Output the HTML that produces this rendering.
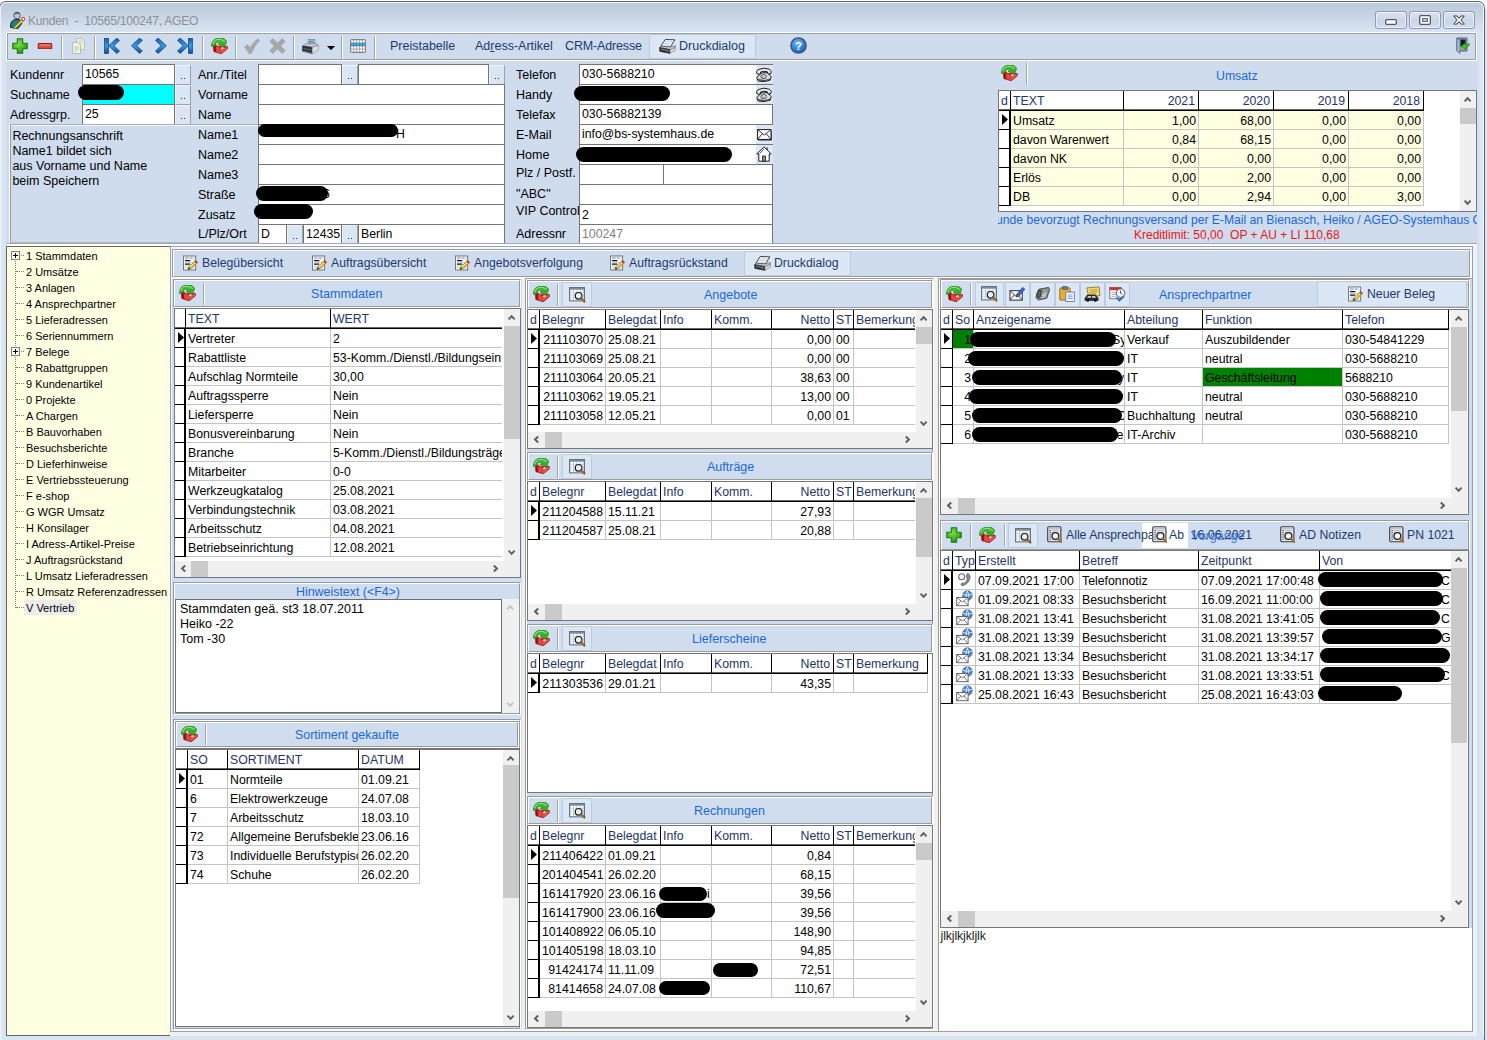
<!DOCTYPE html>
<html lang="de"><head><meta charset="utf-8"><title>Kunden - 10565/100247, AGEO</title>
<style>
html,body{margin:0;padding:0;background:#fff}
body{width:1487px;height:1040px;position:relative;overflow:hidden;font-family:"Liberation Sans",sans-serif;font-size:12.3px;color:#000}
div{position:absolute;box-sizing:content-box}
.t{white-space:nowrap}
.bl{color:#1c68da}
.gh{background:#fff;color:#24356a;white-space:nowrap;overflow:hidden}
.gc{white-space:nowrap;overflow:hidden}
.inp{background:#fff;border:1px solid #747474;box-sizing:border-box;white-space:nowrap;overflow:hidden;line-height:19px;padding-left:2px}
.dd{background:#dbe6f5;border:1px solid #eef3fa;border-right-color:#98a2b0;border-bottom-color:#98a2b0;box-sizing:border-box}.dd i{position:absolute;width:1px;height:1px;background:#1a2a55;top:12px}
.blob{background:#000;border-radius:9px}
.tree{font-size:11px;white-space:nowrap}
.hd{background:#d0ddef;box-sizing:border-box;border:1px solid #fff;border-right-color:#a0a8b4;border-bottom-color:#a0a8b4}
.sep{width:1px;background:#a0a6b0;border-right:1px solid #fff}
.btn{box-sizing:border-box;border:1px solid #bccbe0;background:#dbe7f5}
</style></head><body>
<div style="left:-1px;top:1px;width:1486px;height:1040px;box-sizing:border-box;border:1px solid #5b626c;border-bottom:none;border-radius:7px 7px 0 0;background:#cfdcee;overflow:hidden">
<div style="left:0;top:0;width:1484px;height:31px;background:linear-gradient(#bccadb 0,#c2cfdf 8px,#cfdbea 20px,#dae5f2 31px)"></div>
<div style="left:0;top:0;width:1484px;height:1040px;border-left:1px solid #eef3fa;border-top:1px solid #f4f8fc;border-right:1px solid #f4f8fc;border-radius:6px 6px 0 0;box-sizing:border-box"></div>
<div style="left:1px;top:31px;width:5px;height:1008px;background:linear-gradient(90deg,#dfe8f5,#d6e1f1)"></div>
<div style="left:1477px;top:31px;width:6px;height:1008px;background:linear-gradient(90deg,#d3dff0,#dfe8f5)"></div>
<div style="left:1px;top:1034px;width:1483px;height:6px;background:#d9e4f3"></div>
</div>
<div style="left:1485px;top:9px;width:2px;height:1031px;background:#dbe6f4"></div>
<div style="left:9px;top:11px"><svg width="16" height="18" viewBox="0 0 16 18" style="display:block"><circle cx="8" cy="4.5" r="3.3" fill="#c8c8c8" stroke="#444" stroke-width=".8"/><path d="M5 3.2 Q8 -.5 11 3" fill="#2a8a8a" stroke="#1a5a5a" stroke-width=".5"/><path d="M1.5 16.5 Q1 9.5 6 8.5 L10 8.5 Q13 9 12.5 13 L9 17.5Z" fill="#1f7f8a" stroke="#0a1a40" stroke-width=".9"/><path d="M4.5 16.8 L12.8 8.2 L14.6 10 L6.4 17.8Z" fill="#f0d818" stroke="#6a5a10" stroke-width=".7"/><circle cx="14.3" cy="8" r="1.6" fill="#fff" stroke="#d02020" stroke-width="1"/></svg></div>
<div class="t" style="left:28px;top:13.0px;height:16px;line-height:16px;color:#8d9096;font-size:12.2px;letter-spacing:-.3px;white-space:pre">Kunden  -  10565/100247, AGEO</div>
<div style="left:1375px;top:11px;width:32px;height:18px;box-sizing:border-box;border:1px solid #8c9ab4;border-radius:3px;background:linear-gradient(#d9e3f1,#c9d6e8 55%,#d3deee);box-shadow:inset 0 0 0 1px rgba(255,255,255,.55)"><svg width="12" height="6" style="position:absolute;left:9px;top:7px"><rect x=".7" y=".7" width="10.6" height="4.6" rx="1" fill="#fff" stroke="#4f5864" stroke-width="1.3"/></svg></div>
<div style="left:1409px;top:11px;width:32px;height:18px;box-sizing:border-box;border:1px solid #8c9ab4;border-radius:3px;background:linear-gradient(#d9e3f1,#c9d6e8 55%,#d3deee);box-shadow:inset 0 0 0 1px rgba(255,255,255,.55)"><svg width="12" height="10" style="position:absolute;left:9px;top:3px"><rect x=".7" y=".7" width="10.6" height="8.6" rx="1" fill="#fff" stroke="#4f5864" stroke-width="1.3"/><rect x="3.6" y="3.6" width="4.8" height="2.8" fill="#d0dbea" stroke="#4f5864" stroke-width="1"/></svg></div>
<div style="left:1443px;top:11px;width:32px;height:18px;box-sizing:border-box;border:1px solid #8c9ab4;border-radius:3px;background:linear-gradient(#d9e3f1,#c9d6e8 55%,#d3deee);box-shadow:inset 0 0 0 1px rgba(255,255,255,.55)"><svg width="12" height="10" style="position:absolute;left:9px;top:3px"><path d="M.8 1 L3.4 .8 L6 3.2 L8.6 .8 L11.2 1 L8 5 L11.2 9 L8.6 9.2 L6 6.8 L3.4 9.2 L.8 9 L4 5Z" fill="#fff" stroke="#4f5864" stroke-width="1.1" stroke-linejoin="round"/></svg></div>
<div style="left:6px;top:32px;width:1471px;height:29px;box-sizing:border-box;border:1px solid #fff"></div>
<div style="left:7px;top:33px;width:1469px;height:27px;box-sizing:border-box;border:1px solid #9aa0aa"></div>
<div style="left:12px;top:38px"><svg width="16" height="16" viewBox="0 0 16 16" style="display:block"><defs><radialGradient id="gp" cx=".4" cy=".35" r=".8"><stop offset="0" stop-color="#7be04a"/><stop offset=".6" stop-color="#3fae1c"/><stop offset="1" stop-color="#22800e"/></radialGradient></defs><path d="M5.3 .8 H10.7 V5.3 H15.2 V10.7 H10.7 V15.2 H5.3 V10.7 H.8 V5.3 H5.3Z" fill="url(#gp)" stroke="#1f7a0f" stroke-width="1.1" stroke-linejoin="round"/></svg></div>
<div style="left:37px;top:43px"><svg width="16" height="6.4" viewBox="0 0 16 7" style="display:block"><rect x=".6" y=".6" width="14.8" height="5.8" rx="1" fill="#e0483c" stroke="#8e2018" stroke-width="1.1"/><rect x="1.8" y="1.6" width="12.4" height="1.6" fill="#f08a80" opacity=".8"/></svg></div>
<div class="sep" style="left:61px;top:36px;height:23px"></div>
<div style="left:71px;top:38px"><svg width="15" height="16" viewBox="0 0 15 16" style="display:block"><path d="M5.5 .5 H11 L13.5 3 V11.5 H5.5Z" fill="#eef0e6" stroke="#b9bcb0" stroke-width=".9"/><path d="M1.5 4.5 H7 L9.5 7 V15.5 H1.5Z" fill="#f1f2ea" stroke="#b5b8ac" stroke-width=".9"/><path d="M3 9 H8 M3 11 H8 M3 13 H6" stroke="#b8d0b0" stroke-width="1"/><path d="M8 3 H11 M8 5 H12" stroke="#c0d6b8" stroke-width="1"/></svg></div>
<div class="sep" style="left:94px;top:36px;height:23px"></div>
<div style="left:104px;top:38px"><svg width="16" height="16" viewBox="0 0 16 16" style="display:block"><defs><linearGradient id="nf" x1="0" y1="0" x2="0" y2="1"><stop offset="0" stop-color="#1c58a8"/><stop offset=".5" stop-color="#3a9ade"/><stop offset="1" stop-color="#174a90"/></linearGradient></defs><rect x=".4" y=".2" width="4.2" height="15.3" fill="url(#nf)" stroke="#164684" stroke-width=".7"/><path transform="translate(4.6 0)" d="M8.2 0 L11 2.4 L5.4 7.75 L11 13.1 L8.2 15.5 L0 7.75Z" fill="url(#nf)" stroke="#164684" stroke-width=".7"/></svg></div>
<div style="left:131px;top:38px"><svg width="12" height="16" viewBox="0 0 12 16" style="display:block"><defs><linearGradient id="np" x1="0" y1="0" x2="0" y2="1"><stop offset="0" stop-color="#1c58a8"/><stop offset=".5" stop-color="#3a9ade"/><stop offset="1" stop-color="#174a90"/></linearGradient></defs><path transform="translate(.4 0)" d="M8.2 0 L11 2.4 L5.4 7.75 L11 13.1 L8.2 15.5 L0 7.75Z" fill="url(#np)" stroke="#164684" stroke-width=".7"/></svg></div>
<div style="left:155px;top:38px"><svg width="12" height="16" viewBox="0 0 12 16" style="display:block"><defs><linearGradient id="nn" x1="0" y1="0" x2="0" y2="1"><stop offset="0" stop-color="#1c58a8"/><stop offset=".5" stop-color="#3a9ade"/><stop offset="1" stop-color="#174a90"/></linearGradient></defs><path transform="translate(.4 0)" d="M2.8 0 L0 2.4 L5.6 7.75 L0 13.1 L2.8 15.5 L11 7.75Z" fill="url(#nn)" stroke="#164684" stroke-width=".7"/></svg></div>
<div style="left:177px;top:38px"><svg width="16" height="16" viewBox="0 0 16 16" style="display:block"><defs><linearGradient id="nl" x1="0" y1="0" x2="0" y2="1"><stop offset="0" stop-color="#1c58a8"/><stop offset=".5" stop-color="#3a9ade"/><stop offset="1" stop-color="#174a90"/></linearGradient></defs><rect x="11.4" y=".2" width="4.2" height="15.3" fill="url(#nl)" stroke="#164684" stroke-width=".7"/><path transform="translate(.4 0)" d="M2.8 0 L0 2.4 L5.6 7.75 L0 13.1 L2.8 15.5 L11 7.75Z" fill="url(#nl)" stroke="#164684" stroke-width=".7"/></svg></div>
<div class="sep" style="left:202px;top:36px;height:23px"></div>
<div style="left:211px;top:38px"><svg width="17" height="16" viewBox="0 0 17 16" style="display:block"><path d="M2.4 7.4 L4.4 6.8 L9.4 8.6 L16.4 8.6 L16.2 11 L10.2 15.8 L2.9 13.6Z" fill="#cc211c" stroke="#861010" stroke-width=".7" stroke-linejoin="round"/><path d="M2.5 7.6 L4.6 8 L5 14 L3 13.4Z" fill="#8e1410"/><path d="M5.2 8.4 L9.6 10 L9.8 15.2 L5.4 13.8Z" fill="#e04a42"/><path d="M10 10.4 L16 8.9 L16 10.8 L10.2 15.2Z" fill="#ee5248"/><path d="M10.4 9.4 L12.4 9.3 L12.4 10.8 L10.4 11.2Z" fill="#fff"/><path d="M5.6 7.4 L7.8 6.4 L7.6 8.2Z" fill="#fff" opacity=".95"/><path d="M.5 8.4 C.2 4.6 2 1.4 5.6 .5 C7.6 0 9.4 0 10.6 .4 L11.4 -.5 L15.6 3 L13.8 9 L7 6.4 L9.2 5.2 C7.4 3.8 4.8 4.2 4 6.2 L3.6 7.9Z" fill="#3fba2e" stroke="#227a18" stroke-width=".7" stroke-linejoin="round"/><path d="M1.7 6 C2.2 3.4 4 1.9 6.4 1.5 C8 1.2 9.6 1.4 10.8 1.8 L13.8 3.6" fill="none" stroke="#a4ec8c" stroke-width="1" opacity=".9"/><path d="M9 5.4 L13 7.6 L14.2 4" fill="#2a9a1e" opacity=".55"/></svg></div>
<div class="sep" style="left:235px;top:36px;height:23px"></div>
<div style="left:244px;top:38px"><svg width="16" height="16" viewBox="0 0 16 16" style="display:block"><path d="M.6 8.8 L3.4 6.6 L6 9.8 Q9.6 3.8 14 .8 L15.6 2.6 Q10.6 7.4 7.2 15.4 L5 15.4Z" fill="#a8a8a8" stroke="#9c9c9c" stroke-width=".6"/></svg></div>
<div style="left:269px;top:38px"><svg width="17" height="16" viewBox="0 0 17 16" style="display:block"><path d="M.8 3.4 L3.8 .6 L8.5 5 L13.2 .6 L16.2 3.4 L11.6 8 L16.2 12.6 L13.2 15.4 L8.5 11 L3.8 15.4 L.8 12.6 L5.4 8Z" fill="#a8a8a8" stroke="#9c9c9c" stroke-width=".6"/></svg></div>
<div class="sep" style="left:293px;top:36px;height:23px"></div>
<div style="left:302px;top:38.5px"><svg width="17" height="15" viewBox="0 0 17 15" style="display:block"><path d="M6 .5 H13 V5.4 H6Z" fill="#e4eef8" stroke="#7c8088" stroke-width=".8"/><path d="M7 1.4 H12 V4.6 H7Z" fill="#4a86d8"/><path d="M8.6 4.6 L10 2 L11.2 4.6Z" fill="#f4d020"/><path d="M.6 7 L4.6 4.6 H14.6 L16.4 6.4 L10.2 8.4Z" fill="#c4c8cc" stroke="#70747a" stroke-width=".6"/><path d="M.6 7 L10.2 8.4 L10.2 14.6 L.6 12.2Z" fill="#2c2e3c" stroke="#1c1c26" stroke-width=".6"/><path d="M10.2 8.4 L16.4 6.4 L16.4 11 L10.2 14.6Z" fill="#dcdee2" stroke="#8a8e94" stroke-width=".6"/><path d="M1.6 9.6 L9.2 10.8" stroke="#6a6e80" stroke-width="1"/><path d="M1.4 12 L9.6 14" stroke="#8c9c6c" stroke-width=".7"/></svg></div>
<svg width="8" height="4" style="position:absolute;left:326.5px;top:46px"><path d="M0 0 H8 L4 4.2Z" fill="#000"/></svg>
<div class="sep" style="left:341px;top:36px;height:23px"></div>
<div style="left:350px;top:39px"><svg width="16" height="14" viewBox="0 0 16 14" style="display:block"><rect x=".5" y=".5" width="15" height="13" rx="1" fill="#adadad" stroke="#848484" stroke-width="1"/><rect x=".8" y="3.7" width="14.4" height="3.3" fill="#2a86c8"/><rect x="1.3" y="1.5" width="1.9" height="1.9" fill="#fff"/><rect x="4.2" y="1.5" width="1.9" height="1.9" fill="#fff"/><rect x="7.1" y="1.5" width="1.9" height="1.9" fill="#fff"/><rect x="10.0" y="1.5" width="1.9" height="1.9" fill="#fff"/><rect x="12.9" y="1.5" width="1.9" height="1.9" fill="#fff"/><rect x="1.3" y="4.4" width="1.9" height="1.9" fill="#58b4cc"/><rect x="4.2" y="4.4" width="1.9" height="1.9" fill="#58b4cc"/><rect x="7.1" y="4.4" width="1.9" height="1.9" fill="#58b4cc"/><rect x="10.0" y="4.4" width="1.9" height="1.9" fill="#58b4cc"/><rect x="12.9" y="4.4" width="1.9" height="1.9" fill="#58b4cc"/><rect x="1.3" y="7.6" width="1.9" height="1.9" fill="#fff"/><rect x="4.2" y="7.6" width="1.9" height="1.9" fill="#fff"/><rect x="7.1" y="7.6" width="1.9" height="1.9" fill="#fff"/><rect x="10.0" y="7.6" width="1.9" height="1.9" fill="#fff"/><rect x="12.9" y="7.6" width="1.9" height="1.9" fill="#fff"/><rect x="1.3" y="10.6" width="1.9" height="1.9" fill="#fff"/><rect x="4.2" y="10.6" width="1.9" height="1.9" fill="#fff"/><rect x="7.1" y="10.6" width="1.9" height="1.9" fill="#fff"/><rect x="10.0" y="10.6" width="1.9" height="1.9" fill="#fff"/><rect x="12.9" y="10.6" width="1.9" height="1.9" fill="#fff"/></svg></div>
<div class="sep" style="left:374px;top:36px;height:23px"></div>
<div class="t" style="left:390px;top:38.0px;height:16px;line-height:16px;font-size:12.5px;color:#1e3a6e">Preistabelle</div>
<div class="t" style="left:475px;top:38.0px;height:16px;line-height:16px;font-size:12.5px;color:#1e3a6e">Ad<span style="text-decoration:underline">r</span>ess-Artikel</div>
<div class="t" style="left:565px;top:38.0px;height:16px;line-height:16px;font-size:12.5px;color:#1e3a6e;letter-spacing:-.15px">CRM-Adresse</div>
<div class="btn" style="left:649px;top:34px;width:107px;height:25px"></div>
<div style="left:658.5px;top:38.5px"><svg width="17" height="15" viewBox="0 0 17 15" style="display:block"><path d="M1.8 7.2 L6.2 .5 L15.8 .8 L11.4 8Z" fill="#f4f8fd" stroke="#2c2c30" stroke-width=".9" stroke-linejoin="round"/><path d="M5.6 2.6 L13 2.9 M4.6 4.4 L12 4.7 M3.8 6 L10.6 6.4" stroke="#b4c8e4" stroke-width=".8"/><path d="M.6 8.6 L2 7.2 L11.4 8 L16.4 6.6 L16.4 8.4 L11 10.6Z" fill="#c8cacc" stroke="#5a5c60" stroke-width=".6"/><path d="M.6 8.6 L11 10.6 L11 14.4 L.8 12.4Z" fill="#34363c" stroke="#1e1e22" stroke-width=".6"/><path d="M11 10.6 L16.4 8.4 L16.4 11.2 L11 14.4Z" fill="#d4d6da" stroke="#7a7c82" stroke-width=".6"/><path d="M2 10.2 L9.6 11.6" stroke="#8a8c92" stroke-width=".9"/><rect x="8" y="11.6" width="1.2" height="1" fill="#50d040"/></svg></div>
<div class="t" style="left:679px;top:38.0px;height:16px;line-height:16px;font-size:12.5px;color:#1e3a6e">Druckdialog</div>
<div style="left:790px;top:37px"><svg width="17" height="17" viewBox="0 0 17 17" style="display:block"><defs><radialGradient id="hg" cx=".4" cy=".3" r=".8"><stop offset="0" stop-color="#6db4f2"/><stop offset=".7" stop-color="#1f78d8"/><stop offset="1" stop-color="#1558a8"/></radialGradient></defs><circle cx="8.5" cy="8.5" r="7.6" fill="url(#hg)" stroke="#46566c" stroke-width="1.5"/><text x="8.5" y="12.6" font-family="Liberation Sans,sans-serif" font-weight="bold" font-size="11.5" fill="#fff" text-anchor="middle">?</text></svg></div>
<div style="left:1456px;top:37px"><svg width="14" height="17" viewBox="0 0 14 17" style="display:block"><path d="M1 1 H11 V14 H1Z" fill="#9aa2ad" stroke="#4c5560" stroke-width=".9"/><rect x="4.5" y="2.5" width="5" height="7" fill="#15182a"/><path d="M1 1 L4 3 V16.5 L1 14Z" fill="#a8c4e8" stroke="#4c5560" stroke-width=".7"/><path d="M13.8 6.5 Q13 10.5 9.5 10.5 L9.5 12.5 L5 9.2 L9.5 6 L9.5 8 Q12 8 13.8 6.5Z" fill="#3fc22a" stroke="#1d7a12" stroke-width=".6"/></svg></div>
<div class="t" style="left:10px;top:66.5px;height:16px;line-height:16px;font-size:12.5px">Kundennr</div>
<div class="inp" style="left:82px;top:64px;width:93px;height:21px;">10565</div>
<div class="dd" style="left:175px;top:65px;width:16px;height:20px"><i style="left:5px"></i><i style="left:8px"></i></div>
<div class="t" style="left:10px;top:86.5px;height:16px;line-height:16px;font-size:12.5px">Suchname</div>
<div class="inp" style="left:82px;top:84px;width:93px;height:21px;background:#00ffff;"></div>
<div class="dd" style="left:175px;top:85px;width:16px;height:20px"><i style="left:5px"></i><i style="left:8px"></i></div>
<div class="t" style="left:10px;top:106.5px;height:16px;line-height:16px;font-size:12.5px">Adressgrp.</div>
<div class="inp" style="left:82px;top:104px;width:93px;height:21px;">25</div>
<div class="dd" style="left:175px;top:105px;width:16px;height:20px"><i style="left:5px"></i><i style="left:8px"></i></div>
<div class="blob" style="left:78px;top:85px;width:46px;height:15px"></div>
<div style="left:9px;top:124px;width:249px;height:120px;box-sizing:border-box;border-left:1px solid #fff;border-bottom:1px solid #fff"></div><div style="left:10px;top:124px;width:248px;height:119px;box-sizing:border-box;border-left:1px solid #9a9a9a;border-top:1px solid #aab0ba;border-bottom:1px solid #b4b8c0"></div><div style="left:11px;top:125px;width:247px;height:1px;background:#f4f7fb"></div>
<div class="t" style="left:12.4px;top:128.0px;height:16px;line-height:16px;font-size:12.5px">Rechnungsanschrift</div>
<div class="t" style="left:12.4px;top:143.0px;height:16px;line-height:16px;font-size:12.5px">Name1 bildet sich</div>
<div class="t" style="left:12.4px;top:158.0px;height:16px;line-height:16px;font-size:12.5px">aus Vorname und Name</div>
<div class="t" style="left:12.4px;top:173.0px;height:16px;line-height:16px;font-size:12.5px">beim Speichern</div>
<div class="t" style="left:198px;top:66.5px;height:16px;line-height:16px;font-size:12.5px">Anr./Titel</div>
<div class="t" style="left:198px;top:86.5px;height:16px;line-height:16px;font-size:12.5px">Vorname</div>
<div class="t" style="left:198px;top:106.5px;height:16px;line-height:16px;font-size:12.5px">Name</div>
<div class="t" style="left:198px;top:126.5px;height:16px;line-height:16px;font-size:12.5px">Name1</div>
<div class="t" style="left:198px;top:146.5px;height:16px;line-height:16px;font-size:12.5px">Name2</div>
<div class="t" style="left:198px;top:166.5px;height:16px;line-height:16px;font-size:12.5px">Name3</div>
<div class="t" style="left:198px;top:186.5px;height:16px;line-height:16px;font-size:12.5px">Straße</div>
<div class="t" style="left:198px;top:206.5px;height:16px;line-height:16px;font-size:12.5px">Zusatz</div>
<div class="t" style="left:198px;top:225.5px;height:16px;line-height:16px;font-size:12.5px">L/Plz/Ort</div>
<div class="inp" style="left:258px;top:64px;width:84px;height:21px;"></div>
<div class="dd" style="left:342px;top:65px;width:16px;height:20px"><i style="left:5px"></i><i style="left:8px"></i></div>
<div class="inp" style="left:358px;top:64px;width:131px;height:21px;"></div>
<div class="dd" style="left:489px;top:65px;width:16px;height:20px"><i style="left:5px"></i><i style="left:8px"></i></div>
<div class="inp" style="left:258px;top:84px;width:247px;height:21px;"></div>
<div class="inp" style="left:258px;top:104px;width:247px;height:21px;"></div>
<div class="inp" style="left:258px;top:124px;width:247px;height:21px;"></div>
<div class="inp" style="left:258px;top:144px;width:247px;height:21px;"></div>
<div class="inp" style="left:258px;top:164px;width:247px;height:21px;"></div>
<div class="inp" style="left:258px;top:184px;width:247px;height:21px;"></div>
<div class="inp" style="left:258px;top:204px;width:247px;height:21px;"></div>
<div class="inp" style="left:258px;top:224px;width:29px;height:21px;">D</div>
<div class="dd" style="left:287px;top:225px;width:16px;height:20px"><i style="left:5px"></i><i style="left:8px"></i></div>
<div class="inp" style="left:303px;top:224px;width:39px;height:21px;">12435</div>
<div class="dd" style="left:342px;top:225px;width:16px;height:20px"><i style="left:5px"></i><i style="left:8px"></i></div>
<div class="inp" style="left:358px;top:224px;width:147px;height:21px;">Berlin</div>
<div class="t" style="left:396px;top:125.5px;height:16px;line-height:16px;">H</div>
<div class="t" style="left:323px;top:185.5px;height:16px;line-height:16px;">6</div>
<div class="blob" style="left:258px;top:123.5px;width:140px;height:13px"></div>
<div class="blob" style="left:256px;top:186px;width:72px;height:15px"></div>
<div class="blob" style="left:254px;top:204px;width:59px;height:15px"></div>
<div class="t" style="left:516px;top:66.5px;height:16px;line-height:16px;font-size:12.5px">Telefon</div>
<div class="t" style="left:516px;top:86.5px;height:16px;line-height:16px;font-size:12.5px">Handy</div>
<div class="t" style="left:516px;top:106.5px;height:16px;line-height:16px;font-size:12.5px">Telefax</div>
<div class="t" style="left:516px;top:126.5px;height:16px;line-height:16px;font-size:12.5px">E-Mail</div>
<div class="t" style="left:516px;top:146.5px;height:16px;line-height:16px;font-size:12.5px">Home</div>
<div class="t" style="left:516px;top:164.5px;height:16px;line-height:16px;font-size:12.5px">Plz / Postf.</div>
<div class="t" style="left:516px;top:185.5px;height:16px;line-height:16px;font-size:12.5px">"ABC"</div>
<div class="t" style="left:516px;top:203.0px;height:16px;line-height:16px;font-size:12.5px">VIP Control</div>
<div class="t" style="left:516px;top:225.5px;height:16px;line-height:16px;font-size:12.5px">Adressnr</div>
<div class="inp" style="left:579px;top:64px;width:194px;height:21px;">030-5688210</div>
<div class="inp" style="left:579px;top:84px;width:194px;height:21px;"></div>
<div class="inp" style="left:579px;top:104px;width:194px;height:21px;">030-56882139</div>
<div class="inp" style="left:579px;top:124px;width:194px;height:21px;">info@bs-systemhaus.de</div>
<div class="inp" style="left:579px;top:144px;width:194px;height:21px;"></div>
<div class="inp" style="left:579px;top:164px;width:85px;height:21px;"></div>
<div class="inp" style="left:663px;top:164px;width:110px;height:21px;"></div>
<div class="inp" style="left:579px;top:184px;width:194px;height:21px;"></div>
<div class="inp" style="left:579px;top:204px;width:194px;height:21px;line-height:21px">2</div>
<div class="inp" style="left:579px;top:224px;width:194px;height:21px;color:#808080">100247</div>
<div style="left:756px;top:65px;width:17px;height:19px;background:#dbe7f5"></div>
<div style="left:756px;top:67px"><svg width="16" height="15" viewBox="0 0 16 15" style="display:block"><path d="M2.2 14 L.8 10.8 L4.8 6 L11.6 5.6 L15.2 9.6 L14.2 13.2 L8 14.6Z" fill="#dcdcdc" stroke="#1c1c1c" stroke-width="1"/><path d="M2.4 13.6 L8 14.4 L14 13 L14.4 11.6 L8.2 13 L1.6 11.8Z" fill="#555"/><ellipse cx="7.6" cy="9.6" rx="2.7" ry="2" fill="#f6f6f6" stroke="#333" stroke-width=".9"/><path d="M6.4 9 L8.8 10.2 M6 10 L8.4 11" stroke="#777" stroke-width=".6"/><path d="M.9 6.6 Q-.2 3.4 3 2.4 Q7.6 .2 12.6 2 Q16 3 15 6.4 L12.2 7.2 L11.4 4.8 Q7.8 3.6 4.6 5 L4.2 7.4Z" fill="#ececec" stroke="#1c1c1c" stroke-width="1" stroke-linejoin="round"/></svg></div>
<div style="left:756px;top:85px;width:17px;height:19px;background:#dbe7f5"></div>
<div style="left:756px;top:87px"><svg width="16" height="15" viewBox="0 0 16 15" style="display:block"><path d="M2.2 14 L.8 10.8 L4.8 6 L11.6 5.6 L15.2 9.6 L14.2 13.2 L8 14.6Z" fill="#dcdcdc" stroke="#1c1c1c" stroke-width="1"/><path d="M2.4 13.6 L8 14.4 L14 13 L14.4 11.6 L8.2 13 L1.6 11.8Z" fill="#555"/><ellipse cx="7.6" cy="9.6" rx="2.7" ry="2" fill="#f6f6f6" stroke="#333" stroke-width=".9"/><path d="M6.4 9 L8.8 10.2 M6 10 L8.4 11" stroke="#777" stroke-width=".6"/><path d="M.9 6.6 Q-.2 3.4 3 2.4 Q7.6 .2 12.6 2 Q16 3 15 6.4 L12.2 7.2 L11.4 4.8 Q7.8 3.6 4.6 5 L4.2 7.4Z" fill="#ececec" stroke="#1c1c1c" stroke-width="1" stroke-linejoin="round"/></svg></div>
<div style="left:756px;top:125px;width:17px;height:19px;background:#dbe7f5"></div>
<div style="left:757px;top:129px"><svg width="15" height="12" viewBox="0 0 15 12" style="display:block"><rect x="1.4" y="1.6" width="13.4" height="10" fill="#444"/><rect x=".6" y=".6" width="13.4" height="9.8" fill="#fff" stroke="#1c1c1c" stroke-width="1"/><path d="M.8 .8 L7.3 6 L13.8 .8 M.8 10.2 L5.4 4.6 M13.8 10.2 L9.2 4.6" fill="none" stroke="#1c1c1c" stroke-width=".9"/></svg></div>
<div style="left:756px;top:145px;width:17px;height:19px;background:#dbe7f5"></div>
<div style="left:756px;top:146px"><svg width="16" height="16" viewBox="0 0 16 16" style="display:block"><path d="M8 .8 L.8 8 L2.8 8 L2.8 15.2 L13.2 15.2 L13.2 8 L15.2 8Z" fill="#fff" stroke="#222" stroke-width="1"/><path d="M8 3 L3.6 7.4" stroke="#222" stroke-width=".8"/><rect x="6.5" y="10" width="3" height="5" fill="#888" stroke="#222" stroke-width=".8"/><path d="M11 1.5 V4" stroke="#222" stroke-width="1.2"/></svg></div>
<div class="blob" style="left:574px;top:86px;width:96px;height:15px"></div>
<div class="blob" style="left:576px;top:147px;width:156px;height:15px"></div>
<div style="left:1001px;top:65px"><svg width="17" height="16" viewBox="0 0 17 16" style="display:block"><path d="M2.4 7.4 L4.4 6.8 L9.4 8.6 L16.4 8.6 L16.2 11 L10.2 15.8 L2.9 13.6Z" fill="#cc211c" stroke="#861010" stroke-width=".7" stroke-linejoin="round"/><path d="M2.5 7.6 L4.6 8 L5 14 L3 13.4Z" fill="#8e1410"/><path d="M5.2 8.4 L9.6 10 L9.8 15.2 L5.4 13.8Z" fill="#e04a42"/><path d="M10 10.4 L16 8.9 L16 10.8 L10.2 15.2Z" fill="#ee5248"/><path d="M10.4 9.4 L12.4 9.3 L12.4 10.8 L10.4 11.2Z" fill="#fff"/><path d="M5.6 7.4 L7.8 6.4 L7.6 8.2Z" fill="#fff" opacity=".95"/><path d="M.5 8.4 C.2 4.6 2 1.4 5.6 .5 C7.6 0 9.4 0 10.6 .4 L11.4 -.5 L15.6 3 L13.8 9 L7 6.4 L9.2 5.2 C7.4 3.8 4.8 4.2 4 6.2 L3.6 7.9Z" fill="#3fba2e" stroke="#227a18" stroke-width=".7" stroke-linejoin="round"/><path d="M1.7 6 C2.2 3.4 4 1.9 6.4 1.5 C8 1.2 9.6 1.4 10.8 1.8 L13.8 3.6" fill="none" stroke="#a4ec8c" stroke-width="1" opacity=".9"/><path d="M9 5.4 L13 7.6 L14.2 4" fill="#2a9a1e" opacity=".55"/></svg></div>
<div class="sep" style="left:1026px;top:63px;height:22px"></div>
<div class="t bl" style="left:1216px;top:67.5px;height:16px;line-height:16px;">Umsatz</div>
<div style="left:998px;top:90px;width:479px;height:122px;background:#fff;box-sizing:border-box;border:1px solid #767676;overflow:hidden">
<div style="left:0;top:0;width:462px;height:120px;overflow:hidden">
<div class="gh" style="left:0px;top:0px;width:11px;height:19px;line-height:18px;border-right:1px solid #000;border-bottom:1px solid #000;box-shadow:inset 0 -1px 0 #666;"><span style="padding:0 0 0 2px;display:block;overflow:hidden;white-space:nowrap;position:relative;top:1px">d</span></div>
<div class="gh" style="left:12px;top:0px;width:112px;height:19px;line-height:18px;border-right:1px solid #000;border-bottom:1px solid #000;box-shadow:inset 0 -1px 0 #666;"><span style="padding:0 3px 0 2px;display:block;overflow:hidden;white-space:nowrap;position:relative;top:1px">TEXT</span></div>
<div class="gh" style="left:125px;top:0px;width:74px;height:19px;line-height:18px;border-right:1px solid #000;border-bottom:1px solid #000;box-shadow:inset 0 -1px 0 #666;text-align:right;"><span style="padding:0 3px 0 2px;display:block;overflow:hidden;white-space:nowrap;position:relative;top:1px">2021</span></div>
<div class="gh" style="left:200px;top:0px;width:74px;height:19px;line-height:18px;border-right:1px solid #000;border-bottom:1px solid #000;box-shadow:inset 0 -1px 0 #666;text-align:right;"><span style="padding:0 3px 0 2px;display:block;overflow:hidden;white-space:nowrap;position:relative;top:1px">2020</span></div>
<div class="gh" style="left:275px;top:0px;width:74px;height:19px;line-height:18px;border-right:1px solid #000;border-bottom:1px solid #000;box-shadow:inset 0 -1px 0 #666;text-align:right;"><span style="padding:0 3px 0 2px;display:block;overflow:hidden;white-space:nowrap;position:relative;top:1px">2019</span></div>
<div class="gh" style="left:350px;top:0px;width:74px;height:19px;line-height:18px;border-right:1px solid #000;border-bottom:1px solid #000;box-shadow:inset 0 -1px 0 #666;text-align:right;"><span style="padding:0 3px 0 2px;display:block;overflow:hidden;white-space:nowrap;position:relative;top:1px">2018</span></div>
<div style="left:0px;top:20px;width:10px;height:18px;background:#fff;border-right:2px solid #000;border-bottom:1px solid #000;"><svg width="8" height="12" style="position:absolute;left:3px;top:3px"><path d="M0 0 L6 5.5 L0 11Z" fill="#000"/></svg></div>
<div class="gc" style="left:12px;top:20px;width:112px;height:18px;line-height:18px;background:#ffffe1;border-right:1px solid #c4c4c4;border-bottom:1px solid #c4c4c4;"><span style="padding:0 2px 0 2px;display:block;overflow:hidden;white-space:nowrap;position:relative;top:1px">Umsatz</span></div>
<div class="gc" style="left:125px;top:20px;width:74px;height:18px;line-height:18px;background:#ffffe1;border-right:1px solid #c4c4c4;border-bottom:1px solid #c4c4c4;text-align:right;"><span style="padding:0 2px 0 2px;display:block;overflow:hidden;white-space:nowrap;position:relative;top:1px">1,00</span></div>
<div class="gc" style="left:200px;top:20px;width:74px;height:18px;line-height:18px;background:#ffffe1;border-right:1px solid #c4c4c4;border-bottom:1px solid #c4c4c4;text-align:right;"><span style="padding:0 2px 0 2px;display:block;overflow:hidden;white-space:nowrap;position:relative;top:1px">68,00</span></div>
<div class="gc" style="left:275px;top:20px;width:74px;height:18px;line-height:18px;background:#ffffe1;border-right:1px solid #c4c4c4;border-bottom:1px solid #c4c4c4;text-align:right;"><span style="padding:0 2px 0 2px;display:block;overflow:hidden;white-space:nowrap;position:relative;top:1px">0,00</span></div>
<div class="gc" style="left:350px;top:20px;width:74px;height:18px;line-height:18px;background:#ffffe1;border-right:1px solid #c4c4c4;border-bottom:1px solid #c4c4c4;text-align:right;"><span style="padding:0 2px 0 2px;display:block;overflow:hidden;white-space:nowrap;position:relative;top:1px">0,00</span></div>
<div style="left:0px;top:39px;width:10px;height:18px;background:#fff;border-right:2px solid #000;border-bottom:1px solid #000;"></div>
<div class="gc" style="left:12px;top:39px;width:112px;height:18px;line-height:18px;background:#ffffe1;border-right:1px solid #c4c4c4;border-bottom:1px solid #c4c4c4;"><span style="padding:0 2px 0 2px;display:block;overflow:hidden;white-space:nowrap;position:relative;top:1px">davon Warenwert</span></div>
<div class="gc" style="left:125px;top:39px;width:74px;height:18px;line-height:18px;background:#ffffe1;border-right:1px solid #c4c4c4;border-bottom:1px solid #c4c4c4;text-align:right;"><span style="padding:0 2px 0 2px;display:block;overflow:hidden;white-space:nowrap;position:relative;top:1px">0,84</span></div>
<div class="gc" style="left:200px;top:39px;width:74px;height:18px;line-height:18px;background:#ffffe1;border-right:1px solid #c4c4c4;border-bottom:1px solid #c4c4c4;text-align:right;"><span style="padding:0 2px 0 2px;display:block;overflow:hidden;white-space:nowrap;position:relative;top:1px">68,15</span></div>
<div class="gc" style="left:275px;top:39px;width:74px;height:18px;line-height:18px;background:#ffffe1;border-right:1px solid #c4c4c4;border-bottom:1px solid #c4c4c4;text-align:right;"><span style="padding:0 2px 0 2px;display:block;overflow:hidden;white-space:nowrap;position:relative;top:1px">0,00</span></div>
<div class="gc" style="left:350px;top:39px;width:74px;height:18px;line-height:18px;background:#ffffe1;border-right:1px solid #c4c4c4;border-bottom:1px solid #c4c4c4;text-align:right;"><span style="padding:0 2px 0 2px;display:block;overflow:hidden;white-space:nowrap;position:relative;top:1px">0,00</span></div>
<div style="left:0px;top:58px;width:10px;height:18px;background:#fff;border-right:2px solid #000;border-bottom:1px solid #000;"></div>
<div class="gc" style="left:12px;top:58px;width:112px;height:18px;line-height:18px;background:#ffffe1;border-right:1px solid #c4c4c4;border-bottom:1px solid #c4c4c4;"><span style="padding:0 2px 0 2px;display:block;overflow:hidden;white-space:nowrap;position:relative;top:1px">davon NK</span></div>
<div class="gc" style="left:125px;top:58px;width:74px;height:18px;line-height:18px;background:#ffffe1;border-right:1px solid #c4c4c4;border-bottom:1px solid #c4c4c4;text-align:right;"><span style="padding:0 2px 0 2px;display:block;overflow:hidden;white-space:nowrap;position:relative;top:1px">0,00</span></div>
<div class="gc" style="left:200px;top:58px;width:74px;height:18px;line-height:18px;background:#ffffe1;border-right:1px solid #c4c4c4;border-bottom:1px solid #c4c4c4;text-align:right;"><span style="padding:0 2px 0 2px;display:block;overflow:hidden;white-space:nowrap;position:relative;top:1px">0,00</span></div>
<div class="gc" style="left:275px;top:58px;width:74px;height:18px;line-height:18px;background:#ffffe1;border-right:1px solid #c4c4c4;border-bottom:1px solid #c4c4c4;text-align:right;"><span style="padding:0 2px 0 2px;display:block;overflow:hidden;white-space:nowrap;position:relative;top:1px">0,00</span></div>
<div class="gc" style="left:350px;top:58px;width:74px;height:18px;line-height:18px;background:#ffffe1;border-right:1px solid #c4c4c4;border-bottom:1px solid #c4c4c4;text-align:right;"><span style="padding:0 2px 0 2px;display:block;overflow:hidden;white-space:nowrap;position:relative;top:1px">0,00</span></div>
<div style="left:0px;top:77px;width:10px;height:18px;background:#fff;border-right:2px solid #000;border-bottom:1px solid #000;"></div>
<div class="gc" style="left:12px;top:77px;width:112px;height:18px;line-height:18px;background:#ffffe1;border-right:1px solid #c4c4c4;border-bottom:1px solid #c4c4c4;"><span style="padding:0 2px 0 2px;display:block;overflow:hidden;white-space:nowrap;position:relative;top:1px">Erlös</span></div>
<div class="gc" style="left:125px;top:77px;width:74px;height:18px;line-height:18px;background:#ffffe1;border-right:1px solid #c4c4c4;border-bottom:1px solid #c4c4c4;text-align:right;"><span style="padding:0 2px 0 2px;display:block;overflow:hidden;white-space:nowrap;position:relative;top:1px">0,00</span></div>
<div class="gc" style="left:200px;top:77px;width:74px;height:18px;line-height:18px;background:#ffffe1;border-right:1px solid #c4c4c4;border-bottom:1px solid #c4c4c4;text-align:right;"><span style="padding:0 2px 0 2px;display:block;overflow:hidden;white-space:nowrap;position:relative;top:1px">2,00</span></div>
<div class="gc" style="left:275px;top:77px;width:74px;height:18px;line-height:18px;background:#ffffe1;border-right:1px solid #c4c4c4;border-bottom:1px solid #c4c4c4;text-align:right;"><span style="padding:0 2px 0 2px;display:block;overflow:hidden;white-space:nowrap;position:relative;top:1px">0,00</span></div>
<div class="gc" style="left:350px;top:77px;width:74px;height:18px;line-height:18px;background:#ffffe1;border-right:1px solid #c4c4c4;border-bottom:1px solid #c4c4c4;text-align:right;"><span style="padding:0 2px 0 2px;display:block;overflow:hidden;white-space:nowrap;position:relative;top:1px">0,00</span></div>
<div style="left:0px;top:96px;width:10px;height:18px;background:#fff;border-right:2px solid #000;border-bottom:1px solid #000;"></div>
<div class="gc" style="left:12px;top:96px;width:112px;height:18px;line-height:18px;background:#ffffe1;border-right:1px solid #c4c4c4;border-bottom:1px solid #c4c4c4;"><span style="padding:0 2px 0 2px;display:block;overflow:hidden;white-space:nowrap;position:relative;top:1px">DB</span></div>
<div class="gc" style="left:125px;top:96px;width:74px;height:18px;line-height:18px;background:#ffffe1;border-right:1px solid #c4c4c4;border-bottom:1px solid #c4c4c4;text-align:right;"><span style="padding:0 2px 0 2px;display:block;overflow:hidden;white-space:nowrap;position:relative;top:1px">0,00</span></div>
<div class="gc" style="left:200px;top:96px;width:74px;height:18px;line-height:18px;background:#ffffe1;border-right:1px solid #c4c4c4;border-bottom:1px solid #c4c4c4;text-align:right;"><span style="padding:0 2px 0 2px;display:block;overflow:hidden;white-space:nowrap;position:relative;top:1px">2,94</span></div>
<div class="gc" style="left:275px;top:96px;width:74px;height:18px;line-height:18px;background:#ffffe1;border-right:1px solid #c4c4c4;border-bottom:1px solid #c4c4c4;text-align:right;"><span style="padding:0 2px 0 2px;display:block;overflow:hidden;white-space:nowrap;position:relative;top:1px">0,00</span></div>
<div class="gc" style="left:350px;top:96px;width:74px;height:18px;line-height:18px;background:#ffffe1;border-right:1px solid #c4c4c4;border-bottom:1px solid #c4c4c4;text-align:right;"><span style="padding:0 2px 0 2px;display:block;overflow:hidden;white-space:nowrap;position:relative;top:1px">3,00</span></div>
</div>
</div>
<div style="left:1460px;top:91px;width:16px;height:120px;background:#f0f0f0"><svg width="16" height="120" style="display:block"><path d="M4.6 10.4 L7.6 7.2 L10.6 10.4" fill="none" stroke="#5c5c5c" stroke-width="1.9"/><path d="M4.6 109.6 L7.6 112.8 L10.6 109.6" fill="none" stroke="#5c5c5c" stroke-width="1.9"/><rect x="0" y="17" width="16" height="16" fill="#cacaca"/></svg></div>
<div style="left:998px;top:212px;width:479px;height:16px;overflow:hidden"><div class="t bl" style="left:-10px;top:0;line-height:16px;font-size:12.13px">Kunde bevorzugt Rechnungsversand per E-Mail an Bienasch, Heiko / AGEO-Systemhaus GmbH</div></div>
<div class="t" style="left:1134px;top:226.5px;height:16px;line-height:16px;color:#f01414;white-space:pre;font-size:12px">Kreditlimit: 50,00  OP + AU + LI 110,68</div>
<div style="left:7px;top:243px;width:1470px;height:1px;background:#a4a8ae"></div>
<div style="left:7px;top:244px;width:1470px;height:2px;background:#fff"></div>
<div style="left:6px;top:246px;width:164px;height:790px;background:#ffffe1;box-sizing:border-box;border:1px solid #646464;border-right:none"></div>
<div style="left:15px;top:256px;width:0;height:352px;border-left:1px dotted #808080"></div>
<div style="left:16px;top:255px;width:8px;height:0;border-top:1px dotted #808080"></div>
<div style="left:11px;top:251px;width:9px;height:9px;box-sizing:border-box;border:1px solid #808080;background:#fff"></div>
<div style="left:13px;top:255px;width:5px;height:1px;background:#000"></div><div style="left:15px;top:253px;width:1px;height:5px;background:#000"></div>
<div class="t tree" style="left:26px;top:248.5px;height:14px;line-height:14px;">1 Stammdaten</div>
<div style="left:16px;top:271px;width:8px;height:0;border-top:1px dotted #808080"></div>
<div class="t tree" style="left:26px;top:264.5px;height:14px;line-height:14px;">2 Umsätze</div>
<div style="left:16px;top:287px;width:8px;height:0;border-top:1px dotted #808080"></div>
<div class="t tree" style="left:26px;top:280.5px;height:14px;line-height:14px;">3 Anlagen</div>
<div style="left:16px;top:303px;width:8px;height:0;border-top:1px dotted #808080"></div>
<div class="t tree" style="left:26px;top:296.5px;height:14px;line-height:14px;">4 Ansprechpartner</div>
<div style="left:16px;top:319px;width:8px;height:0;border-top:1px dotted #808080"></div>
<div class="t tree" style="left:26px;top:312.5px;height:14px;line-height:14px;">5 Lieferadressen</div>
<div style="left:16px;top:335px;width:8px;height:0;border-top:1px dotted #808080"></div>
<div class="t tree" style="left:26px;top:328.5px;height:14px;line-height:14px;">6 Seriennummern</div>
<div style="left:16px;top:351px;width:8px;height:0;border-top:1px dotted #808080"></div>
<div style="left:11px;top:347px;width:9px;height:9px;box-sizing:border-box;border:1px solid #808080;background:#fff"></div>
<div style="left:13px;top:351px;width:5px;height:1px;background:#000"></div><div style="left:15px;top:349px;width:1px;height:5px;background:#000"></div>
<div class="t tree" style="left:26px;top:344.5px;height:14px;line-height:14px;">7 Belege</div>
<div style="left:16px;top:367px;width:8px;height:0;border-top:1px dotted #808080"></div>
<div class="t tree" style="left:26px;top:360.5px;height:14px;line-height:14px;">8 Rabattgruppen</div>
<div style="left:16px;top:383px;width:8px;height:0;border-top:1px dotted #808080"></div>
<div class="t tree" style="left:26px;top:376.5px;height:14px;line-height:14px;">9 Kundenartikel</div>
<div style="left:16px;top:399px;width:8px;height:0;border-top:1px dotted #808080"></div>
<div class="t tree" style="left:26px;top:392.5px;height:14px;line-height:14px;">0 Projekte</div>
<div style="left:16px;top:415px;width:8px;height:0;border-top:1px dotted #808080"></div>
<div class="t tree" style="left:26px;top:408.5px;height:14px;line-height:14px;">A Chargen</div>
<div style="left:16px;top:431px;width:8px;height:0;border-top:1px dotted #808080"></div>
<div class="t tree" style="left:26px;top:424.5px;height:14px;line-height:14px;">B Bauvorhaben</div>
<div style="left:16px;top:447px;width:8px;height:0;border-top:1px dotted #808080"></div>
<div class="t tree" style="left:26px;top:440.5px;height:14px;line-height:14px;">Besuchsberichte</div>
<div style="left:16px;top:463px;width:8px;height:0;border-top:1px dotted #808080"></div>
<div class="t tree" style="left:26px;top:456.5px;height:14px;line-height:14px;">D Lieferhinweise</div>
<div style="left:16px;top:479px;width:8px;height:0;border-top:1px dotted #808080"></div>
<div class="t tree" style="left:26px;top:472.5px;height:14px;line-height:14px;">E Vertriebssteuerung</div>
<div style="left:16px;top:495px;width:8px;height:0;border-top:1px dotted #808080"></div>
<div class="t tree" style="left:26px;top:488.5px;height:14px;line-height:14px;">F e-shop</div>
<div style="left:16px;top:511px;width:8px;height:0;border-top:1px dotted #808080"></div>
<div class="t tree" style="left:26px;top:504.5px;height:14px;line-height:14px;">G WGR Umsatz</div>
<div style="left:16px;top:527px;width:8px;height:0;border-top:1px dotted #808080"></div>
<div class="t tree" style="left:26px;top:520.5px;height:14px;line-height:14px;">H Konsilager</div>
<div style="left:16px;top:543px;width:8px;height:0;border-top:1px dotted #808080"></div>
<div class="t tree" style="left:26px;top:536.5px;height:14px;line-height:14px;">I Adress-Artikel-Preise</div>
<div style="left:16px;top:559px;width:8px;height:0;border-top:1px dotted #808080"></div>
<div class="t tree" style="left:26px;top:552.5px;height:14px;line-height:14px;">J Auftragsrückstand</div>
<div style="left:16px;top:575px;width:8px;height:0;border-top:1px dotted #808080"></div>
<div class="t tree" style="left:26px;top:568.5px;height:14px;line-height:14px;">L Umsatz Lieferadressen</div>
<div style="left:16px;top:591px;width:8px;height:0;border-top:1px dotted #808080"></div>
<div class="t tree" style="left:26px;top:584.5px;height:14px;line-height:14px;">R Umsatz Referenzadressen</div>
<div style="left:16px;top:607px;width:8px;height:0;border-top:1px dotted #808080"></div>
<div style="left:24px;top:600.0px;width:53px;height:15px;background:#ececec"></div>
<div class="t tree" style="left:26px;top:600.5px;height:14px;line-height:14px;">V Vertrieb</div>
<div style="left:170px;top:246px;width:1307px;height:790px;background:#f0f0f0"></div>
<div style="left:170px;top:246px;width:1303px;height:786px;box-sizing:border-box;border:1px solid #8ca2c6;background:#f7f9fc"></div>
<div style="left:522px;top:279px;width:3px;height:751px;background:#f0f0f0"></div>
<div style="left:934px;top:279px;width:4px;height:751px;background:#f0f0f0"></div>
<div style="left:172px;top:249px;width:1299px;height:29px;box-sizing:border-box;border:1px solid #9a9a9a;border-right-color:#fff;border-bottom-color:#fff;background:#cfdcee;"><div style="left:0;top:0;right:0;bottom:0;box-sizing:border-box;border:1px solid #fff;border-right-color:#9a9a9a;border-bottom-color:#9a9a9a"></div></div>
<div style="left:183px;top:255px"><svg width="15" height="16" viewBox="0 0 16 16" style="display:block"><rect x=".5" y=".5" width="13" height="15" fill="#eef5fc" stroke="#6e7278" stroke-width="1"/><path d="M2.4 2.6 H6 M7.4 2.6 H10" stroke="#7e8894" stroke-width="1.1"/><path d="M10.8 3.4 H12" stroke="#8fb0d8" stroke-width=".8"/><path d="M2.2 5.5 H7.8 M2.2 9.2 H7.6" stroke="#111" stroke-width="1.3"/><path d="M2.4 7.4 H11 M2.4 11.4 H6.4 M2.4 13.2 H5.4 M10 11.5 H12 M9 13.4 H12" stroke="#a8c8ea" stroke-width=".9"/><path d="M5.2 15.2 L6.2 12.2 L12.6 6.2 L14.6 8.2 L8.2 14.2Z" fill="#f3c62c" stroke="#8a6410" stroke-width=".7" stroke-linejoin="round"/><path d="M7 12.6 L12.9 7" stroke="#fbe890" stroke-width=".9"/><path d="M5.2 15.2 L6.2 12.2 L8.2 14.2Z" fill="#4a3a20"/><path d="M12.6 6.2 L13.6 5.3 L15.6 7.3 L14.6 8.2Z" fill="#d83030" stroke="#7a1a1a" stroke-width=".5"/></svg></div>
<div class="t" style="left:202px;top:255.0px;height:16px;line-height:16px;font-size:12.25px;color:#1e3a6e">Belegübersicht</div>
<div style="left:312px;top:255px"><svg width="15" height="16" viewBox="0 0 16 16" style="display:block"><rect x=".5" y=".5" width="13" height="15" fill="#eef5fc" stroke="#6e7278" stroke-width="1"/><path d="M2.4 2.6 H6 M7.4 2.6 H10" stroke="#7e8894" stroke-width="1.1"/><path d="M10.8 3.4 H12" stroke="#8fb0d8" stroke-width=".8"/><path d="M2.2 5.5 H7.8 M2.2 9.2 H7.6" stroke="#111" stroke-width="1.3"/><path d="M2.4 7.4 H11 M2.4 11.4 H6.4 M2.4 13.2 H5.4 M10 11.5 H12 M9 13.4 H12" stroke="#a8c8ea" stroke-width=".9"/><path d="M5.2 15.2 L6.2 12.2 L12.6 6.2 L14.6 8.2 L8.2 14.2Z" fill="#f3c62c" stroke="#8a6410" stroke-width=".7" stroke-linejoin="round"/><path d="M7 12.6 L12.9 7" stroke="#fbe890" stroke-width=".9"/><path d="M5.2 15.2 L6.2 12.2 L8.2 14.2Z" fill="#4a3a20"/><path d="M12.6 6.2 L13.6 5.3 L15.6 7.3 L14.6 8.2Z" fill="#d83030" stroke="#7a1a1a" stroke-width=".5"/></svg></div>
<div class="t" style="left:331px;top:255.0px;height:16px;line-height:16px;font-size:12.25px;color:#1e3a6e">Auftragsübersicht</div>
<div style="left:455px;top:255px"><svg width="15" height="16" viewBox="0 0 16 16" style="display:block"><rect x=".5" y=".5" width="13" height="15" fill="#eef5fc" stroke="#6e7278" stroke-width="1"/><path d="M2.4 2.6 H6 M7.4 2.6 H10" stroke="#7e8894" stroke-width="1.1"/><path d="M10.8 3.4 H12" stroke="#8fb0d8" stroke-width=".8"/><path d="M2.2 5.5 H7.8 M2.2 9.2 H7.6" stroke="#111" stroke-width="1.3"/><path d="M2.4 7.4 H11 M2.4 11.4 H6.4 M2.4 13.2 H5.4 M10 11.5 H12 M9 13.4 H12" stroke="#a8c8ea" stroke-width=".9"/><path d="M5.2 15.2 L6.2 12.2 L12.6 6.2 L14.6 8.2 L8.2 14.2Z" fill="#f3c62c" stroke="#8a6410" stroke-width=".7" stroke-linejoin="round"/><path d="M7 12.6 L12.9 7" stroke="#fbe890" stroke-width=".9"/><path d="M5.2 15.2 L6.2 12.2 L8.2 14.2Z" fill="#4a3a20"/><path d="M12.6 6.2 L13.6 5.3 L15.6 7.3 L14.6 8.2Z" fill="#d83030" stroke="#7a1a1a" stroke-width=".5"/></svg></div>
<div class="t" style="left:474px;top:255.0px;height:16px;line-height:16px;font-size:12.25px;color:#1e3a6e">Angebotsverfolgung</div>
<div style="left:610px;top:255px"><svg width="15" height="16" viewBox="0 0 16 16" style="display:block"><rect x=".5" y=".5" width="13" height="15" fill="#eef5fc" stroke="#6e7278" stroke-width="1"/><path d="M2.4 2.6 H6 M7.4 2.6 H10" stroke="#7e8894" stroke-width="1.1"/><path d="M10.8 3.4 H12" stroke="#8fb0d8" stroke-width=".8"/><path d="M2.2 5.5 H7.8 M2.2 9.2 H7.6" stroke="#111" stroke-width="1.3"/><path d="M2.4 7.4 H11 M2.4 11.4 H6.4 M2.4 13.2 H5.4 M10 11.5 H12 M9 13.4 H12" stroke="#a8c8ea" stroke-width=".9"/><path d="M5.2 15.2 L6.2 12.2 L12.6 6.2 L14.6 8.2 L8.2 14.2Z" fill="#f3c62c" stroke="#8a6410" stroke-width=".7" stroke-linejoin="round"/><path d="M7 12.6 L12.9 7" stroke="#fbe890" stroke-width=".9"/><path d="M5.2 15.2 L6.2 12.2 L8.2 14.2Z" fill="#4a3a20"/><path d="M12.6 6.2 L13.6 5.3 L15.6 7.3 L14.6 8.2Z" fill="#d83030" stroke="#7a1a1a" stroke-width=".5"/></svg></div>
<div class="t" style="left:629px;top:255.0px;height:16px;line-height:16px;font-size:12.25px;color:#1e3a6e">Auftragsrückstand</div>
<div class="btn" style="left:744px;top:251px;width:107px;height:25px"></div>
<div style="left:754px;top:255.5px"><svg width="17" height="15" viewBox="0 0 17 15" style="display:block"><path d="M1.8 7.2 L6.2 .5 L15.8 .8 L11.4 8Z" fill="#f4f8fd" stroke="#2c2c30" stroke-width=".9" stroke-linejoin="round"/><path d="M5.6 2.6 L13 2.9 M4.6 4.4 L12 4.7 M3.8 6 L10.6 6.4" stroke="#b4c8e4" stroke-width=".8"/><path d="M.6 8.6 L2 7.2 L11.4 8 L16.4 6.6 L16.4 8.4 L11 10.6Z" fill="#c8cacc" stroke="#5a5c60" stroke-width=".6"/><path d="M.6 8.6 L11 10.6 L11 14.4 L.8 12.4Z" fill="#34363c" stroke="#1e1e22" stroke-width=".6"/><path d="M11 10.6 L16.4 8.4 L16.4 11.2 L11 14.4Z" fill="#d4d6da" stroke="#7a7c82" stroke-width=".6"/><path d="M2 10.2 L9.6 11.6" stroke="#8a8c92" stroke-width=".9"/><rect x="8" y="11.6" width="1.2" height="1" fill="#50d040"/></svg></div>
<div class="t" style="left:774px;top:255.0px;height:16px;line-height:16px;font-size:12.25px;color:#1e3a6e">Druckdialog</div>
<div style="left:172px;top:279px;width:350px;height:751px;background:#cfdcee"></div>
<div style="left:173px;top:578px;width:348px;height:4px;background:#cfe0f4"></div>
<div style="left:173px;top:714px;width:348px;height:6px;background:#cfe0f4"></div>
<div style="left:173px;top:279px;width:348px;height:29px;box-sizing:border-box;border:1px solid #9a9a9a;border-right-color:#fff;border-bottom-color:#fff;background:#d0ddef;"><div style="left:0;top:0;right:0;bottom:0;box-sizing:border-box;border:1px solid #fff;border-right-color:#9a9a9a;border-bottom-color:#9a9a9a"></div></div>
<div style="left:179px;top:285px"><svg width="17" height="16" viewBox="0 0 17 16" style="display:block"><path d="M2.4 7.4 L4.4 6.8 L9.4 8.6 L16.4 8.6 L16.2 11 L10.2 15.8 L2.9 13.6Z" fill="#cc211c" stroke="#861010" stroke-width=".7" stroke-linejoin="round"/><path d="M2.5 7.6 L4.6 8 L5 14 L3 13.4Z" fill="#8e1410"/><path d="M5.2 8.4 L9.6 10 L9.8 15.2 L5.4 13.8Z" fill="#e04a42"/><path d="M10 10.4 L16 8.9 L16 10.8 L10.2 15.2Z" fill="#ee5248"/><path d="M10.4 9.4 L12.4 9.3 L12.4 10.8 L10.4 11.2Z" fill="#fff"/><path d="M5.6 7.4 L7.8 6.4 L7.6 8.2Z" fill="#fff" opacity=".95"/><path d="M.5 8.4 C.2 4.6 2 1.4 5.6 .5 C7.6 0 9.4 0 10.6 .4 L11.4 -.5 L15.6 3 L13.8 9 L7 6.4 L9.2 5.2 C7.4 3.8 4.8 4.2 4 6.2 L3.6 7.9Z" fill="#3fba2e" stroke="#227a18" stroke-width=".7" stroke-linejoin="round"/><path d="M1.7 6 C2.2 3.4 4 1.9 6.4 1.5 C8 1.2 9.6 1.4 10.8 1.8 L13.8 3.6" fill="none" stroke="#a4ec8c" stroke-width="1" opacity=".9"/><path d="M9 5.4 L13 7.6 L14.2 4" fill="#2a9a1e" opacity=".55"/></svg></div>
<div class="sep" style="left:203px;top:283px;height:22px"></div>
<div class="t bl" style="left:311px;top:285.5px;height:16px;line-height:16px;font-size:12.6px">Stammdaten</div>
<div style="left:174px;top:308px;width:347px;height:270px;background:#fff;box-sizing:border-box;border:1px solid #767676;overflow:hidden">
<div style="left:0;top:0;width:327px;height:268px;overflow:hidden">
<div class="gh" style="left:0px;top:0px;width:10px;height:19px;line-height:18px;border-right:1px solid #000;border-bottom:1px solid #000;box-shadow:inset 0 -1px 0 #666;"><span style="padding:0 0 0 2px;display:block;overflow:hidden;white-space:nowrap;position:relative;top:1px"></span></div>
<div class="gh" style="left:11px;top:0px;width:144px;height:19px;line-height:18px;border-right:1px solid #000;border-bottom:1px solid #000;box-shadow:inset 0 -1px 0 #666;"><span style="padding:0 3px 0 2px;display:block;overflow:hidden;white-space:nowrap;position:relative;top:1px">TEXT</span></div>
<div class="gh" style="left:156px;top:0px;width:189px;height:19px;line-height:18px;border-right:1px solid #000;border-bottom:1px solid #000;box-shadow:inset 0 -1px 0 #666;"><span style="padding:0 3px 0 2px;display:block;overflow:hidden;white-space:nowrap;position:relative;top:1px">WERT</span></div>
<div style="left:0px;top:20px;width:9px;height:18px;background:#fff;border-right:2px solid #000;border-bottom:1px solid #000;"><svg width="8" height="12" style="position:absolute;left:3px;top:3px"><path d="M0 0 L6 5.5 L0 11Z" fill="#000"/></svg></div>
<div class="gc" style="left:11px;top:20px;width:144px;height:18px;line-height:18px;background:#fff;border-right:1px solid #c4c4c4;border-bottom:1px solid #c4c4c4;"><span style="padding:0 2px 0 2px;display:block;overflow:hidden;white-space:nowrap;position:relative;top:1px">Vertreter</span></div>
<div class="gc" style="left:156px;top:20px;width:189px;height:18px;line-height:18px;background:#fff;border-right:1px solid #c4c4c4;border-bottom:1px solid #c4c4c4;"><span style="padding:0 2px 0 2px;display:block;overflow:hidden;white-space:nowrap;position:relative;top:1px">2</span></div>
<div style="left:0px;top:39px;width:9px;height:18px;background:#fff;border-right:2px solid #000;border-bottom:1px solid #000;"></div>
<div class="gc" style="left:11px;top:39px;width:144px;height:18px;line-height:18px;background:#fff;border-right:1px solid #c4c4c4;border-bottom:1px solid #c4c4c4;"><span style="padding:0 2px 0 2px;display:block;overflow:hidden;white-space:nowrap;position:relative;top:1px">Rabattliste</span></div>
<div class="gc" style="left:156px;top:39px;width:189px;height:18px;line-height:18px;background:#fff;border-right:1px solid #c4c4c4;border-bottom:1px solid #c4c4c4;"><span style="padding:0 2px 0 2px;display:block;overflow:hidden;white-space:nowrap;position:relative;top:1px">53-Komm./Dienstl./Bildungseinr.</span></div>
<div style="left:0px;top:58px;width:9px;height:18px;background:#fff;border-right:2px solid #000;border-bottom:1px solid #000;"></div>
<div class="gc" style="left:11px;top:58px;width:144px;height:18px;line-height:18px;background:#fff;border-right:1px solid #c4c4c4;border-bottom:1px solid #c4c4c4;"><span style="padding:0 2px 0 2px;display:block;overflow:hidden;white-space:nowrap;position:relative;top:1px">Aufschlag Normteile</span></div>
<div class="gc" style="left:156px;top:58px;width:189px;height:18px;line-height:18px;background:#fff;border-right:1px solid #c4c4c4;border-bottom:1px solid #c4c4c4;"><span style="padding:0 2px 0 2px;display:block;overflow:hidden;white-space:nowrap;position:relative;top:1px">30,00</span></div>
<div style="left:0px;top:77px;width:9px;height:18px;background:#fff;border-right:2px solid #000;border-bottom:1px solid #000;"></div>
<div class="gc" style="left:11px;top:77px;width:144px;height:18px;line-height:18px;background:#fff;border-right:1px solid #c4c4c4;border-bottom:1px solid #c4c4c4;"><span style="padding:0 2px 0 2px;display:block;overflow:hidden;white-space:nowrap;position:relative;top:1px">Auftragssperre</span></div>
<div class="gc" style="left:156px;top:77px;width:189px;height:18px;line-height:18px;background:#fff;border-right:1px solid #c4c4c4;border-bottom:1px solid #c4c4c4;"><span style="padding:0 2px 0 2px;display:block;overflow:hidden;white-space:nowrap;position:relative;top:1px">Nein</span></div>
<div style="left:0px;top:96px;width:9px;height:18px;background:#fff;border-right:2px solid #000;border-bottom:1px solid #000;"></div>
<div class="gc" style="left:11px;top:96px;width:144px;height:18px;line-height:18px;background:#fff;border-right:1px solid #c4c4c4;border-bottom:1px solid #c4c4c4;"><span style="padding:0 2px 0 2px;display:block;overflow:hidden;white-space:nowrap;position:relative;top:1px">Liefersperre</span></div>
<div class="gc" style="left:156px;top:96px;width:189px;height:18px;line-height:18px;background:#fff;border-right:1px solid #c4c4c4;border-bottom:1px solid #c4c4c4;"><span style="padding:0 2px 0 2px;display:block;overflow:hidden;white-space:nowrap;position:relative;top:1px">Nein</span></div>
<div style="left:0px;top:115px;width:9px;height:18px;background:#fff;border-right:2px solid #000;border-bottom:1px solid #000;"></div>
<div class="gc" style="left:11px;top:115px;width:144px;height:18px;line-height:18px;background:#fff;border-right:1px solid #c4c4c4;border-bottom:1px solid #c4c4c4;"><span style="padding:0 2px 0 2px;display:block;overflow:hidden;white-space:nowrap;position:relative;top:1px">Bonusvereinbarung</span></div>
<div class="gc" style="left:156px;top:115px;width:189px;height:18px;line-height:18px;background:#fff;border-right:1px solid #c4c4c4;border-bottom:1px solid #c4c4c4;"><span style="padding:0 2px 0 2px;display:block;overflow:hidden;white-space:nowrap;position:relative;top:1px">Nein</span></div>
<div style="left:0px;top:134px;width:9px;height:18px;background:#fff;border-right:2px solid #000;border-bottom:1px solid #000;"></div>
<div class="gc" style="left:11px;top:134px;width:144px;height:18px;line-height:18px;background:#fff;border-right:1px solid #c4c4c4;border-bottom:1px solid #c4c4c4;"><span style="padding:0 2px 0 2px;display:block;overflow:hidden;white-space:nowrap;position:relative;top:1px">Branche</span></div>
<div class="gc" style="left:156px;top:134px;width:189px;height:18px;line-height:18px;background:#fff;border-right:1px solid #c4c4c4;border-bottom:1px solid #c4c4c4;"><span style="padding:0 2px 0 2px;display:block;overflow:hidden;white-space:nowrap;position:relative;top:1px">5-Komm./Dienstl./Bildungsträger</span></div>
<div style="left:0px;top:153px;width:9px;height:18px;background:#fff;border-right:2px solid #000;border-bottom:1px solid #000;"></div>
<div class="gc" style="left:11px;top:153px;width:144px;height:18px;line-height:18px;background:#fff;border-right:1px solid #c4c4c4;border-bottom:1px solid #c4c4c4;"><span style="padding:0 2px 0 2px;display:block;overflow:hidden;white-space:nowrap;position:relative;top:1px">Mitarbeiter</span></div>
<div class="gc" style="left:156px;top:153px;width:189px;height:18px;line-height:18px;background:#fff;border-right:1px solid #c4c4c4;border-bottom:1px solid #c4c4c4;"><span style="padding:0 2px 0 2px;display:block;overflow:hidden;white-space:nowrap;position:relative;top:1px">0-0</span></div>
<div style="left:0px;top:172px;width:9px;height:18px;background:#fff;border-right:2px solid #000;border-bottom:1px solid #000;"></div>
<div class="gc" style="left:11px;top:172px;width:144px;height:18px;line-height:18px;background:#fff;border-right:1px solid #c4c4c4;border-bottom:1px solid #c4c4c4;"><span style="padding:0 2px 0 2px;display:block;overflow:hidden;white-space:nowrap;position:relative;top:1px">Werkzeugkatalog</span></div>
<div class="gc" style="left:156px;top:172px;width:189px;height:18px;line-height:18px;background:#fff;border-right:1px solid #c4c4c4;border-bottom:1px solid #c4c4c4;"><span style="padding:0 2px 0 2px;display:block;overflow:hidden;white-space:nowrap;position:relative;top:1px">25.08.2021</span></div>
<div style="left:0px;top:191px;width:9px;height:18px;background:#fff;border-right:2px solid #000;border-bottom:1px solid #000;"></div>
<div class="gc" style="left:11px;top:191px;width:144px;height:18px;line-height:18px;background:#fff;border-right:1px solid #c4c4c4;border-bottom:1px solid #c4c4c4;"><span style="padding:0 2px 0 2px;display:block;overflow:hidden;white-space:nowrap;position:relative;top:1px">Verbindungstechnik</span></div>
<div class="gc" style="left:156px;top:191px;width:189px;height:18px;line-height:18px;background:#fff;border-right:1px solid #c4c4c4;border-bottom:1px solid #c4c4c4;"><span style="padding:0 2px 0 2px;display:block;overflow:hidden;white-space:nowrap;position:relative;top:1px">03.08.2021</span></div>
<div style="left:0px;top:210px;width:9px;height:18px;background:#fff;border-right:2px solid #000;border-bottom:1px solid #000;"></div>
<div class="gc" style="left:11px;top:210px;width:144px;height:18px;line-height:18px;background:#fff;border-right:1px solid #c4c4c4;border-bottom:1px solid #c4c4c4;"><span style="padding:0 2px 0 2px;display:block;overflow:hidden;white-space:nowrap;position:relative;top:1px">Arbeitsschutz</span></div>
<div class="gc" style="left:156px;top:210px;width:189px;height:18px;line-height:18px;background:#fff;border-right:1px solid #c4c4c4;border-bottom:1px solid #c4c4c4;"><span style="padding:0 2px 0 2px;display:block;overflow:hidden;white-space:nowrap;position:relative;top:1px">04.08.2021</span></div>
<div style="left:0px;top:229px;width:9px;height:18px;background:#fff;border-right:2px solid #000;border-bottom:1px solid #000;"></div>
<div class="gc" style="left:11px;top:229px;width:144px;height:18px;line-height:18px;background:#fff;border-right:1px solid #c4c4c4;border-bottom:1px solid #c4c4c4;"><span style="padding:0 2px 0 2px;display:block;overflow:hidden;white-space:nowrap;position:relative;top:1px">Betriebseinrichtung</span></div>
<div class="gc" style="left:156px;top:229px;width:189px;height:18px;line-height:18px;background:#fff;border-right:1px solid #c4c4c4;border-bottom:1px solid #c4c4c4;"><span style="padding:0 2px 0 2px;display:block;overflow:hidden;white-space:nowrap;position:relative;top:1px">12.08.2021</span></div>
</div>
</div>
<div style="left:504px;top:309px;width:16px;height:252px;background:#f0f0f0"><svg width="16" height="252" style="display:block"><path d="M4.6 10.4 L7.6 7.2 L10.6 10.4" fill="none" stroke="#5c5c5c" stroke-width="1.9"/><path d="M4.6 241.6 L7.6 244.8 L10.6 241.6" fill="none" stroke="#5c5c5c" stroke-width="1.9"/><rect x="0" y="17" width="16" height="113" fill="#cacaca"/></svg></div>
<div style="left:175px;top:561px;width:329px;height:16px;background:#f0f0f0"><svg width="329" height="16" style="display:block"><path d="M10.2 4.5 L7 7.5 L10.2 10.5" fill="none" stroke="#5c5c5c" stroke-width="1.9"/><path d="M318.8 4.5 L322 7.5 L318.8 10.5" fill="none" stroke="#5c5c5c" stroke-width="1.9"/><rect x="16" y="0" width="17" height="16" fill="#cacaca"/></svg></div>
<div style="left:504px;top:561px;width:16px;height:16px;background:#f0f0f0"></div>
<div style="left:173px;top:582px;width:348px;height:133px;box-sizing:border-box;border:1px solid #9a9a9a;border-right-color:#fff;border-bottom-color:#fff;background:#cfdcee;"><div style="left:0;top:0;right:0;bottom:0;box-sizing:border-box;border:1px solid #fff;border-right-color:#9a9a9a;border-bottom-color:#9a9a9a"></div></div>
<div style="left:175px;top:584px;width:344px;height:15px;background:#d0ddef"></div>
<div class="t bl" style="left:296px;top:584.0px;height:16px;line-height:16px;font-size:12.4px">Hinweistext (&lt;F4&gt;)</div>
<div style="left:175px;top:599px;width:327px;height:114px;box-sizing:border-box;border:1px solid #6e6e6e;background:#fff"></div>
<div style="left:502px;top:599px;width:17px;height:114px;background:#f0f0f0"><svg width="17" height="114" style="display:block"><path d="M5.1 10.4 L8.1 7.2 L11.1 10.4" fill="none" stroke="#c4c4c4" stroke-width="1.9"/><path d="M5.1 103.6 L8.1 106.8 L11.1 103.6" fill="none" stroke="#c4c4c4" stroke-width="1.9"/></svg></div>
<div class="t" style="left:180px;top:600.5px;height:16px;line-height:16px;font-size:12.5px">Stammdaten geä. st3 18.07.2011</div>
<div class="t" style="left:180px;top:615.5px;height:16px;line-height:16px;font-size:12.5px">Heiko -22</div>
<div class="t" style="left:180px;top:630.5px;height:16px;line-height:16px;font-size:12.5px">Tom -30</div>
<div style="left:173px;top:719px;width:348px;height:311px;box-sizing:border-box;border:1px solid #9a9a9a;border-right-color:#fff;border-bottom-color:#fff;background:#cfdcee;"><div style="left:0;top:0;right:0;bottom:0;box-sizing:border-box;border:1px solid #fff;border-right-color:#9a9a9a;border-bottom-color:#9a9a9a"></div></div>
<div style="left:175px;top:721px;width:344px;height:27px;box-sizing:border-box;border:1px solid #9a9a9a;border-right-color:#fff;border-bottom-color:#fff;background:#d0ddef;"><div style="left:0;top:0;right:0;bottom:0;box-sizing:border-box;border:1px solid #fff;border-right-color:#9a9a9a;border-bottom-color:#9a9a9a"></div></div>
<div style="left:181px;top:726px"><svg width="17" height="16" viewBox="0 0 17 16" style="display:block"><path d="M2.4 7.4 L4.4 6.8 L9.4 8.6 L16.4 8.6 L16.2 11 L10.2 15.8 L2.9 13.6Z" fill="#cc211c" stroke="#861010" stroke-width=".7" stroke-linejoin="round"/><path d="M2.5 7.6 L4.6 8 L5 14 L3 13.4Z" fill="#8e1410"/><path d="M5.2 8.4 L9.6 10 L9.8 15.2 L5.4 13.8Z" fill="#e04a42"/><path d="M10 10.4 L16 8.9 L16 10.8 L10.2 15.2Z" fill="#ee5248"/><path d="M10.4 9.4 L12.4 9.3 L12.4 10.8 L10.4 11.2Z" fill="#fff"/><path d="M5.6 7.4 L7.8 6.4 L7.6 8.2Z" fill="#fff" opacity=".95"/><path d="M.5 8.4 C.2 4.6 2 1.4 5.6 .5 C7.6 0 9.4 0 10.6 .4 L11.4 -.5 L15.6 3 L13.8 9 L7 6.4 L9.2 5.2 C7.4 3.8 4.8 4.2 4 6.2 L3.6 7.9Z" fill="#3fba2e" stroke="#227a18" stroke-width=".7" stroke-linejoin="round"/><path d="M1.7 6 C2.2 3.4 4 1.9 6.4 1.5 C8 1.2 9.6 1.4 10.8 1.8 L13.8 3.6" fill="none" stroke="#a4ec8c" stroke-width="1" opacity=".9"/><path d="M9 5.4 L13 7.6 L14.2 4" fill="#2a9a1e" opacity=".55"/></svg></div>
<div class="sep" style="left:205px;top:724px;height:21px"></div>
<div class="t bl" style="left:295px;top:727.0px;height:16px;line-height:16px;font-size:12.4px">Sortiment gekaufte</div>
<div style="left:175px;top:748px;width:345px;height:1px;background:#767676"></div>
<div style="left:175px;top:749px;width:345px;height:278px;background:#fff;box-sizing:border-box;border:1px solid #767676;overflow:hidden">
<div style="left:0;top:0;width:327px;height:276px;overflow:hidden">
<div class="gh" style="left:0px;top:0px;width:11px;height:19px;line-height:18px;border-right:1px solid #000;border-bottom:1px solid #000;box-shadow:inset 0 -1px 0 #666;"><span style="padding:0 0 0 2px;display:block;overflow:hidden;white-space:nowrap;position:relative;top:1px"></span></div>
<div class="gh" style="left:12px;top:0px;width:39px;height:19px;line-height:18px;border-right:1px solid #000;border-bottom:1px solid #000;box-shadow:inset 0 -1px 0 #666;"><span style="padding:0 3px 0 2px;display:block;overflow:hidden;white-space:nowrap;position:relative;top:1px">SO</span></div>
<div class="gh" style="left:52px;top:0px;width:130px;height:19px;line-height:18px;border-right:1px solid #000;border-bottom:1px solid #000;box-shadow:inset 0 -1px 0 #666;"><span style="padding:0 3px 0 2px;display:block;overflow:hidden;white-space:nowrap;position:relative;top:1px">SORTIMENT</span></div>
<div class="gh" style="left:183px;top:0px;width:60px;height:19px;line-height:18px;border-right:1px solid #000;border-bottom:1px solid #000;box-shadow:inset 0 -1px 0 #666;"><span style="padding:0 3px 0 2px;display:block;overflow:hidden;white-space:nowrap;position:relative;top:1px">DATUM</span></div>
<div style="left:0px;top:20px;width:10px;height:18px;background:#fff;border-right:2px solid #000;border-bottom:1px solid #000;"><svg width="8" height="12" style="position:absolute;left:3px;top:3px"><path d="M0 0 L6 5.5 L0 11Z" fill="#000"/></svg></div>
<div class="gc" style="left:12px;top:20px;width:39px;height:18px;line-height:18px;background:#fff;border-right:1px solid #c4c4c4;border-bottom:1px solid #c4c4c4;"><span style="padding:0 2px 0 2px;display:block;overflow:hidden;white-space:nowrap;position:relative;top:1px">01</span></div>
<div class="gc" style="left:52px;top:20px;width:130px;height:18px;line-height:18px;background:#fff;border-right:1px solid #c4c4c4;border-bottom:1px solid #c4c4c4;"><span style="padding:0 2px 0 2px;display:block;overflow:hidden;white-space:nowrap;position:relative;top:1px">Normteile</span></div>
<div class="gc" style="left:183px;top:20px;width:60px;height:18px;line-height:18px;background:#fff;border-right:1px solid #c4c4c4;border-bottom:1px solid #c4c4c4;"><span style="padding:0 2px 0 2px;display:block;overflow:hidden;white-space:nowrap;position:relative;top:1px">01.09.21</span></div>
<div style="left:0px;top:39px;width:10px;height:18px;background:#fff;border-right:2px solid #000;border-bottom:1px solid #000;"></div>
<div class="gc" style="left:12px;top:39px;width:39px;height:18px;line-height:18px;background:#fff;border-right:1px solid #c4c4c4;border-bottom:1px solid #c4c4c4;"><span style="padding:0 2px 0 2px;display:block;overflow:hidden;white-space:nowrap;position:relative;top:1px">6</span></div>
<div class="gc" style="left:52px;top:39px;width:130px;height:18px;line-height:18px;background:#fff;border-right:1px solid #c4c4c4;border-bottom:1px solid #c4c4c4;"><span style="padding:0 2px 0 2px;display:block;overflow:hidden;white-space:nowrap;position:relative;top:1px">Elektrowerkzeuge</span></div>
<div class="gc" style="left:183px;top:39px;width:60px;height:18px;line-height:18px;background:#fff;border-right:1px solid #c4c4c4;border-bottom:1px solid #c4c4c4;"><span style="padding:0 2px 0 2px;display:block;overflow:hidden;white-space:nowrap;position:relative;top:1px">24.07.08</span></div>
<div style="left:0px;top:58px;width:10px;height:18px;background:#fff;border-right:2px solid #000;border-bottom:1px solid #000;"></div>
<div class="gc" style="left:12px;top:58px;width:39px;height:18px;line-height:18px;background:#fff;border-right:1px solid #c4c4c4;border-bottom:1px solid #c4c4c4;"><span style="padding:0 2px 0 2px;display:block;overflow:hidden;white-space:nowrap;position:relative;top:1px">7</span></div>
<div class="gc" style="left:52px;top:58px;width:130px;height:18px;line-height:18px;background:#fff;border-right:1px solid #c4c4c4;border-bottom:1px solid #c4c4c4;"><span style="padding:0 2px 0 2px;display:block;overflow:hidden;white-space:nowrap;position:relative;top:1px">Arbeitsschutz</span></div>
<div class="gc" style="left:183px;top:58px;width:60px;height:18px;line-height:18px;background:#fff;border-right:1px solid #c4c4c4;border-bottom:1px solid #c4c4c4;"><span style="padding:0 2px 0 2px;display:block;overflow:hidden;white-space:nowrap;position:relative;top:1px">18.03.10</span></div>
<div style="left:0px;top:77px;width:10px;height:18px;background:#fff;border-right:2px solid #000;border-bottom:1px solid #000;"></div>
<div class="gc" style="left:12px;top:77px;width:39px;height:18px;line-height:18px;background:#fff;border-right:1px solid #c4c4c4;border-bottom:1px solid #c4c4c4;"><span style="padding:0 2px 0 2px;display:block;overflow:hidden;white-space:nowrap;position:relative;top:1px">72</span></div>
<div class="gc" style="left:52px;top:77px;width:130px;height:18px;line-height:18px;background:#fff;border-right:1px solid #c4c4c4;border-bottom:1px solid #c4c4c4;"><span style="padding:0 2px 0 2px;display:block;overflow:hidden;white-space:nowrap;position:relative;top:1px">Allgemeine Berufsbekleidung</span></div>
<div class="gc" style="left:183px;top:77px;width:60px;height:18px;line-height:18px;background:#fff;border-right:1px solid #c4c4c4;border-bottom:1px solid #c4c4c4;"><span style="padding:0 2px 0 2px;display:block;overflow:hidden;white-space:nowrap;position:relative;top:1px">23.06.16</span></div>
<div style="left:0px;top:96px;width:10px;height:18px;background:#fff;border-right:2px solid #000;border-bottom:1px solid #000;"></div>
<div class="gc" style="left:12px;top:96px;width:39px;height:18px;line-height:18px;background:#fff;border-right:1px solid #c4c4c4;border-bottom:1px solid #c4c4c4;"><span style="padding:0 2px 0 2px;display:block;overflow:hidden;white-space:nowrap;position:relative;top:1px">73</span></div>
<div class="gc" style="left:52px;top:96px;width:130px;height:18px;line-height:18px;background:#fff;border-right:1px solid #c4c4c4;border-bottom:1px solid #c4c4c4;"><span style="padding:0 2px 0 2px;display:block;overflow:hidden;white-space:nowrap;position:relative;top:1px">Individuelle Berufstypische</span></div>
<div class="gc" style="left:183px;top:96px;width:60px;height:18px;line-height:18px;background:#fff;border-right:1px solid #c4c4c4;border-bottom:1px solid #c4c4c4;"><span style="padding:0 2px 0 2px;display:block;overflow:hidden;white-space:nowrap;position:relative;top:1px">26.02.20</span></div>
<div style="left:0px;top:115px;width:10px;height:18px;background:#fff;border-right:2px solid #000;border-bottom:1px solid #000;"></div>
<div class="gc" style="left:12px;top:115px;width:39px;height:18px;line-height:18px;background:#fff;border-right:1px solid #c4c4c4;border-bottom:1px solid #c4c4c4;"><span style="padding:0 2px 0 2px;display:block;overflow:hidden;white-space:nowrap;position:relative;top:1px">74</span></div>
<div class="gc" style="left:52px;top:115px;width:130px;height:18px;line-height:18px;background:#fff;border-right:1px solid #c4c4c4;border-bottom:1px solid #c4c4c4;"><span style="padding:0 2px 0 2px;display:block;overflow:hidden;white-space:nowrap;position:relative;top:1px">Schuhe</span></div>
<div class="gc" style="left:183px;top:115px;width:60px;height:18px;line-height:18px;background:#fff;border-right:1px solid #c4c4c4;border-bottom:1px solid #c4c4c4;"><span style="padding:0 2px 0 2px;display:block;overflow:hidden;white-space:nowrap;position:relative;top:1px">26.02.20</span></div>
</div>
</div>
<div style="left:503px;top:750px;width:16px;height:276px;background:#f0f0f0"><svg width="16" height="276" style="display:block"><path d="M4.6 10.4 L7.6 7.2 L10.6 10.4" fill="none" stroke="#5c5c5c" stroke-width="1.9"/><path d="M4.6 265.6 L7.6 268.8 L10.6 265.6" fill="none" stroke="#5c5c5c" stroke-width="1.9"/><rect x="0" y="15" width="16" height="133" fill="#cacaca"/></svg></div>
<div style="left:525px;top:278px;width:409px;height:752px;box-sizing:border-box;border:1px solid #9a9a9a;border-right-color:#fff;border-bottom-color:#fff;background:#cfdcee;"><div style="left:0;top:0;right:0;bottom:0;box-sizing:border-box;border:1px solid #fff;border-right-color:#9a9a9a;border-bottom-color:#9a9a9a"></div></div>
<div style="left:527px;top:280px;width:406px;height:29px;box-sizing:border-box;border:1px solid #9a9a9a;border-right-color:#fff;border-bottom-color:#fff;background:#d0ddef;"><div style="left:0;top:0;right:0;bottom:0;box-sizing:border-box;border:1px solid #fff;border-right-color:#9a9a9a;border-bottom-color:#9a9a9a"></div></div>
<div style="left:533px;top:286px"><svg width="17" height="16" viewBox="0 0 17 16" style="display:block"><path d="M2.4 7.4 L4.4 6.8 L9.4 8.6 L16.4 8.6 L16.2 11 L10.2 15.8 L2.9 13.6Z" fill="#cc211c" stroke="#861010" stroke-width=".7" stroke-linejoin="round"/><path d="M2.5 7.6 L4.6 8 L5 14 L3 13.4Z" fill="#8e1410"/><path d="M5.2 8.4 L9.6 10 L9.8 15.2 L5.4 13.8Z" fill="#e04a42"/><path d="M10 10.4 L16 8.9 L16 10.8 L10.2 15.2Z" fill="#ee5248"/><path d="M10.4 9.4 L12.4 9.3 L12.4 10.8 L10.4 11.2Z" fill="#fff"/><path d="M5.6 7.4 L7.8 6.4 L7.6 8.2Z" fill="#fff" opacity=".95"/><path d="M.5 8.4 C.2 4.6 2 1.4 5.6 .5 C7.6 0 9.4 0 10.6 .4 L11.4 -.5 L15.6 3 L13.8 9 L7 6.4 L9.2 5.2 C7.4 3.8 4.8 4.2 4 6.2 L3.6 7.9Z" fill="#3fba2e" stroke="#227a18" stroke-width=".7" stroke-linejoin="round"/><path d="M1.7 6 C2.2 3.4 4 1.9 6.4 1.5 C8 1.2 9.6 1.4 10.8 1.8 L13.8 3.6" fill="none" stroke="#a4ec8c" stroke-width="1" opacity=".9"/><path d="M9 5.4 L13 7.6 L14.2 4" fill="#2a9a1e" opacity=".55"/></svg></div>
<div class="sep" style="left:557px;top:284px;height:22px"></div>
<div class="btn" style="left:562px;top:282px;width:30px;height:25px"></div>
<div style="left:569px;top:287px"><svg width="17" height="16" viewBox="0 0 17 16" style="display:block"><rect x=".5" y=".5" width="15" height="13.4" fill="#c2ceda" stroke="#68747f" stroke-width="1"/><rect x="1" y="1" width="14" height="1.5" fill="#7e8a96"/><rect x="1.7" y="3.1" width="2.3" height="1.8" fill="#fff"/><rect x="5.05" y="3.1" width="2.3" height="1.8" fill="#fff"/><rect x="8.4" y="3.1" width="2.3" height="1.8" fill="#fff"/><rect x="11.75" y="3.1" width="2.3" height="1.8" fill="#fff"/><rect x="1.7" y="5.800000000000001" width="2.3" height="1.8" fill="#fff"/><rect x="5.05" y="5.800000000000001" width="2.3" height="1.8" fill="#fff"/><rect x="8.4" y="5.800000000000001" width="2.3" height="1.8" fill="#fff"/><rect x="11.75" y="5.800000000000001" width="2.3" height="1.8" fill="#fff"/><rect x="1.7" y="8.5" width="2.3" height="1.8" fill="#fff"/><rect x="5.05" y="8.5" width="2.3" height="1.8" fill="#fff"/><rect x="8.4" y="8.5" width="2.3" height="1.8" fill="#fff"/><rect x="11.75" y="8.5" width="2.3" height="1.8" fill="#fff"/><rect x="1.7" y="11.200000000000001" width="2.3" height="1.8" fill="#fff"/><rect x="5.05" y="11.200000000000001" width="2.3" height="1.8" fill="#fff"/><rect x="8.4" y="11.200000000000001" width="2.3" height="1.8" fill="#fff"/><rect x="11.75" y="11.200000000000001" width="2.3" height="1.8" fill="#fff"/><circle cx="9.6" cy="8.8" r="3.3" fill="#e8f0fa" stroke="#1a1a1a" stroke-width="1.2"/><path d="M12 11.2 L15.4 14.6" stroke="#7a4c12" stroke-width="2.1" stroke-linecap="round"/><path d="M12.3 11.5 L15.1 14.3" stroke="#dc9c3c" stroke-width=".8" stroke-linecap="round"/></svg></div>
<div class="t bl" style="left:704px;top:286.5px;height:16px;line-height:16px;font-size:12.5px">Angebote</div>
<div style="left:527px;top:309px;width:406px;height:140px;background:#fff;box-sizing:border-box;border:1px solid #767676;overflow:hidden">
<div style="left:0;top:0;width:387px;height:138px;overflow:hidden">
<div class="gh" style="left:0px;top:0px;width:11px;height:19px;line-height:18px;border-right:1px solid #000;border-bottom:1px solid #000;box-shadow:inset 0 -1px 0 #666;"><span style="padding:0 0 0 2px;display:block;overflow:hidden;white-space:nowrap;position:relative;top:1px">d</span></div>
<div class="gh" style="left:12px;top:0px;width:65px;height:19px;line-height:18px;border-right:1px solid #000;border-bottom:1px solid #000;box-shadow:inset 0 -1px 0 #666;"><span style="padding:0 3px 0 2px;display:block;overflow:hidden;white-space:nowrap;position:relative;top:1px">Belegnr</span></div>
<div class="gh" style="left:78px;top:0px;width:54px;height:19px;line-height:18px;border-right:1px solid #000;border-bottom:1px solid #000;box-shadow:inset 0 -1px 0 #666;"><span style="padding:0 3px 0 2px;display:block;overflow:hidden;white-space:nowrap;position:relative;top:1px">Belegdat</span></div>
<div class="gh" style="left:133px;top:0px;width:50px;height:19px;line-height:18px;border-right:1px solid #000;border-bottom:1px solid #000;box-shadow:inset 0 -1px 0 #666;"><span style="padding:0 3px 0 2px;display:block;overflow:hidden;white-space:nowrap;position:relative;top:1px">Info</span></div>
<div class="gh" style="left:184px;top:0px;width:59px;height:19px;line-height:18px;border-right:1px solid #000;border-bottom:1px solid #000;box-shadow:inset 0 -1px 0 #666;"><span style="padding:0 3px 0 2px;display:block;overflow:hidden;white-space:nowrap;position:relative;top:1px">Komm.</span></div>
<div class="gh" style="left:244px;top:0px;width:61px;height:19px;line-height:18px;border-right:1px solid #000;border-bottom:1px solid #000;box-shadow:inset 0 -1px 0 #666;text-align:right;"><span style="padding:0 3px 0 2px;display:block;overflow:hidden;white-space:nowrap;position:relative;top:1px">Netto</span></div>
<div class="gh" style="left:306px;top:0px;width:19px;height:19px;line-height:18px;border-right:1px solid #000;border-bottom:1px solid #000;box-shadow:inset 0 -1px 0 #666;"><span style="padding:0 3px 0 2px;display:block;overflow:hidden;white-space:nowrap;position:relative;top:1px">ST</span></div>
<div class="gh" style="left:326px;top:0px;width:71px;height:19px;line-height:18px;border-right:1px solid #000;border-bottom:1px solid #000;box-shadow:inset 0 -1px 0 #666;"><span style="padding:0 3px 0 2px;display:block;overflow:hidden;white-space:nowrap;position:relative;top:1px">Bemerkung</span></div>
<div style="left:0px;top:20px;width:10px;height:18px;background:#fff;border-right:2px solid #000;border-bottom:1px solid #000;"><svg width="8" height="12" style="position:absolute;left:3px;top:3px"><path d="M0 0 L6 5.5 L0 11Z" fill="#000"/></svg></div>
<div class="gc" style="left:12px;top:20px;width:65px;height:18px;line-height:18px;background:#fff;border-right:1px solid #c4c4c4;border-bottom:1px solid #c4c4c4;text-align:right;"><span style="padding:0 2px 0 2px;display:block;overflow:hidden;white-space:nowrap;position:relative;top:1px">211103070</span></div>
<div class="gc" style="left:78px;top:20px;width:54px;height:18px;line-height:18px;background:#fff;border-right:1px solid #c4c4c4;border-bottom:1px solid #c4c4c4;"><span style="padding:0 2px 0 2px;display:block;overflow:hidden;white-space:nowrap;position:relative;top:1px">25.08.21</span></div>
<div class="gc" style="left:133px;top:20px;width:50px;height:18px;line-height:18px;background:#fff;border-right:1px solid #c4c4c4;border-bottom:1px solid #c4c4c4;"><span style="padding:0 2px 0 2px;display:block;overflow:hidden;white-space:nowrap;position:relative;top:1px"></span></div>
<div class="gc" style="left:184px;top:20px;width:59px;height:18px;line-height:18px;background:#fff;border-right:1px solid #c4c4c4;border-bottom:1px solid #c4c4c4;"><span style="padding:0 2px 0 2px;display:block;overflow:hidden;white-space:nowrap;position:relative;top:1px"></span></div>
<div class="gc" style="left:244px;top:20px;width:61px;height:18px;line-height:18px;background:#fff;border-right:1px solid #c4c4c4;border-bottom:1px solid #c4c4c4;text-align:right;"><span style="padding:0 2px 0 2px;display:block;overflow:hidden;white-space:nowrap;position:relative;top:1px">0,00</span></div>
<div class="gc" style="left:306px;top:20px;width:19px;height:18px;line-height:18px;background:#fff;border-right:1px solid #c4c4c4;border-bottom:1px solid #c4c4c4;"><span style="padding:0 2px 0 2px;display:block;overflow:hidden;white-space:nowrap;position:relative;top:1px">00</span></div>
<div class="gc" style="left:326px;top:20px;width:71px;height:18px;line-height:18px;background:#fff;border-right:1px solid #c4c4c4;border-bottom:1px solid #c4c4c4;"><span style="padding:0 2px 0 2px;display:block;overflow:hidden;white-space:nowrap;position:relative;top:1px"></span></div>
<div style="left:0px;top:39px;width:10px;height:18px;background:#fff;border-right:2px solid #000;border-bottom:1px solid #000;"></div>
<div class="gc" style="left:12px;top:39px;width:65px;height:18px;line-height:18px;background:#fff;border-right:1px solid #c4c4c4;border-bottom:1px solid #c4c4c4;text-align:right;"><span style="padding:0 2px 0 2px;display:block;overflow:hidden;white-space:nowrap;position:relative;top:1px">211103069</span></div>
<div class="gc" style="left:78px;top:39px;width:54px;height:18px;line-height:18px;background:#fff;border-right:1px solid #c4c4c4;border-bottom:1px solid #c4c4c4;"><span style="padding:0 2px 0 2px;display:block;overflow:hidden;white-space:nowrap;position:relative;top:1px">25.08.21</span></div>
<div class="gc" style="left:133px;top:39px;width:50px;height:18px;line-height:18px;background:#fff;border-right:1px solid #c4c4c4;border-bottom:1px solid #c4c4c4;"><span style="padding:0 2px 0 2px;display:block;overflow:hidden;white-space:nowrap;position:relative;top:1px"></span></div>
<div class="gc" style="left:184px;top:39px;width:59px;height:18px;line-height:18px;background:#fff;border-right:1px solid #c4c4c4;border-bottom:1px solid #c4c4c4;"><span style="padding:0 2px 0 2px;display:block;overflow:hidden;white-space:nowrap;position:relative;top:1px"></span></div>
<div class="gc" style="left:244px;top:39px;width:61px;height:18px;line-height:18px;background:#fff;border-right:1px solid #c4c4c4;border-bottom:1px solid #c4c4c4;text-align:right;"><span style="padding:0 2px 0 2px;display:block;overflow:hidden;white-space:nowrap;position:relative;top:1px">0,00</span></div>
<div class="gc" style="left:306px;top:39px;width:19px;height:18px;line-height:18px;background:#fff;border-right:1px solid #c4c4c4;border-bottom:1px solid #c4c4c4;"><span style="padding:0 2px 0 2px;display:block;overflow:hidden;white-space:nowrap;position:relative;top:1px">00</span></div>
<div class="gc" style="left:326px;top:39px;width:71px;height:18px;line-height:18px;background:#fff;border-right:1px solid #c4c4c4;border-bottom:1px solid #c4c4c4;"><span style="padding:0 2px 0 2px;display:block;overflow:hidden;white-space:nowrap;position:relative;top:1px"></span></div>
<div style="left:0px;top:58px;width:10px;height:18px;background:#fff;border-right:2px solid #000;border-bottom:1px solid #000;"></div>
<div class="gc" style="left:12px;top:58px;width:65px;height:18px;line-height:18px;background:#fff;border-right:1px solid #c4c4c4;border-bottom:1px solid #c4c4c4;text-align:right;"><span style="padding:0 2px 0 2px;display:block;overflow:hidden;white-space:nowrap;position:relative;top:1px">211103064</span></div>
<div class="gc" style="left:78px;top:58px;width:54px;height:18px;line-height:18px;background:#fff;border-right:1px solid #c4c4c4;border-bottom:1px solid #c4c4c4;"><span style="padding:0 2px 0 2px;display:block;overflow:hidden;white-space:nowrap;position:relative;top:1px">20.05.21</span></div>
<div class="gc" style="left:133px;top:58px;width:50px;height:18px;line-height:18px;background:#fff;border-right:1px solid #c4c4c4;border-bottom:1px solid #c4c4c4;"><span style="padding:0 2px 0 2px;display:block;overflow:hidden;white-space:nowrap;position:relative;top:1px"></span></div>
<div class="gc" style="left:184px;top:58px;width:59px;height:18px;line-height:18px;background:#fff;border-right:1px solid #c4c4c4;border-bottom:1px solid #c4c4c4;"><span style="padding:0 2px 0 2px;display:block;overflow:hidden;white-space:nowrap;position:relative;top:1px"></span></div>
<div class="gc" style="left:244px;top:58px;width:61px;height:18px;line-height:18px;background:#fff;border-right:1px solid #c4c4c4;border-bottom:1px solid #c4c4c4;text-align:right;"><span style="padding:0 2px 0 2px;display:block;overflow:hidden;white-space:nowrap;position:relative;top:1px">38,63</span></div>
<div class="gc" style="left:306px;top:58px;width:19px;height:18px;line-height:18px;background:#fff;border-right:1px solid #c4c4c4;border-bottom:1px solid #c4c4c4;"><span style="padding:0 2px 0 2px;display:block;overflow:hidden;white-space:nowrap;position:relative;top:1px">00</span></div>
<div class="gc" style="left:326px;top:58px;width:71px;height:18px;line-height:18px;background:#fff;border-right:1px solid #c4c4c4;border-bottom:1px solid #c4c4c4;"><span style="padding:0 2px 0 2px;display:block;overflow:hidden;white-space:nowrap;position:relative;top:1px"></span></div>
<div style="left:0px;top:77px;width:10px;height:18px;background:#fff;border-right:2px solid #000;border-bottom:1px solid #000;"></div>
<div class="gc" style="left:12px;top:77px;width:65px;height:18px;line-height:18px;background:#fff;border-right:1px solid #c4c4c4;border-bottom:1px solid #c4c4c4;text-align:right;"><span style="padding:0 2px 0 2px;display:block;overflow:hidden;white-space:nowrap;position:relative;top:1px">211103062</span></div>
<div class="gc" style="left:78px;top:77px;width:54px;height:18px;line-height:18px;background:#fff;border-right:1px solid #c4c4c4;border-bottom:1px solid #c4c4c4;"><span style="padding:0 2px 0 2px;display:block;overflow:hidden;white-space:nowrap;position:relative;top:1px">19.05.21</span></div>
<div class="gc" style="left:133px;top:77px;width:50px;height:18px;line-height:18px;background:#fff;border-right:1px solid #c4c4c4;border-bottom:1px solid #c4c4c4;"><span style="padding:0 2px 0 2px;display:block;overflow:hidden;white-space:nowrap;position:relative;top:1px"></span></div>
<div class="gc" style="left:184px;top:77px;width:59px;height:18px;line-height:18px;background:#fff;border-right:1px solid #c4c4c4;border-bottom:1px solid #c4c4c4;"><span style="padding:0 2px 0 2px;display:block;overflow:hidden;white-space:nowrap;position:relative;top:1px"></span></div>
<div class="gc" style="left:244px;top:77px;width:61px;height:18px;line-height:18px;background:#fff;border-right:1px solid #c4c4c4;border-bottom:1px solid #c4c4c4;text-align:right;"><span style="padding:0 2px 0 2px;display:block;overflow:hidden;white-space:nowrap;position:relative;top:1px">13,00</span></div>
<div class="gc" style="left:306px;top:77px;width:19px;height:18px;line-height:18px;background:#fff;border-right:1px solid #c4c4c4;border-bottom:1px solid #c4c4c4;"><span style="padding:0 2px 0 2px;display:block;overflow:hidden;white-space:nowrap;position:relative;top:1px">00</span></div>
<div class="gc" style="left:326px;top:77px;width:71px;height:18px;line-height:18px;background:#fff;border-right:1px solid #c4c4c4;border-bottom:1px solid #c4c4c4;"><span style="padding:0 2px 0 2px;display:block;overflow:hidden;white-space:nowrap;position:relative;top:1px"></span></div>
<div style="left:0px;top:96px;width:10px;height:18px;background:#fff;border-right:2px solid #000;border-bottom:1px solid #000;"></div>
<div class="gc" style="left:12px;top:96px;width:65px;height:18px;line-height:18px;background:#fff;border-right:1px solid #c4c4c4;border-bottom:1px solid #c4c4c4;text-align:right;"><span style="padding:0 2px 0 2px;display:block;overflow:hidden;white-space:nowrap;position:relative;top:1px">211103058</span></div>
<div class="gc" style="left:78px;top:96px;width:54px;height:18px;line-height:18px;background:#fff;border-right:1px solid #c4c4c4;border-bottom:1px solid #c4c4c4;"><span style="padding:0 2px 0 2px;display:block;overflow:hidden;white-space:nowrap;position:relative;top:1px">12.05.21</span></div>
<div class="gc" style="left:133px;top:96px;width:50px;height:18px;line-height:18px;background:#fff;border-right:1px solid #c4c4c4;border-bottom:1px solid #c4c4c4;"><span style="padding:0 2px 0 2px;display:block;overflow:hidden;white-space:nowrap;position:relative;top:1px"></span></div>
<div class="gc" style="left:184px;top:96px;width:59px;height:18px;line-height:18px;background:#fff;border-right:1px solid #c4c4c4;border-bottom:1px solid #c4c4c4;"><span style="padding:0 2px 0 2px;display:block;overflow:hidden;white-space:nowrap;position:relative;top:1px"></span></div>
<div class="gc" style="left:244px;top:96px;width:61px;height:18px;line-height:18px;background:#fff;border-right:1px solid #c4c4c4;border-bottom:1px solid #c4c4c4;text-align:right;"><span style="padding:0 2px 0 2px;display:block;overflow:hidden;white-space:nowrap;position:relative;top:1px">0,00</span></div>
<div class="gc" style="left:306px;top:96px;width:19px;height:18px;line-height:18px;background:#fff;border-right:1px solid #c4c4c4;border-bottom:1px solid #c4c4c4;"><span style="padding:0 2px 0 2px;display:block;overflow:hidden;white-space:nowrap;position:relative;top:1px">01</span></div>
<div class="gc" style="left:326px;top:96px;width:71px;height:18px;line-height:18px;background:#fff;border-right:1px solid #c4c4c4;border-bottom:1px solid #c4c4c4;"><span style="padding:0 2px 0 2px;display:block;overflow:hidden;white-space:nowrap;position:relative;top:1px"></span></div>
</div>
</div>
<div style="left:916px;top:310px;width:16px;height:122px;background:#f0f0f0"><svg width="16" height="122" style="display:block"><path d="M4.6 10.4 L7.6 7.2 L10.6 10.4" fill="none" stroke="#5c5c5c" stroke-width="1.9"/><path d="M4.6 111.6 L7.6 114.8 L10.6 111.6" fill="none" stroke="#5c5c5c" stroke-width="1.9"/><rect x="0" y="17" width="16" height="17" fill="#cacaca"/></svg></div>
<div style="left:528px;top:432px;width:388px;height:16px;background:#f0f0f0"><svg width="388" height="16" style="display:block"><path d="M10.2 4.5 L7 7.5 L10.2 10.5" fill="none" stroke="#5c5c5c" stroke-width="1.9"/><path d="M377.8 4.5 L381 7.5 L377.8 10.5" fill="none" stroke="#5c5c5c" stroke-width="1.9"/><rect x="17" y="0" width="17" height="16" fill="#cacaca"/></svg></div>
<div style="left:916px;top:432px;width:16px;height:16px;background:#f0f0f0"></div>
<div style="left:527px;top:452px;width:406px;height:29px;box-sizing:border-box;border:1px solid #9a9a9a;border-right-color:#fff;border-bottom-color:#fff;background:#d0ddef;"><div style="left:0;top:0;right:0;bottom:0;box-sizing:border-box;border:1px solid #fff;border-right-color:#9a9a9a;border-bottom-color:#9a9a9a"></div></div>
<div style="left:533px;top:458px"><svg width="17" height="16" viewBox="0 0 17 16" style="display:block"><path d="M2.4 7.4 L4.4 6.8 L9.4 8.6 L16.4 8.6 L16.2 11 L10.2 15.8 L2.9 13.6Z" fill="#cc211c" stroke="#861010" stroke-width=".7" stroke-linejoin="round"/><path d="M2.5 7.6 L4.6 8 L5 14 L3 13.4Z" fill="#8e1410"/><path d="M5.2 8.4 L9.6 10 L9.8 15.2 L5.4 13.8Z" fill="#e04a42"/><path d="M10 10.4 L16 8.9 L16 10.8 L10.2 15.2Z" fill="#ee5248"/><path d="M10.4 9.4 L12.4 9.3 L12.4 10.8 L10.4 11.2Z" fill="#fff"/><path d="M5.6 7.4 L7.8 6.4 L7.6 8.2Z" fill="#fff" opacity=".95"/><path d="M.5 8.4 C.2 4.6 2 1.4 5.6 .5 C7.6 0 9.4 0 10.6 .4 L11.4 -.5 L15.6 3 L13.8 9 L7 6.4 L9.2 5.2 C7.4 3.8 4.8 4.2 4 6.2 L3.6 7.9Z" fill="#3fba2e" stroke="#227a18" stroke-width=".7" stroke-linejoin="round"/><path d="M1.7 6 C2.2 3.4 4 1.9 6.4 1.5 C8 1.2 9.6 1.4 10.8 1.8 L13.8 3.6" fill="none" stroke="#a4ec8c" stroke-width="1" opacity=".9"/><path d="M9 5.4 L13 7.6 L14.2 4" fill="#2a9a1e" opacity=".55"/></svg></div>
<div class="sep" style="left:557px;top:456px;height:22px"></div>
<div class="btn" style="left:562px;top:454px;width:30px;height:25px"></div>
<div style="left:569px;top:459px"><svg width="17" height="16" viewBox="0 0 17 16" style="display:block"><rect x=".5" y=".5" width="15" height="13.4" fill="#c2ceda" stroke="#68747f" stroke-width="1"/><rect x="1" y="1" width="14" height="1.5" fill="#7e8a96"/><rect x="1.7" y="3.1" width="2.3" height="1.8" fill="#fff"/><rect x="5.05" y="3.1" width="2.3" height="1.8" fill="#fff"/><rect x="8.4" y="3.1" width="2.3" height="1.8" fill="#fff"/><rect x="11.75" y="3.1" width="2.3" height="1.8" fill="#fff"/><rect x="1.7" y="5.800000000000001" width="2.3" height="1.8" fill="#fff"/><rect x="5.05" y="5.800000000000001" width="2.3" height="1.8" fill="#fff"/><rect x="8.4" y="5.800000000000001" width="2.3" height="1.8" fill="#fff"/><rect x="11.75" y="5.800000000000001" width="2.3" height="1.8" fill="#fff"/><rect x="1.7" y="8.5" width="2.3" height="1.8" fill="#fff"/><rect x="5.05" y="8.5" width="2.3" height="1.8" fill="#fff"/><rect x="8.4" y="8.5" width="2.3" height="1.8" fill="#fff"/><rect x="11.75" y="8.5" width="2.3" height="1.8" fill="#fff"/><rect x="1.7" y="11.200000000000001" width="2.3" height="1.8" fill="#fff"/><rect x="5.05" y="11.200000000000001" width="2.3" height="1.8" fill="#fff"/><rect x="8.4" y="11.200000000000001" width="2.3" height="1.8" fill="#fff"/><rect x="11.75" y="11.200000000000001" width="2.3" height="1.8" fill="#fff"/><circle cx="9.6" cy="8.8" r="3.3" fill="#e8f0fa" stroke="#1a1a1a" stroke-width="1.2"/><path d="M12 11.2 L15.4 14.6" stroke="#7a4c12" stroke-width="2.1" stroke-linecap="round"/><path d="M12.3 11.5 L15.1 14.3" stroke="#dc9c3c" stroke-width=".8" stroke-linecap="round"/></svg></div>
<div class="t bl" style="left:707px;top:458.5px;height:16px;line-height:16px;font-size:12.5px">Aufträge</div>
<div style="left:527px;top:481px;width:406px;height:140px;background:#fff;box-sizing:border-box;border:1px solid #767676;overflow:hidden">
<div style="left:0;top:0;width:387px;height:138px;overflow:hidden">
<div class="gh" style="left:0px;top:0px;width:11px;height:19px;line-height:18px;border-right:1px solid #000;border-bottom:1px solid #000;box-shadow:inset 0 -1px 0 #666;"><span style="padding:0 0 0 2px;display:block;overflow:hidden;white-space:nowrap;position:relative;top:1px">d</span></div>
<div class="gh" style="left:12px;top:0px;width:65px;height:19px;line-height:18px;border-right:1px solid #000;border-bottom:1px solid #000;box-shadow:inset 0 -1px 0 #666;"><span style="padding:0 3px 0 2px;display:block;overflow:hidden;white-space:nowrap;position:relative;top:1px">Belegnr</span></div>
<div class="gh" style="left:78px;top:0px;width:54px;height:19px;line-height:18px;border-right:1px solid #000;border-bottom:1px solid #000;box-shadow:inset 0 -1px 0 #666;"><span style="padding:0 3px 0 2px;display:block;overflow:hidden;white-space:nowrap;position:relative;top:1px">Belegdat</span></div>
<div class="gh" style="left:133px;top:0px;width:50px;height:19px;line-height:18px;border-right:1px solid #000;border-bottom:1px solid #000;box-shadow:inset 0 -1px 0 #666;"><span style="padding:0 3px 0 2px;display:block;overflow:hidden;white-space:nowrap;position:relative;top:1px">Info</span></div>
<div class="gh" style="left:184px;top:0px;width:59px;height:19px;line-height:18px;border-right:1px solid #000;border-bottom:1px solid #000;box-shadow:inset 0 -1px 0 #666;"><span style="padding:0 3px 0 2px;display:block;overflow:hidden;white-space:nowrap;position:relative;top:1px">Komm.</span></div>
<div class="gh" style="left:244px;top:0px;width:61px;height:19px;line-height:18px;border-right:1px solid #000;border-bottom:1px solid #000;box-shadow:inset 0 -1px 0 #666;text-align:right;"><span style="padding:0 3px 0 2px;display:block;overflow:hidden;white-space:nowrap;position:relative;top:1px">Netto</span></div>
<div class="gh" style="left:306px;top:0px;width:19px;height:19px;line-height:18px;border-right:1px solid #000;border-bottom:1px solid #000;box-shadow:inset 0 -1px 0 #666;"><span style="padding:0 3px 0 2px;display:block;overflow:hidden;white-space:nowrap;position:relative;top:1px">ST</span></div>
<div class="gh" style="left:326px;top:0px;width:71px;height:19px;line-height:18px;border-right:1px solid #000;border-bottom:1px solid #000;box-shadow:inset 0 -1px 0 #666;"><span style="padding:0 3px 0 2px;display:block;overflow:hidden;white-space:nowrap;position:relative;top:1px">Bemerkung</span></div>
<div style="left:0px;top:20px;width:10px;height:18px;background:#fff;border-right:2px solid #000;border-bottom:1px solid #000;"><svg width="8" height="12" style="position:absolute;left:3px;top:3px"><path d="M0 0 L6 5.5 L0 11Z" fill="#000"/></svg></div>
<div class="gc" style="left:12px;top:20px;width:65px;height:18px;line-height:18px;background:#fff;border-right:1px solid #c4c4c4;border-bottom:1px solid #c4c4c4;text-align:right;"><span style="padding:0 2px 0 2px;display:block;overflow:hidden;white-space:nowrap;position:relative;top:1px">211204588</span></div>
<div class="gc" style="left:78px;top:20px;width:54px;height:18px;line-height:18px;background:#fff;border-right:1px solid #c4c4c4;border-bottom:1px solid #c4c4c4;"><span style="padding:0 2px 0 2px;display:block;overflow:hidden;white-space:nowrap;position:relative;top:1px">15.11.21</span></div>
<div class="gc" style="left:133px;top:20px;width:50px;height:18px;line-height:18px;background:#fff;border-right:1px solid #c4c4c4;border-bottom:1px solid #c4c4c4;"><span style="padding:0 2px 0 2px;display:block;overflow:hidden;white-space:nowrap;position:relative;top:1px"></span></div>
<div class="gc" style="left:184px;top:20px;width:59px;height:18px;line-height:18px;background:#fff;border-right:1px solid #c4c4c4;border-bottom:1px solid #c4c4c4;"><span style="padding:0 2px 0 2px;display:block;overflow:hidden;white-space:nowrap;position:relative;top:1px"></span></div>
<div class="gc" style="left:244px;top:20px;width:61px;height:18px;line-height:18px;background:#fff;border-right:1px solid #c4c4c4;border-bottom:1px solid #c4c4c4;text-align:right;"><span style="padding:0 2px 0 2px;display:block;overflow:hidden;white-space:nowrap;position:relative;top:1px">27,93</span></div>
<div class="gc" style="left:306px;top:20px;width:19px;height:18px;line-height:18px;background:#fff;border-right:1px solid #c4c4c4;border-bottom:1px solid #c4c4c4;"><span style="padding:0 2px 0 2px;display:block;overflow:hidden;white-space:nowrap;position:relative;top:1px"></span></div>
<div class="gc" style="left:326px;top:20px;width:71px;height:18px;line-height:18px;background:#fff;border-right:1px solid #c4c4c4;border-bottom:1px solid #c4c4c4;"><span style="padding:0 2px 0 2px;display:block;overflow:hidden;white-space:nowrap;position:relative;top:1px"></span></div>
<div style="left:0px;top:39px;width:10px;height:18px;background:#fff;border-right:2px solid #000;border-bottom:1px solid #000;"></div>
<div class="gc" style="left:12px;top:39px;width:65px;height:18px;line-height:18px;background:#fff;border-right:1px solid #c4c4c4;border-bottom:1px solid #c4c4c4;text-align:right;"><span style="padding:0 2px 0 2px;display:block;overflow:hidden;white-space:nowrap;position:relative;top:1px">211204587</span></div>
<div class="gc" style="left:78px;top:39px;width:54px;height:18px;line-height:18px;background:#fff;border-right:1px solid #c4c4c4;border-bottom:1px solid #c4c4c4;"><span style="padding:0 2px 0 2px;display:block;overflow:hidden;white-space:nowrap;position:relative;top:1px">25.08.21</span></div>
<div class="gc" style="left:133px;top:39px;width:50px;height:18px;line-height:18px;background:#fff;border-right:1px solid #c4c4c4;border-bottom:1px solid #c4c4c4;"><span style="padding:0 2px 0 2px;display:block;overflow:hidden;white-space:nowrap;position:relative;top:1px"></span></div>
<div class="gc" style="left:184px;top:39px;width:59px;height:18px;line-height:18px;background:#fff;border-right:1px solid #c4c4c4;border-bottom:1px solid #c4c4c4;"><span style="padding:0 2px 0 2px;display:block;overflow:hidden;white-space:nowrap;position:relative;top:1px"></span></div>
<div class="gc" style="left:244px;top:39px;width:61px;height:18px;line-height:18px;background:#fff;border-right:1px solid #c4c4c4;border-bottom:1px solid #c4c4c4;text-align:right;"><span style="padding:0 2px 0 2px;display:block;overflow:hidden;white-space:nowrap;position:relative;top:1px">20,88</span></div>
<div class="gc" style="left:306px;top:39px;width:19px;height:18px;line-height:18px;background:#fff;border-right:1px solid #c4c4c4;border-bottom:1px solid #c4c4c4;"><span style="padding:0 2px 0 2px;display:block;overflow:hidden;white-space:nowrap;position:relative;top:1px"></span></div>
<div class="gc" style="left:326px;top:39px;width:71px;height:18px;line-height:18px;background:#fff;border-right:1px solid #c4c4c4;border-bottom:1px solid #c4c4c4;"><span style="padding:0 2px 0 2px;display:block;overflow:hidden;white-space:nowrap;position:relative;top:1px"></span></div>
</div>
</div>
<div style="left:916px;top:482px;width:16px;height:122px;background:#f0f0f0"><svg width="16" height="122" style="display:block"><path d="M4.6 10.4 L7.6 7.2 L10.6 10.4" fill="none" stroke="#5c5c5c" stroke-width="1.9"/><path d="M4.6 111.6 L7.6 114.8 L10.6 111.6" fill="none" stroke="#5c5c5c" stroke-width="1.9"/><rect x="0" y="16" width="16" height="59" fill="#cacaca"/></svg></div>
<div style="left:528px;top:604px;width:388px;height:16px;background:#f0f0f0"><svg width="388" height="16" style="display:block"><path d="M10.2 4.5 L7 7.5 L10.2 10.5" fill="none" stroke="#5c5c5c" stroke-width="1.9"/><path d="M377.8 4.5 L381 7.5 L377.8 10.5" fill="none" stroke="#5c5c5c" stroke-width="1.9"/><rect x="17" y="0" width="17" height="16" fill="#cacaca"/></svg></div>
<div style="left:916px;top:604px;width:16px;height:16px;background:#f0f0f0"></div>
<div style="left:527px;top:624px;width:406px;height:29px;box-sizing:border-box;border:1px solid #9a9a9a;border-right-color:#fff;border-bottom-color:#fff;background:#d0ddef;"><div style="left:0;top:0;right:0;bottom:0;box-sizing:border-box;border:1px solid #fff;border-right-color:#9a9a9a;border-bottom-color:#9a9a9a"></div></div>
<div style="left:533px;top:630px"><svg width="17" height="16" viewBox="0 0 17 16" style="display:block"><path d="M2.4 7.4 L4.4 6.8 L9.4 8.6 L16.4 8.6 L16.2 11 L10.2 15.8 L2.9 13.6Z" fill="#cc211c" stroke="#861010" stroke-width=".7" stroke-linejoin="round"/><path d="M2.5 7.6 L4.6 8 L5 14 L3 13.4Z" fill="#8e1410"/><path d="M5.2 8.4 L9.6 10 L9.8 15.2 L5.4 13.8Z" fill="#e04a42"/><path d="M10 10.4 L16 8.9 L16 10.8 L10.2 15.2Z" fill="#ee5248"/><path d="M10.4 9.4 L12.4 9.3 L12.4 10.8 L10.4 11.2Z" fill="#fff"/><path d="M5.6 7.4 L7.8 6.4 L7.6 8.2Z" fill="#fff" opacity=".95"/><path d="M.5 8.4 C.2 4.6 2 1.4 5.6 .5 C7.6 0 9.4 0 10.6 .4 L11.4 -.5 L15.6 3 L13.8 9 L7 6.4 L9.2 5.2 C7.4 3.8 4.8 4.2 4 6.2 L3.6 7.9Z" fill="#3fba2e" stroke="#227a18" stroke-width=".7" stroke-linejoin="round"/><path d="M1.7 6 C2.2 3.4 4 1.9 6.4 1.5 C8 1.2 9.6 1.4 10.8 1.8 L13.8 3.6" fill="none" stroke="#a4ec8c" stroke-width="1" opacity=".9"/><path d="M9 5.4 L13 7.6 L14.2 4" fill="#2a9a1e" opacity=".55"/></svg></div>
<div class="sep" style="left:557px;top:628px;height:22px"></div>
<div class="btn" style="left:562px;top:626px;width:30px;height:25px"></div>
<div style="left:569px;top:631px"><svg width="17" height="16" viewBox="0 0 17 16" style="display:block"><rect x=".5" y=".5" width="15" height="13.4" fill="#c2ceda" stroke="#68747f" stroke-width="1"/><rect x="1" y="1" width="14" height="1.5" fill="#7e8a96"/><rect x="1.7" y="3.1" width="2.3" height="1.8" fill="#fff"/><rect x="5.05" y="3.1" width="2.3" height="1.8" fill="#fff"/><rect x="8.4" y="3.1" width="2.3" height="1.8" fill="#fff"/><rect x="11.75" y="3.1" width="2.3" height="1.8" fill="#fff"/><rect x="1.7" y="5.800000000000001" width="2.3" height="1.8" fill="#fff"/><rect x="5.05" y="5.800000000000001" width="2.3" height="1.8" fill="#fff"/><rect x="8.4" y="5.800000000000001" width="2.3" height="1.8" fill="#fff"/><rect x="11.75" y="5.800000000000001" width="2.3" height="1.8" fill="#fff"/><rect x="1.7" y="8.5" width="2.3" height="1.8" fill="#fff"/><rect x="5.05" y="8.5" width="2.3" height="1.8" fill="#fff"/><rect x="8.4" y="8.5" width="2.3" height="1.8" fill="#fff"/><rect x="11.75" y="8.5" width="2.3" height="1.8" fill="#fff"/><rect x="1.7" y="11.200000000000001" width="2.3" height="1.8" fill="#fff"/><rect x="5.05" y="11.200000000000001" width="2.3" height="1.8" fill="#fff"/><rect x="8.4" y="11.200000000000001" width="2.3" height="1.8" fill="#fff"/><rect x="11.75" y="11.200000000000001" width="2.3" height="1.8" fill="#fff"/><circle cx="9.6" cy="8.8" r="3.3" fill="#e8f0fa" stroke="#1a1a1a" stroke-width="1.2"/><path d="M12 11.2 L15.4 14.6" stroke="#7a4c12" stroke-width="2.1" stroke-linecap="round"/><path d="M12.3 11.5 L15.1 14.3" stroke="#dc9c3c" stroke-width=".8" stroke-linecap="round"/></svg></div>
<div class="t bl" style="left:692px;top:630.5px;height:16px;line-height:16px;font-size:12.5px">Lieferscheine</div>
<div style="left:527px;top:653px;width:406px;height:140px;background:#fff;box-sizing:border-box;border:1px solid #767676;overflow:hidden">
<div style="left:0;top:0;width:404px;height:138px;overflow:hidden">
<div class="gh" style="left:0px;top:0px;width:11px;height:19px;line-height:18px;border-right:1px solid #000;border-bottom:1px solid #000;box-shadow:inset 0 -1px 0 #666;"><span style="padding:0 0 0 2px;display:block;overflow:hidden;white-space:nowrap;position:relative;top:1px">d</span></div>
<div class="gh" style="left:12px;top:0px;width:65px;height:19px;line-height:18px;border-right:1px solid #000;border-bottom:1px solid #000;box-shadow:inset 0 -1px 0 #666;"><span style="padding:0 3px 0 2px;display:block;overflow:hidden;white-space:nowrap;position:relative;top:1px">Belegnr</span></div>
<div class="gh" style="left:78px;top:0px;width:54px;height:19px;line-height:18px;border-right:1px solid #000;border-bottom:1px solid #000;box-shadow:inset 0 -1px 0 #666;"><span style="padding:0 3px 0 2px;display:block;overflow:hidden;white-space:nowrap;position:relative;top:1px">Belegdat</span></div>
<div class="gh" style="left:133px;top:0px;width:50px;height:19px;line-height:18px;border-right:1px solid #000;border-bottom:1px solid #000;box-shadow:inset 0 -1px 0 #666;"><span style="padding:0 3px 0 2px;display:block;overflow:hidden;white-space:nowrap;position:relative;top:1px">Info</span></div>
<div class="gh" style="left:184px;top:0px;width:59px;height:19px;line-height:18px;border-right:1px solid #000;border-bottom:1px solid #000;box-shadow:inset 0 -1px 0 #666;"><span style="padding:0 3px 0 2px;display:block;overflow:hidden;white-space:nowrap;position:relative;top:1px">Komm.</span></div>
<div class="gh" style="left:244px;top:0px;width:61px;height:19px;line-height:18px;border-right:1px solid #000;border-bottom:1px solid #000;box-shadow:inset 0 -1px 0 #666;text-align:right;"><span style="padding:0 3px 0 2px;display:block;overflow:hidden;white-space:nowrap;position:relative;top:1px">Netto</span></div>
<div class="gh" style="left:306px;top:0px;width:19px;height:19px;line-height:18px;border-right:1px solid #000;border-bottom:1px solid #000;box-shadow:inset 0 -1px 0 #666;"><span style="padding:0 3px 0 2px;display:block;overflow:hidden;white-space:nowrap;position:relative;top:1px">ST</span></div>
<div class="gh" style="left:326px;top:0px;width:73px;height:19px;line-height:18px;border-right:1px solid #000;border-bottom:1px solid #000;box-shadow:inset 0 -1px 0 #666;"><span style="padding:0 3px 0 2px;display:block;overflow:hidden;white-space:nowrap;position:relative;top:1px">Bemerkung</span></div>
<div style="left:0px;top:20px;width:10px;height:18px;background:#fff;border-right:2px solid #000;border-bottom:1px solid #000;"><svg width="8" height="12" style="position:absolute;left:3px;top:3px"><path d="M0 0 L6 5.5 L0 11Z" fill="#000"/></svg></div>
<div class="gc" style="left:12px;top:20px;width:65px;height:18px;line-height:18px;background:#fff;border-right:1px solid #c4c4c4;border-bottom:1px solid #c4c4c4;text-align:right;"><span style="padding:0 2px 0 2px;display:block;overflow:hidden;white-space:nowrap;position:relative;top:1px">211303536</span></div>
<div class="gc" style="left:78px;top:20px;width:54px;height:18px;line-height:18px;background:#fff;border-right:1px solid #c4c4c4;border-bottom:1px solid #c4c4c4;"><span style="padding:0 2px 0 2px;display:block;overflow:hidden;white-space:nowrap;position:relative;top:1px">29.01.21</span></div>
<div class="gc" style="left:133px;top:20px;width:50px;height:18px;line-height:18px;background:#fff;border-right:1px solid #c4c4c4;border-bottom:1px solid #c4c4c4;"><span style="padding:0 2px 0 2px;display:block;overflow:hidden;white-space:nowrap;position:relative;top:1px"></span></div>
<div class="gc" style="left:184px;top:20px;width:59px;height:18px;line-height:18px;background:#fff;border-right:1px solid #c4c4c4;border-bottom:1px solid #c4c4c4;"><span style="padding:0 2px 0 2px;display:block;overflow:hidden;white-space:nowrap;position:relative;top:1px"></span></div>
<div class="gc" style="left:244px;top:20px;width:61px;height:18px;line-height:18px;background:#fff;border-right:1px solid #c4c4c4;border-bottom:1px solid #c4c4c4;text-align:right;"><span style="padding:0 2px 0 2px;display:block;overflow:hidden;white-space:nowrap;position:relative;top:1px">43,35</span></div>
<div class="gc" style="left:306px;top:20px;width:19px;height:18px;line-height:18px;background:#fff;border-right:1px solid #c4c4c4;border-bottom:1px solid #c4c4c4;"><span style="padding:0 2px 0 2px;display:block;overflow:hidden;white-space:nowrap;position:relative;top:1px"></span></div>
<div class="gc" style="left:326px;top:20px;width:73px;height:18px;line-height:18px;background:#fff;border-right:1px solid #c4c4c4;border-bottom:1px solid #c4c4c4;"><span style="padding:0 2px 0 2px;display:block;overflow:hidden;white-space:nowrap;position:relative;top:1px"></span></div>
</div>
</div>
<div style="left:527px;top:796px;width:406px;height:29px;box-sizing:border-box;border:1px solid #9a9a9a;border-right-color:#fff;border-bottom-color:#fff;background:#d0ddef;"><div style="left:0;top:0;right:0;bottom:0;box-sizing:border-box;border:1px solid #fff;border-right-color:#9a9a9a;border-bottom-color:#9a9a9a"></div></div>
<div style="left:533px;top:802px"><svg width="17" height="16" viewBox="0 0 17 16" style="display:block"><path d="M2.4 7.4 L4.4 6.8 L9.4 8.6 L16.4 8.6 L16.2 11 L10.2 15.8 L2.9 13.6Z" fill="#cc211c" stroke="#861010" stroke-width=".7" stroke-linejoin="round"/><path d="M2.5 7.6 L4.6 8 L5 14 L3 13.4Z" fill="#8e1410"/><path d="M5.2 8.4 L9.6 10 L9.8 15.2 L5.4 13.8Z" fill="#e04a42"/><path d="M10 10.4 L16 8.9 L16 10.8 L10.2 15.2Z" fill="#ee5248"/><path d="M10.4 9.4 L12.4 9.3 L12.4 10.8 L10.4 11.2Z" fill="#fff"/><path d="M5.6 7.4 L7.8 6.4 L7.6 8.2Z" fill="#fff" opacity=".95"/><path d="M.5 8.4 C.2 4.6 2 1.4 5.6 .5 C7.6 0 9.4 0 10.6 .4 L11.4 -.5 L15.6 3 L13.8 9 L7 6.4 L9.2 5.2 C7.4 3.8 4.8 4.2 4 6.2 L3.6 7.9Z" fill="#3fba2e" stroke="#227a18" stroke-width=".7" stroke-linejoin="round"/><path d="M1.7 6 C2.2 3.4 4 1.9 6.4 1.5 C8 1.2 9.6 1.4 10.8 1.8 L13.8 3.6" fill="none" stroke="#a4ec8c" stroke-width="1" opacity=".9"/><path d="M9 5.4 L13 7.6 L14.2 4" fill="#2a9a1e" opacity=".55"/></svg></div>
<div class="sep" style="left:557px;top:800px;height:22px"></div>
<div class="btn" style="left:562px;top:798px;width:30px;height:25px"></div>
<div style="left:569px;top:803px"><svg width="17" height="16" viewBox="0 0 17 16" style="display:block"><rect x=".5" y=".5" width="15" height="13.4" fill="#c2ceda" stroke="#68747f" stroke-width="1"/><rect x="1" y="1" width="14" height="1.5" fill="#7e8a96"/><rect x="1.7" y="3.1" width="2.3" height="1.8" fill="#fff"/><rect x="5.05" y="3.1" width="2.3" height="1.8" fill="#fff"/><rect x="8.4" y="3.1" width="2.3" height="1.8" fill="#fff"/><rect x="11.75" y="3.1" width="2.3" height="1.8" fill="#fff"/><rect x="1.7" y="5.800000000000001" width="2.3" height="1.8" fill="#fff"/><rect x="5.05" y="5.800000000000001" width="2.3" height="1.8" fill="#fff"/><rect x="8.4" y="5.800000000000001" width="2.3" height="1.8" fill="#fff"/><rect x="11.75" y="5.800000000000001" width="2.3" height="1.8" fill="#fff"/><rect x="1.7" y="8.5" width="2.3" height="1.8" fill="#fff"/><rect x="5.05" y="8.5" width="2.3" height="1.8" fill="#fff"/><rect x="8.4" y="8.5" width="2.3" height="1.8" fill="#fff"/><rect x="11.75" y="8.5" width="2.3" height="1.8" fill="#fff"/><rect x="1.7" y="11.200000000000001" width="2.3" height="1.8" fill="#fff"/><rect x="5.05" y="11.200000000000001" width="2.3" height="1.8" fill="#fff"/><rect x="8.4" y="11.200000000000001" width="2.3" height="1.8" fill="#fff"/><rect x="11.75" y="11.200000000000001" width="2.3" height="1.8" fill="#fff"/><circle cx="9.6" cy="8.8" r="3.3" fill="#e8f0fa" stroke="#1a1a1a" stroke-width="1.2"/><path d="M12 11.2 L15.4 14.6" stroke="#7a4c12" stroke-width="2.1" stroke-linecap="round"/><path d="M12.3 11.5 L15.1 14.3" stroke="#dc9c3c" stroke-width=".8" stroke-linecap="round"/></svg></div>
<div class="t bl" style="left:694px;top:802.5px;height:16px;line-height:16px;font-size:12.5px">Rechnungen</div>
<div style="left:527px;top:825px;width:406px;height:203px;background:#fff;box-sizing:border-box;border:1px solid #767676;overflow:hidden">
<div style="left:0;top:0;width:387px;height:201px;overflow:hidden">
<div class="gh" style="left:0px;top:0px;width:11px;height:19px;line-height:18px;border-right:1px solid #000;border-bottom:1px solid #000;box-shadow:inset 0 -1px 0 #666;"><span style="padding:0 0 0 2px;display:block;overflow:hidden;white-space:nowrap;position:relative;top:1px">d</span></div>
<div class="gh" style="left:12px;top:0px;width:65px;height:19px;line-height:18px;border-right:1px solid #000;border-bottom:1px solid #000;box-shadow:inset 0 -1px 0 #666;"><span style="padding:0 3px 0 2px;display:block;overflow:hidden;white-space:nowrap;position:relative;top:1px">Belegnr</span></div>
<div class="gh" style="left:78px;top:0px;width:54px;height:19px;line-height:18px;border-right:1px solid #000;border-bottom:1px solid #000;box-shadow:inset 0 -1px 0 #666;"><span style="padding:0 3px 0 2px;display:block;overflow:hidden;white-space:nowrap;position:relative;top:1px">Belegdat</span></div>
<div class="gh" style="left:133px;top:0px;width:50px;height:19px;line-height:18px;border-right:1px solid #000;border-bottom:1px solid #000;box-shadow:inset 0 -1px 0 #666;"><span style="padding:0 3px 0 2px;display:block;overflow:hidden;white-space:nowrap;position:relative;top:1px">Info</span></div>
<div class="gh" style="left:184px;top:0px;width:59px;height:19px;line-height:18px;border-right:1px solid #000;border-bottom:1px solid #000;box-shadow:inset 0 -1px 0 #666;"><span style="padding:0 3px 0 2px;display:block;overflow:hidden;white-space:nowrap;position:relative;top:1px">Komm.</span></div>
<div class="gh" style="left:244px;top:0px;width:61px;height:19px;line-height:18px;border-right:1px solid #000;border-bottom:1px solid #000;box-shadow:inset 0 -1px 0 #666;text-align:right;"><span style="padding:0 3px 0 2px;display:block;overflow:hidden;white-space:nowrap;position:relative;top:1px">Netto</span></div>
<div class="gh" style="left:306px;top:0px;width:19px;height:19px;line-height:18px;border-right:1px solid #000;border-bottom:1px solid #000;box-shadow:inset 0 -1px 0 #666;"><span style="padding:0 3px 0 2px;display:block;overflow:hidden;white-space:nowrap;position:relative;top:1px">ST</span></div>
<div class="gh" style="left:326px;top:0px;width:71px;height:19px;line-height:18px;border-right:1px solid #000;border-bottom:1px solid #000;box-shadow:inset 0 -1px 0 #666;"><span style="padding:0 3px 0 2px;display:block;overflow:hidden;white-space:nowrap;position:relative;top:1px">Bemerkung</span></div>
<div style="left:0px;top:20px;width:10px;height:18px;background:#fff;border-right:2px solid #000;border-bottom:1px solid #000;"><svg width="8" height="12" style="position:absolute;left:3px;top:3px"><path d="M0 0 L6 5.5 L0 11Z" fill="#000"/></svg></div>
<div class="gc" style="left:12px;top:20px;width:65px;height:18px;line-height:18px;background:#fff;border-right:1px solid #c4c4c4;border-bottom:1px solid #c4c4c4;text-align:right;"><span style="padding:0 2px 0 2px;display:block;overflow:hidden;white-space:nowrap;position:relative;top:1px">211406422</span></div>
<div class="gc" style="left:78px;top:20px;width:54px;height:18px;line-height:18px;background:#fff;border-right:1px solid #c4c4c4;border-bottom:1px solid #c4c4c4;"><span style="padding:0 2px 0 2px;display:block;overflow:hidden;white-space:nowrap;position:relative;top:1px">01.09.21</span></div>
<div class="gc" style="left:133px;top:20px;width:50px;height:18px;line-height:18px;background:#fff;border-right:1px solid #c4c4c4;border-bottom:1px solid #c4c4c4;"><span style="padding:0 2px 0 2px;display:block;overflow:hidden;white-space:nowrap;position:relative;top:1px"></span></div>
<div class="gc" style="left:184px;top:20px;width:59px;height:18px;line-height:18px;background:#fff;border-right:1px solid #c4c4c4;border-bottom:1px solid #c4c4c4;"><span style="padding:0 2px 0 2px;display:block;overflow:hidden;white-space:nowrap;position:relative;top:1px"></span></div>
<div class="gc" style="left:244px;top:20px;width:61px;height:18px;line-height:18px;background:#fff;border-right:1px solid #c4c4c4;border-bottom:1px solid #c4c4c4;text-align:right;"><span style="padding:0 2px 0 2px;display:block;overflow:hidden;white-space:nowrap;position:relative;top:1px">0,84</span></div>
<div class="gc" style="left:306px;top:20px;width:19px;height:18px;line-height:18px;background:#fff;border-right:1px solid #c4c4c4;border-bottom:1px solid #c4c4c4;"><span style="padding:0 2px 0 2px;display:block;overflow:hidden;white-space:nowrap;position:relative;top:1px"></span></div>
<div class="gc" style="left:326px;top:20px;width:71px;height:18px;line-height:18px;background:#fff;border-right:1px solid #c4c4c4;border-bottom:1px solid #c4c4c4;"><span style="padding:0 2px 0 2px;display:block;overflow:hidden;white-space:nowrap;position:relative;top:1px"></span></div>
<div style="left:0px;top:39px;width:10px;height:18px;background:#fff;border-right:2px solid #000;border-bottom:1px solid #000;"></div>
<div class="gc" style="left:12px;top:39px;width:65px;height:18px;line-height:18px;background:#fff;border-right:1px solid #c4c4c4;border-bottom:1px solid #c4c4c4;text-align:right;"><span style="padding:0 2px 0 2px;display:block;overflow:hidden;white-space:nowrap;position:relative;top:1px">201404541</span></div>
<div class="gc" style="left:78px;top:39px;width:54px;height:18px;line-height:18px;background:#fff;border-right:1px solid #c4c4c4;border-bottom:1px solid #c4c4c4;"><span style="padding:0 2px 0 2px;display:block;overflow:hidden;white-space:nowrap;position:relative;top:1px">26.02.20</span></div>
<div class="gc" style="left:133px;top:39px;width:50px;height:18px;line-height:18px;background:#fff;border-right:1px solid #c4c4c4;border-bottom:1px solid #c4c4c4;"><span style="padding:0 2px 0 2px;display:block;overflow:hidden;white-space:nowrap;position:relative;top:1px"></span></div>
<div class="gc" style="left:184px;top:39px;width:59px;height:18px;line-height:18px;background:#fff;border-right:1px solid #c4c4c4;border-bottom:1px solid #c4c4c4;"><span style="padding:0 2px 0 2px;display:block;overflow:hidden;white-space:nowrap;position:relative;top:1px"></span></div>
<div class="gc" style="left:244px;top:39px;width:61px;height:18px;line-height:18px;background:#fff;border-right:1px solid #c4c4c4;border-bottom:1px solid #c4c4c4;text-align:right;"><span style="padding:0 2px 0 2px;display:block;overflow:hidden;white-space:nowrap;position:relative;top:1px">68,15</span></div>
<div class="gc" style="left:306px;top:39px;width:19px;height:18px;line-height:18px;background:#fff;border-right:1px solid #c4c4c4;border-bottom:1px solid #c4c4c4;"><span style="padding:0 2px 0 2px;display:block;overflow:hidden;white-space:nowrap;position:relative;top:1px"></span></div>
<div class="gc" style="left:326px;top:39px;width:71px;height:18px;line-height:18px;background:#fff;border-right:1px solid #c4c4c4;border-bottom:1px solid #c4c4c4;"><span style="padding:0 2px 0 2px;display:block;overflow:hidden;white-space:nowrap;position:relative;top:1px"></span></div>
<div style="left:0px;top:58px;width:10px;height:18px;background:#fff;border-right:2px solid #000;border-bottom:1px solid #000;"></div>
<div class="gc" style="left:12px;top:58px;width:65px;height:18px;line-height:18px;background:#fff;border-right:1px solid #c4c4c4;border-bottom:1px solid #c4c4c4;text-align:right;"><span style="padding:0 2px 0 2px;display:block;overflow:hidden;white-space:nowrap;position:relative;top:1px">161417920</span></div>
<div class="gc" style="left:78px;top:58px;width:54px;height:18px;line-height:18px;background:#fff;border-right:1px solid #c4c4c4;border-bottom:1px solid #c4c4c4;"><span style="padding:0 2px 0 2px;display:block;overflow:hidden;white-space:nowrap;position:relative;top:1px">23.06.16</span></div>
<div class="gc" style="left:133px;top:58px;width:50px;height:18px;line-height:18px;background:#fff;border-right:1px solid #c4c4c4;border-bottom:1px solid #c4c4c4;"><span style="padding:0 2px 0 2px;display:block;overflow:hidden;white-space:nowrap;position:relative;top:1px"></span></div>
<div class="gc" style="left:184px;top:58px;width:59px;height:18px;line-height:18px;background:#fff;border-right:1px solid #c4c4c4;border-bottom:1px solid #c4c4c4;"><span style="padding:0 2px 0 2px;display:block;overflow:hidden;white-space:nowrap;position:relative;top:1px"></span></div>
<div class="gc" style="left:244px;top:58px;width:61px;height:18px;line-height:18px;background:#fff;border-right:1px solid #c4c4c4;border-bottom:1px solid #c4c4c4;text-align:right;"><span style="padding:0 2px 0 2px;display:block;overflow:hidden;white-space:nowrap;position:relative;top:1px">39,56</span></div>
<div class="gc" style="left:306px;top:58px;width:19px;height:18px;line-height:18px;background:#fff;border-right:1px solid #c4c4c4;border-bottom:1px solid #c4c4c4;"><span style="padding:0 2px 0 2px;display:block;overflow:hidden;white-space:nowrap;position:relative;top:1px"></span></div>
<div class="gc" style="left:326px;top:58px;width:71px;height:18px;line-height:18px;background:#fff;border-right:1px solid #c4c4c4;border-bottom:1px solid #c4c4c4;"><span style="padding:0 2px 0 2px;display:block;overflow:hidden;white-space:nowrap;position:relative;top:1px"></span></div>
<div style="left:0px;top:77px;width:10px;height:18px;background:#fff;border-right:2px solid #000;border-bottom:1px solid #000;"></div>
<div class="gc" style="left:12px;top:77px;width:65px;height:18px;line-height:18px;background:#fff;border-right:1px solid #c4c4c4;border-bottom:1px solid #c4c4c4;text-align:right;"><span style="padding:0 2px 0 2px;display:block;overflow:hidden;white-space:nowrap;position:relative;top:1px">161417900</span></div>
<div class="gc" style="left:78px;top:77px;width:54px;height:18px;line-height:18px;background:#fff;border-right:1px solid #c4c4c4;border-bottom:1px solid #c4c4c4;"><span style="padding:0 2px 0 2px;display:block;overflow:hidden;white-space:nowrap;position:relative;top:1px">23.06.16</span></div>
<div class="gc" style="left:133px;top:77px;width:50px;height:18px;line-height:18px;background:#fff;border-right:1px solid #c4c4c4;border-bottom:1px solid #c4c4c4;"><span style="padding:0 2px 0 2px;display:block;overflow:hidden;white-space:nowrap;position:relative;top:1px"></span></div>
<div class="gc" style="left:184px;top:77px;width:59px;height:18px;line-height:18px;background:#fff;border-right:1px solid #c4c4c4;border-bottom:1px solid #c4c4c4;"><span style="padding:0 2px 0 2px;display:block;overflow:hidden;white-space:nowrap;position:relative;top:1px"></span></div>
<div class="gc" style="left:244px;top:77px;width:61px;height:18px;line-height:18px;background:#fff;border-right:1px solid #c4c4c4;border-bottom:1px solid #c4c4c4;text-align:right;"><span style="padding:0 2px 0 2px;display:block;overflow:hidden;white-space:nowrap;position:relative;top:1px">39,56</span></div>
<div class="gc" style="left:306px;top:77px;width:19px;height:18px;line-height:18px;background:#fff;border-right:1px solid #c4c4c4;border-bottom:1px solid #c4c4c4;"><span style="padding:0 2px 0 2px;display:block;overflow:hidden;white-space:nowrap;position:relative;top:1px"></span></div>
<div class="gc" style="left:326px;top:77px;width:71px;height:18px;line-height:18px;background:#fff;border-right:1px solid #c4c4c4;border-bottom:1px solid #c4c4c4;"><span style="padding:0 2px 0 2px;display:block;overflow:hidden;white-space:nowrap;position:relative;top:1px"></span></div>
<div style="left:0px;top:96px;width:10px;height:18px;background:#fff;border-right:2px solid #000;border-bottom:1px solid #000;"></div>
<div class="gc" style="left:12px;top:96px;width:65px;height:18px;line-height:18px;background:#fff;border-right:1px solid #c4c4c4;border-bottom:1px solid #c4c4c4;text-align:right;"><span style="padding:0 2px 0 2px;display:block;overflow:hidden;white-space:nowrap;position:relative;top:1px">101408922</span></div>
<div class="gc" style="left:78px;top:96px;width:54px;height:18px;line-height:18px;background:#fff;border-right:1px solid #c4c4c4;border-bottom:1px solid #c4c4c4;"><span style="padding:0 2px 0 2px;display:block;overflow:hidden;white-space:nowrap;position:relative;top:1px">06.05.10</span></div>
<div class="gc" style="left:133px;top:96px;width:50px;height:18px;line-height:18px;background:#fff;border-right:1px solid #c4c4c4;border-bottom:1px solid #c4c4c4;"><span style="padding:0 2px 0 2px;display:block;overflow:hidden;white-space:nowrap;position:relative;top:1px"></span></div>
<div class="gc" style="left:184px;top:96px;width:59px;height:18px;line-height:18px;background:#fff;border-right:1px solid #c4c4c4;border-bottom:1px solid #c4c4c4;"><span style="padding:0 2px 0 2px;display:block;overflow:hidden;white-space:nowrap;position:relative;top:1px"></span></div>
<div class="gc" style="left:244px;top:96px;width:61px;height:18px;line-height:18px;background:#fff;border-right:1px solid #c4c4c4;border-bottom:1px solid #c4c4c4;text-align:right;"><span style="padding:0 2px 0 2px;display:block;overflow:hidden;white-space:nowrap;position:relative;top:1px">148,90</span></div>
<div class="gc" style="left:306px;top:96px;width:19px;height:18px;line-height:18px;background:#fff;border-right:1px solid #c4c4c4;border-bottom:1px solid #c4c4c4;"><span style="padding:0 2px 0 2px;display:block;overflow:hidden;white-space:nowrap;position:relative;top:1px"></span></div>
<div class="gc" style="left:326px;top:96px;width:71px;height:18px;line-height:18px;background:#fff;border-right:1px solid #c4c4c4;border-bottom:1px solid #c4c4c4;"><span style="padding:0 2px 0 2px;display:block;overflow:hidden;white-space:nowrap;position:relative;top:1px"></span></div>
<div style="left:0px;top:115px;width:10px;height:18px;background:#fff;border-right:2px solid #000;border-bottom:1px solid #000;"></div>
<div class="gc" style="left:12px;top:115px;width:65px;height:18px;line-height:18px;background:#fff;border-right:1px solid #c4c4c4;border-bottom:1px solid #c4c4c4;text-align:right;"><span style="padding:0 2px 0 2px;display:block;overflow:hidden;white-space:nowrap;position:relative;top:1px">101405198</span></div>
<div class="gc" style="left:78px;top:115px;width:54px;height:18px;line-height:18px;background:#fff;border-right:1px solid #c4c4c4;border-bottom:1px solid #c4c4c4;"><span style="padding:0 2px 0 2px;display:block;overflow:hidden;white-space:nowrap;position:relative;top:1px">18.03.10</span></div>
<div class="gc" style="left:133px;top:115px;width:50px;height:18px;line-height:18px;background:#fff;border-right:1px solid #c4c4c4;border-bottom:1px solid #c4c4c4;"><span style="padding:0 2px 0 2px;display:block;overflow:hidden;white-space:nowrap;position:relative;top:1px"></span></div>
<div class="gc" style="left:184px;top:115px;width:59px;height:18px;line-height:18px;background:#fff;border-right:1px solid #c4c4c4;border-bottom:1px solid #c4c4c4;"><span style="padding:0 2px 0 2px;display:block;overflow:hidden;white-space:nowrap;position:relative;top:1px"></span></div>
<div class="gc" style="left:244px;top:115px;width:61px;height:18px;line-height:18px;background:#fff;border-right:1px solid #c4c4c4;border-bottom:1px solid #c4c4c4;text-align:right;"><span style="padding:0 2px 0 2px;display:block;overflow:hidden;white-space:nowrap;position:relative;top:1px">94,85</span></div>
<div class="gc" style="left:306px;top:115px;width:19px;height:18px;line-height:18px;background:#fff;border-right:1px solid #c4c4c4;border-bottom:1px solid #c4c4c4;"><span style="padding:0 2px 0 2px;display:block;overflow:hidden;white-space:nowrap;position:relative;top:1px"></span></div>
<div class="gc" style="left:326px;top:115px;width:71px;height:18px;line-height:18px;background:#fff;border-right:1px solid #c4c4c4;border-bottom:1px solid #c4c4c4;"><span style="padding:0 2px 0 2px;display:block;overflow:hidden;white-space:nowrap;position:relative;top:1px"></span></div>
<div style="left:0px;top:134px;width:10px;height:18px;background:#fff;border-right:2px solid #000;border-bottom:1px solid #000;"></div>
<div class="gc" style="left:12px;top:134px;width:65px;height:18px;line-height:18px;background:#fff;border-right:1px solid #c4c4c4;border-bottom:1px solid #c4c4c4;text-align:right;"><span style="padding:0 2px 0 2px;display:block;overflow:hidden;white-space:nowrap;position:relative;top:1px">91424174</span></div>
<div class="gc" style="left:78px;top:134px;width:54px;height:18px;line-height:18px;background:#fff;border-right:1px solid #c4c4c4;border-bottom:1px solid #c4c4c4;"><span style="padding:0 2px 0 2px;display:block;overflow:hidden;white-space:nowrap;position:relative;top:1px">11.11.09</span></div>
<div class="gc" style="left:133px;top:134px;width:50px;height:18px;line-height:18px;background:#fff;border-right:1px solid #c4c4c4;border-bottom:1px solid #c4c4c4;"><span style="padding:0 2px 0 2px;display:block;overflow:hidden;white-space:nowrap;position:relative;top:1px"></span></div>
<div class="gc" style="left:184px;top:134px;width:59px;height:18px;line-height:18px;background:#fff;border-right:1px solid #c4c4c4;border-bottom:1px solid #c4c4c4;"><span style="padding:0 2px 0 2px;display:block;overflow:hidden;white-space:nowrap;position:relative;top:1px"></span></div>
<div class="gc" style="left:244px;top:134px;width:61px;height:18px;line-height:18px;background:#fff;border-right:1px solid #c4c4c4;border-bottom:1px solid #c4c4c4;text-align:right;"><span style="padding:0 2px 0 2px;display:block;overflow:hidden;white-space:nowrap;position:relative;top:1px">72,51</span></div>
<div class="gc" style="left:306px;top:134px;width:19px;height:18px;line-height:18px;background:#fff;border-right:1px solid #c4c4c4;border-bottom:1px solid #c4c4c4;"><span style="padding:0 2px 0 2px;display:block;overflow:hidden;white-space:nowrap;position:relative;top:1px"></span></div>
<div class="gc" style="left:326px;top:134px;width:71px;height:18px;line-height:18px;background:#fff;border-right:1px solid #c4c4c4;border-bottom:1px solid #c4c4c4;"><span style="padding:0 2px 0 2px;display:block;overflow:hidden;white-space:nowrap;position:relative;top:1px"></span></div>
<div style="left:0px;top:153px;width:10px;height:18px;background:#fff;border-right:2px solid #000;border-bottom:1px solid #000;"></div>
<div class="gc" style="left:12px;top:153px;width:65px;height:18px;line-height:18px;background:#fff;border-right:1px solid #c4c4c4;border-bottom:1px solid #c4c4c4;text-align:right;"><span style="padding:0 2px 0 2px;display:block;overflow:hidden;white-space:nowrap;position:relative;top:1px">81414658</span></div>
<div class="gc" style="left:78px;top:153px;width:54px;height:18px;line-height:18px;background:#fff;border-right:1px solid #c4c4c4;border-bottom:1px solid #c4c4c4;"><span style="padding:0 2px 0 2px;display:block;overflow:hidden;white-space:nowrap;position:relative;top:1px">24.07.08</span></div>
<div class="gc" style="left:133px;top:153px;width:50px;height:18px;line-height:18px;background:#fff;border-right:1px solid #c4c4c4;border-bottom:1px solid #c4c4c4;"><span style="padding:0 2px 0 2px;display:block;overflow:hidden;white-space:nowrap;position:relative;top:1px"></span></div>
<div class="gc" style="left:184px;top:153px;width:59px;height:18px;line-height:18px;background:#fff;border-right:1px solid #c4c4c4;border-bottom:1px solid #c4c4c4;"><span style="padding:0 2px 0 2px;display:block;overflow:hidden;white-space:nowrap;position:relative;top:1px"></span></div>
<div class="gc" style="left:244px;top:153px;width:61px;height:18px;line-height:18px;background:#fff;border-right:1px solid #c4c4c4;border-bottom:1px solid #c4c4c4;text-align:right;"><span style="padding:0 2px 0 2px;display:block;overflow:hidden;white-space:nowrap;position:relative;top:1px">110,67</span></div>
<div class="gc" style="left:306px;top:153px;width:19px;height:18px;line-height:18px;background:#fff;border-right:1px solid #c4c4c4;border-bottom:1px solid #c4c4c4;"><span style="padding:0 2px 0 2px;display:block;overflow:hidden;white-space:nowrap;position:relative;top:1px"></span></div>
<div class="gc" style="left:326px;top:153px;width:71px;height:18px;line-height:18px;background:#fff;border-right:1px solid #c4c4c4;border-bottom:1px solid #c4c4c4;"><span style="padding:0 2px 0 2px;display:block;overflow:hidden;white-space:nowrap;position:relative;top:1px"></span></div>
</div>
</div>
<div style="left:916px;top:826px;width:16px;height:185px;background:#f0f0f0"><svg width="16" height="185" style="display:block"><path d="M4.6 10.4 L7.6 7.2 L10.6 10.4" fill="none" stroke="#5c5c5c" stroke-width="1.9"/><path d="M4.6 174.6 L7.6 177.8 L10.6 174.6" fill="none" stroke="#5c5c5c" stroke-width="1.9"/><rect x="0" y="17" width="16" height="17" fill="#cacaca"/></svg></div>
<div style="left:528px;top:1011px;width:388px;height:16px;background:#f0f0f0"><svg width="388" height="16" style="display:block"><path d="M10.2 4.5 L7 7.5 L10.2 10.5" fill="none" stroke="#5c5c5c" stroke-width="1.9"/><path d="M377.8 4.5 L381 7.5 L377.8 10.5" fill="none" stroke="#5c5c5c" stroke-width="1.9"/><rect x="17" y="0" width="17" height="16" fill="#cacaca"/></svg></div>
<div style="left:916px;top:1011px;width:16px;height:16px;background:#f0f0f0"></div>
<div class="t" style="left:707px;top:885.5px;height:16px;line-height:16px;">i</div>
<div class="blob" style="left:659px;top:887px;width:48px;height:14px"></div>
<div class="blob" style="left:656px;top:903px;width:59px;height:15px"></div>
<div class="blob" style="left:713px;top:963px;width:45px;height:14px"></div>
<div class="blob" style="left:659px;top:981px;width:51px;height:14px"></div>
<div style="left:938px;top:278px;width:534px;height:753px;box-sizing:border-box;border-left:1px solid #9a9a9a;border-top:1px solid #9a9a9a;background:#cfdcee"></div>
<div style="left:939px;top:279px;width:1px;height:752px;background:#fff"></div>
<div style="left:940px;top:279px;width:530px;height:30px;box-sizing:border-box;border:1px solid #9a9a9a;border-right-color:#fff;border-bottom-color:#fff;background:#d0ddef;"><div style="left:0;top:0;right:0;bottom:0;box-sizing:border-box;border:1px solid #fff;border-right-color:#9a9a9a;border-bottom-color:#9a9a9a"></div></div>
<div style="left:946px;top:286px"><svg width="17" height="16" viewBox="0 0 17 16" style="display:block"><path d="M2.4 7.4 L4.4 6.8 L9.4 8.6 L16.4 8.6 L16.2 11 L10.2 15.8 L2.9 13.6Z" fill="#cc211c" stroke="#861010" stroke-width=".7" stroke-linejoin="round"/><path d="M2.5 7.6 L4.6 8 L5 14 L3 13.4Z" fill="#8e1410"/><path d="M5.2 8.4 L9.6 10 L9.8 15.2 L5.4 13.8Z" fill="#e04a42"/><path d="M10 10.4 L16 8.9 L16 10.8 L10.2 15.2Z" fill="#ee5248"/><path d="M10.4 9.4 L12.4 9.3 L12.4 10.8 L10.4 11.2Z" fill="#fff"/><path d="M5.6 7.4 L7.8 6.4 L7.6 8.2Z" fill="#fff" opacity=".95"/><path d="M.5 8.4 C.2 4.6 2 1.4 5.6 .5 C7.6 0 9.4 0 10.6 .4 L11.4 -.5 L15.6 3 L13.8 9 L7 6.4 L9.2 5.2 C7.4 3.8 4.8 4.2 4 6.2 L3.6 7.9Z" fill="#3fba2e" stroke="#227a18" stroke-width=".7" stroke-linejoin="round"/><path d="M1.7 6 C2.2 3.4 4 1.9 6.4 1.5 C8 1.2 9.6 1.4 10.8 1.8 L13.8 3.6" fill="none" stroke="#a4ec8c" stroke-width="1" opacity=".9"/><path d="M9 5.4 L13 7.6 L14.2 4" fill="#2a9a1e" opacity=".55"/></svg></div>
<div class="sep" style="left:970px;top:283px;height:22px"></div>
<div class="btn" style="left:975px;top:282px;width:29px;height:25px"></div>
<div style="left:981px;top:286px"><svg width="17" height="16" viewBox="0 0 17 16" style="display:block"><rect x=".5" y=".5" width="15" height="13.4" fill="#c2ceda" stroke="#68747f" stroke-width="1"/><rect x="1" y="1" width="14" height="1.5" fill="#7e8a96"/><rect x="1.7" y="3.1" width="2.3" height="1.8" fill="#fff"/><rect x="5.05" y="3.1" width="2.3" height="1.8" fill="#fff"/><rect x="8.4" y="3.1" width="2.3" height="1.8" fill="#fff"/><rect x="11.75" y="3.1" width="2.3" height="1.8" fill="#fff"/><rect x="1.7" y="5.800000000000001" width="2.3" height="1.8" fill="#fff"/><rect x="5.05" y="5.800000000000001" width="2.3" height="1.8" fill="#fff"/><rect x="8.4" y="5.800000000000001" width="2.3" height="1.8" fill="#fff"/><rect x="11.75" y="5.800000000000001" width="2.3" height="1.8" fill="#fff"/><rect x="1.7" y="8.5" width="2.3" height="1.8" fill="#fff"/><rect x="5.05" y="8.5" width="2.3" height="1.8" fill="#fff"/><rect x="8.4" y="8.5" width="2.3" height="1.8" fill="#fff"/><rect x="11.75" y="8.5" width="2.3" height="1.8" fill="#fff"/><rect x="1.7" y="11.200000000000001" width="2.3" height="1.8" fill="#fff"/><rect x="5.05" y="11.200000000000001" width="2.3" height="1.8" fill="#fff"/><rect x="8.4" y="11.200000000000001" width="2.3" height="1.8" fill="#fff"/><rect x="11.75" y="11.200000000000001" width="2.3" height="1.8" fill="#fff"/><circle cx="9.6" cy="8.8" r="3.3" fill="#e8f0fa" stroke="#1a1a1a" stroke-width="1.2"/><path d="M12 11.2 L15.4 14.6" stroke="#7a4c12" stroke-width="2.1" stroke-linecap="round"/><path d="M12.3 11.5 L15.1 14.3" stroke="#dc9c3c" stroke-width=".8" stroke-linecap="round"/></svg></div>
<div class="btn" style="left:1005px;top:282px;width:25px;height:25px"></div>
<div style="left:1009px;top:286px"><svg width="17" height="16" viewBox="0 0 18 17" style="display:block"><rect x="1" y="5" width="13" height="10" fill="#fff" stroke="#222" stroke-width="1"/><path d="M1 5 L7.5 11 L14 5 M1 15 L5.6 9.4 M14 15 L9.4 9.4" fill="none" stroke="#222" stroke-width=".9"/><path d="M8 9 L14.5 1.5 L16.8 3.4 L10.5 10.8 L7.6 11.6Z" fill="#3a6ad0" stroke="#1a2a6a" stroke-width=".7"/></svg></div>
<div class="btn" style="left:1030px;top:282px;width:25px;height:25px"></div>
<div style="left:1034px;top:286px"><svg width="17" height="15" viewBox="0 0 18 16" style="display:block"><path d="M2 12 L5 3.5 L15.5 1.5 L16.5 4 L13.5 13 L4.5 15Z" fill="#8a9098" stroke="#33373c" stroke-width=".9"/><path d="M3 11 Q2.5 5 6.5 4 L8 5 L6.5 11.5 L4.5 13Z" fill="#5a6068" stroke="#222" stroke-width=".7"/><rect x="9.5" y="4" width="4.5" height="2.2" fill="#70c060" transform="rotate(-12 11 5)"/><path d="M9 8.5 L13.5 7.5 M8.6 10.5 L13 9.5 M8.2 12.3 L12.4 11.4" stroke="#dfe3e8" stroke-width="1"/></svg></div>
<div class="btn" style="left:1055px;top:282px;width:25px;height:25px"></div>
<div style="left:1059px;top:286px"><svg width="16" height="16" viewBox="0 0 17 17" style="display:block"><rect x=".8" y="2" width="11" height="13" rx="1" fill="#e8b030" stroke="#8a6010" stroke-width=".9"/><rect x="3.5" y=".6" width="5.6" height="3" rx=".8" fill="#7a8088" stroke="#3a3e44" stroke-width=".7"/><rect x="7.2" y="6.5" width="9" height="10" fill="#fff" stroke="#4a72b8" stroke-width=".9"/><path d="M9 9.5 H14.5 M9 11.5 H14.5 M9 13.5 H14.5" stroke="#5a8ad0" stroke-width=".9"/></svg></div>
<div class="btn" style="left:1080px;top:282px;width:25px;height:25px"></div>
<div style="left:1084px;top:286px"><svg width="17" height="16" viewBox="0 0 18 17" style="display:block"><path d="M3 2 L16 1 L17 10 L5 12Z" fill="#f4dc70" stroke="#8a7420" stroke-width=".9"/><path d="M6 4.5 L14 3.8 M6 6.5 L14.5 5.8 M6.4 8.5 L13 8" stroke="#a08a30" stroke-width=".8"/><path d="M1 13 L3.5 9.5 L12 9.5 L15 12.5 L15 15.5 L1 15.5Z" fill="#2a2c30" stroke="#111" stroke-width=".6"/><circle cx="4" cy="15.3" r="1.5" fill="#111"/><circle cx="12" cy="15.3" r="1.5" fill="#111"/><path d="M4.5 10.5 H7.5 V12.5 H3.2Z M8.5 10.5 H11.5 L13 12.5 H8.5Z" fill="#cfd6e0"/></svg></div>
<div class="btn" style="left:1105px;top:282px;width:25px;height:25px"></div>
<div style="left:1109px;top:286px"><svg width="17" height="16" viewBox="0 0 18 17" style="display:block"><rect x=".8" y="1.5" width="12" height="12" fill="#fff" stroke="#5a6068" stroke-width=".9"/><rect x=".8" y="1.5" width="12" height="3" fill="#d03030"/><path d="M2.5 7 H11 M2.5 9 H11 M2.5 11 H8" stroke="#98a0b0" stroke-width=".9"/><circle cx="12.2" cy="7.5" r="4.6" fill="#f4f6f8" stroke="#4a5058" stroke-width="1"/><path d="M12.2 4.8 V7.6 L14 8.8" stroke="#333" stroke-width=".9" fill="none"/><path d="M8 12 L11 15.5 L16 10.8" stroke="#2a62c8" stroke-width="1.6" fill="none"/></svg></div>
<div class="t bl" style="left:1159px;top:286.5px;height:16px;line-height:16px;font-size:12.5px">Ansprechpartner</div>
<div class="btn" style="left:1317px;top:281px;width:150px;height:26px"></div>
<div style="left:1348px;top:286px"><svg width="15" height="16" viewBox="0 0 16 16" style="display:block"><rect x=".5" y=".5" width="13" height="15" fill="#eef5fc" stroke="#6e7278" stroke-width="1"/><path d="M2.4 2.6 H6 M7.4 2.6 H10" stroke="#7e8894" stroke-width="1.1"/><path d="M10.8 3.4 H12" stroke="#8fb0d8" stroke-width=".8"/><path d="M2.2 5.5 H7.8 M2.2 9.2 H7.6" stroke="#111" stroke-width="1.3"/><path d="M2.4 7.4 H11 M2.4 11.4 H6.4 M2.4 13.2 H5.4 M10 11.5 H12 M9 13.4 H12" stroke="#a8c8ea" stroke-width=".9"/><path d="M5.2 15.2 L6.2 12.2 L12.6 6.2 L14.6 8.2 L8.2 14.2Z" fill="#f3c62c" stroke="#8a6410" stroke-width=".7" stroke-linejoin="round"/><path d="M7 12.6 L12.9 7" stroke="#fbe890" stroke-width=".9"/><path d="M5.2 15.2 L6.2 12.2 L8.2 14.2Z" fill="#4a3a20"/><path d="M12.6 6.2 L13.6 5.3 L15.6 7.3 L14.6 8.2Z" fill="#d83030" stroke="#7a1a1a" stroke-width=".5"/></svg></div>
<div class="t" style="left:1367px;top:286.0px;height:16px;line-height:16px;font-size:12.25px;color:#1e3a6e">Neuer Beleg</div>
<div style="left:940px;top:309px;width:529px;height:206px;background:#fff;box-sizing:border-box;border:1px solid #767676;overflow:hidden">
<div style="left:0;top:0;width:511px;height:204px;overflow:hidden">
<div class="gh" style="left:0px;top:0px;width:11px;height:19px;line-height:18px;border-right:1px solid #000;border-bottom:1px solid #000;box-shadow:inset 0 -1px 0 #666;"><span style="padding:0 0 0 2px;display:block;overflow:hidden;white-space:nowrap;position:relative;top:1px">d</span></div>
<div class="gh" style="left:12px;top:0px;width:20px;height:19px;line-height:18px;border-right:1px solid #000;border-bottom:1px solid #000;box-shadow:inset 0 -1px 0 #666;"><span style="padding:0 3px 0 2px;display:block;overflow:hidden;white-space:nowrap;position:relative;top:1px">So</span></div>
<div class="gh" style="left:33px;top:0px;width:150px;height:19px;line-height:18px;border-right:1px solid #000;border-bottom:1px solid #000;box-shadow:inset 0 -1px 0 #666;"><span style="padding:0 3px 0 2px;display:block;overflow:hidden;white-space:nowrap;position:relative;top:1px">Anzeigename</span></div>
<div class="gh" style="left:184px;top:0px;width:77px;height:19px;line-height:18px;border-right:1px solid #000;border-bottom:1px solid #000;box-shadow:inset 0 -1px 0 #666;"><span style="padding:0 3px 0 2px;display:block;overflow:hidden;white-space:nowrap;position:relative;top:1px">Abteilung</span></div>
<div class="gh" style="left:262px;top:0px;width:139px;height:19px;line-height:18px;border-right:1px solid #000;border-bottom:1px solid #000;box-shadow:inset 0 -1px 0 #666;"><span style="padding:0 3px 0 2px;display:block;overflow:hidden;white-space:nowrap;position:relative;top:1px">Funktion</span></div>
<div class="gh" style="left:402px;top:0px;width:105px;height:19px;line-height:18px;border-right:1px solid #000;border-bottom:1px solid #000;box-shadow:inset 0 -1px 0 #666;"><span style="padding:0 3px 0 2px;display:block;overflow:hidden;white-space:nowrap;position:relative;top:1px">Telefon</span></div>
<div style="left:0px;top:20px;width:11px;height:18px;background:#fff;border-right:1px solid #000;border-bottom:1px solid #000;"><svg width="8" height="12" style="position:absolute;left:3px;top:3px"><path d="M0 0 L6 5.5 L0 11Z" fill="#000"/></svg></div>
<div class="gc" style="left:12px;top:20px;width:20px;height:18px;line-height:18px;background:#fff;border-right:1px solid #c4c4c4;border-bottom:1px solid #c4c4c4;background:#008000;text-align:right;"><span style="padding:0 2px 0 2px;display:block;overflow:hidden;white-space:nowrap;position:relative;top:1px">1</span></div>
<div class="gc" style="left:33px;top:20px;width:150px;height:18px;line-height:18px;background:#fff;border-right:1px solid #c4c4c4;border-bottom:1px solid #c4c4c4;"><span style="padding:0 2px 0 2px;display:block;overflow:hidden;white-space:nowrap;position:relative;top:1px"></span></div>
<div class="gc" style="left:184px;top:20px;width:77px;height:18px;line-height:18px;background:#fff;border-right:1px solid #c4c4c4;border-bottom:1px solid #c4c4c4;"><span style="padding:0 2px 0 2px;display:block;overflow:hidden;white-space:nowrap;position:relative;top:1px">Verkauf</span></div>
<div class="gc" style="left:262px;top:20px;width:139px;height:18px;line-height:18px;background:#fff;border-right:1px solid #c4c4c4;border-bottom:1px solid #c4c4c4;"><span style="padding:0 2px 0 2px;display:block;overflow:hidden;white-space:nowrap;position:relative;top:1px">Auszubildender</span></div>
<div class="gc" style="left:402px;top:20px;width:105px;height:18px;line-height:18px;background:#fff;border-right:1px solid #c4c4c4;border-bottom:1px solid #c4c4c4;"><span style="padding:0 2px 0 2px;display:block;overflow:hidden;white-space:nowrap;position:relative;top:1px">030-54841229</span></div>
<div style="left:0px;top:39px;width:11px;height:18px;background:#fff;border-right:1px solid #000;border-bottom:1px solid #000;"></div>
<div class="gc" style="left:12px;top:39px;width:20px;height:18px;line-height:18px;background:#fff;border-right:1px solid #c4c4c4;border-bottom:1px solid #c4c4c4;text-align:right;"><span style="padding:0 2px 0 2px;display:block;overflow:hidden;white-space:nowrap;position:relative;top:1px">2</span></div>
<div class="gc" style="left:33px;top:39px;width:150px;height:18px;line-height:18px;background:#fff;border-right:1px solid #c4c4c4;border-bottom:1px solid #c4c4c4;"><span style="padding:0 2px 0 2px;display:block;overflow:hidden;white-space:nowrap;position:relative;top:1px"></span></div>
<div class="gc" style="left:184px;top:39px;width:77px;height:18px;line-height:18px;background:#fff;border-right:1px solid #c4c4c4;border-bottom:1px solid #c4c4c4;"><span style="padding:0 2px 0 2px;display:block;overflow:hidden;white-space:nowrap;position:relative;top:1px">IT</span></div>
<div class="gc" style="left:262px;top:39px;width:139px;height:18px;line-height:18px;background:#fff;border-right:1px solid #c4c4c4;border-bottom:1px solid #c4c4c4;"><span style="padding:0 2px 0 2px;display:block;overflow:hidden;white-space:nowrap;position:relative;top:1px">neutral</span></div>
<div class="gc" style="left:402px;top:39px;width:105px;height:18px;line-height:18px;background:#fff;border-right:1px solid #c4c4c4;border-bottom:1px solid #c4c4c4;"><span style="padding:0 2px 0 2px;display:block;overflow:hidden;white-space:nowrap;position:relative;top:1px">030-5688210</span></div>
<div style="left:0px;top:58px;width:11px;height:18px;background:#fff;border-right:1px solid #000;border-bottom:1px solid #000;"></div>
<div class="gc" style="left:12px;top:58px;width:20px;height:18px;line-height:18px;background:#fff;border-right:1px solid #c4c4c4;border-bottom:1px solid #c4c4c4;text-align:right;"><span style="padding:0 2px 0 2px;display:block;overflow:hidden;white-space:nowrap;position:relative;top:1px">3</span></div>
<div class="gc" style="left:33px;top:58px;width:150px;height:18px;line-height:18px;background:#fff;border-right:1px solid #c4c4c4;border-bottom:1px solid #c4c4c4;"><span style="padding:0 2px 0 2px;display:block;overflow:hidden;white-space:nowrap;position:relative;top:1px"></span></div>
<div class="gc" style="left:184px;top:58px;width:77px;height:18px;line-height:18px;background:#fff;border-right:1px solid #c4c4c4;border-bottom:1px solid #c4c4c4;"><span style="padding:0 2px 0 2px;display:block;overflow:hidden;white-space:nowrap;position:relative;top:1px">IT</span></div>
<div class="gc" style="left:262px;top:58px;width:139px;height:18px;line-height:18px;background:#fff;border-right:1px solid #c4c4c4;border-bottom:1px solid #c4c4c4;background:#008000;"><span style="padding:0 2px 0 2px;display:block;overflow:hidden;white-space:nowrap;position:relative;top:1px">Geschäftsleitung</span></div>
<div class="gc" style="left:402px;top:58px;width:105px;height:18px;line-height:18px;background:#fff;border-right:1px solid #c4c4c4;border-bottom:1px solid #c4c4c4;"><span style="padding:0 2px 0 2px;display:block;overflow:hidden;white-space:nowrap;position:relative;top:1px">5688210</span></div>
<div style="left:0px;top:77px;width:11px;height:18px;background:#fff;border-right:1px solid #000;border-bottom:1px solid #000;"></div>
<div class="gc" style="left:12px;top:77px;width:20px;height:18px;line-height:18px;background:#fff;border-right:1px solid #c4c4c4;border-bottom:1px solid #c4c4c4;text-align:right;"><span style="padding:0 2px 0 2px;display:block;overflow:hidden;white-space:nowrap;position:relative;top:1px">4</span></div>
<div class="gc" style="left:33px;top:77px;width:150px;height:18px;line-height:18px;background:#fff;border-right:1px solid #c4c4c4;border-bottom:1px solid #c4c4c4;"><span style="padding:0 2px 0 2px;display:block;overflow:hidden;white-space:nowrap;position:relative;top:1px"></span></div>
<div class="gc" style="left:184px;top:77px;width:77px;height:18px;line-height:18px;background:#fff;border-right:1px solid #c4c4c4;border-bottom:1px solid #c4c4c4;"><span style="padding:0 2px 0 2px;display:block;overflow:hidden;white-space:nowrap;position:relative;top:1px">IT</span></div>
<div class="gc" style="left:262px;top:77px;width:139px;height:18px;line-height:18px;background:#fff;border-right:1px solid #c4c4c4;border-bottom:1px solid #c4c4c4;"><span style="padding:0 2px 0 2px;display:block;overflow:hidden;white-space:nowrap;position:relative;top:1px">neutral</span></div>
<div class="gc" style="left:402px;top:77px;width:105px;height:18px;line-height:18px;background:#fff;border-right:1px solid #c4c4c4;border-bottom:1px solid #c4c4c4;"><span style="padding:0 2px 0 2px;display:block;overflow:hidden;white-space:nowrap;position:relative;top:1px">030-5688210</span></div>
<div style="left:0px;top:96px;width:11px;height:18px;background:#fff;border-right:1px solid #000;border-bottom:1px solid #000;"></div>
<div class="gc" style="left:12px;top:96px;width:20px;height:18px;line-height:18px;background:#fff;border-right:1px solid #c4c4c4;border-bottom:1px solid #c4c4c4;text-align:right;"><span style="padding:0 2px 0 2px;display:block;overflow:hidden;white-space:nowrap;position:relative;top:1px">5</span></div>
<div class="gc" style="left:33px;top:96px;width:150px;height:18px;line-height:18px;background:#fff;border-right:1px solid #c4c4c4;border-bottom:1px solid #c4c4c4;"><span style="padding:0 2px 0 2px;display:block;overflow:hidden;white-space:nowrap;position:relative;top:1px"></span></div>
<div class="gc" style="left:184px;top:96px;width:77px;height:18px;line-height:18px;background:#fff;border-right:1px solid #c4c4c4;border-bottom:1px solid #c4c4c4;"><span style="padding:0 2px 0 2px;display:block;overflow:hidden;white-space:nowrap;position:relative;top:1px">Buchhaltung</span></div>
<div class="gc" style="left:262px;top:96px;width:139px;height:18px;line-height:18px;background:#fff;border-right:1px solid #c4c4c4;border-bottom:1px solid #c4c4c4;"><span style="padding:0 2px 0 2px;display:block;overflow:hidden;white-space:nowrap;position:relative;top:1px">neutral</span></div>
<div class="gc" style="left:402px;top:96px;width:105px;height:18px;line-height:18px;background:#fff;border-right:1px solid #c4c4c4;border-bottom:1px solid #c4c4c4;"><span style="padding:0 2px 0 2px;display:block;overflow:hidden;white-space:nowrap;position:relative;top:1px">030-5688210</span></div>
<div style="left:0px;top:115px;width:11px;height:18px;background:#fff;border-right:1px solid #000;border-bottom:1px solid #000;"></div>
<div class="gc" style="left:12px;top:115px;width:20px;height:18px;line-height:18px;background:#fff;border-right:1px solid #c4c4c4;border-bottom:1px solid #c4c4c4;text-align:right;"><span style="padding:0 2px 0 2px;display:block;overflow:hidden;white-space:nowrap;position:relative;top:1px">6</span></div>
<div class="gc" style="left:33px;top:115px;width:150px;height:18px;line-height:18px;background:#fff;border-right:1px solid #c4c4c4;border-bottom:1px solid #c4c4c4;"><span style="padding:0 2px 0 2px;display:block;overflow:hidden;white-space:nowrap;position:relative;top:1px"></span></div>
<div class="gc" style="left:184px;top:115px;width:77px;height:18px;line-height:18px;background:#fff;border-right:1px solid #c4c4c4;border-bottom:1px solid #c4c4c4;"><span style="padding:0 2px 0 2px;display:block;overflow:hidden;white-space:nowrap;position:relative;top:1px">IT-Archiv</span></div>
<div class="gc" style="left:262px;top:115px;width:139px;height:18px;line-height:18px;background:#fff;border-right:1px solid #c4c4c4;border-bottom:1px solid #c4c4c4;"><span style="padding:0 2px 0 2px;display:block;overflow:hidden;white-space:nowrap;position:relative;top:1px"></span></div>
<div class="gc" style="left:402px;top:115px;width:105px;height:18px;line-height:18px;background:#fff;border-right:1px solid #c4c4c4;border-bottom:1px solid #c4c4c4;"><span style="padding:0 2px 0 2px;display:block;overflow:hidden;white-space:nowrap;position:relative;top:1px">030-5688210</span></div>
</div>
</div>
<div style="left:1451px;top:310px;width:16px;height:188px;background:#f0f0f0"><svg width="16" height="188" style="display:block"><path d="M4.6 10.4 L7.6 7.2 L10.6 10.4" fill="none" stroke="#5c5c5c" stroke-width="1.9"/><path d="M4.6 177.6 L7.6 180.8 L10.6 177.6" fill="none" stroke="#5c5c5c" stroke-width="1.9"/><rect x="0" y="17" width="16" height="84" fill="#cacaca"/></svg></div>
<div style="left:941px;top:498px;width:510px;height:16px;background:#f0f0f0"><svg width="510" height="16" style="display:block"><path d="M10.2 4.5 L7 7.5 L10.2 10.5" fill="none" stroke="#5c5c5c" stroke-width="1.9"/><path d="M499.8 4.5 L503 7.5 L499.8 10.5" fill="none" stroke="#5c5c5c" stroke-width="1.9"/><rect x="17" y="0" width="17" height="16" fill="#cacaca"/></svg></div>
<div style="left:1451px;top:498px;width:16px;height:16px;background:#f0f0f0"></div>
<div class="t" style="left:1100px;top:331px;width:24px;height:17px;line-height:18px;overflow:hidden"><span style="position:absolute;left:12px">Sy</span></div>
<div class="t" style="left:1100px;top:369px;width:24px;height:17px;line-height:18px;overflow:hidden"><span style="position:absolute;left:18px">y</span></div>
<div class="t" style="left:1100px;top:388px;width:24px;height:17px;line-height:18px;overflow:hidden"><span style="position:absolute;left:19px">r</span></div>
<div class="t" style="left:1100px;top:407px;width:24px;height:17px;line-height:18px;overflow:hidden"><span style="position:absolute;left:17px">C</span></div>
<div class="t" style="left:1100px;top:426px;width:24px;height:17px;line-height:18px;overflow:hidden"><span style="position:absolute;left:13px">te</span></div>
<div class="blob" style="left:970px;top:332px;width:146px;height:15px"></div>
<div class="blob" style="left:968px;top:351px;width:156px;height:15px"></div>
<div class="blob" style="left:972px;top:370px;width:150px;height:15px"></div>
<div class="blob" style="left:969px;top:389px;width:154px;height:15px"></div>
<div class="blob" style="left:972px;top:408px;width:150px;height:15px"></div>
<div class="blob" style="left:972px;top:427px;width:146px;height:15px"></div>
<div style="left:940px;top:520px;width:530px;height:31px;box-sizing:border-box;border:1px solid #9a9a9a;border-right-color:#fff;border-bottom-color:#fff;background:#d0ddef;"><div style="left:0;top:0;right:0;bottom:0;box-sizing:border-box;border:1px solid #fff;border-right-color:#9a9a9a;border-bottom-color:#9a9a9a"></div></div>
<div style="left:946px;top:527px"><svg width="16" height="16" viewBox="0 0 16 16" style="display:block"><defs><radialGradient id="gp" cx=".4" cy=".35" r=".8"><stop offset="0" stop-color="#7be04a"/><stop offset=".6" stop-color="#3fae1c"/><stop offset="1" stop-color="#22800e"/></radialGradient></defs><path d="M5.3 .8 H10.7 V5.3 H15.2 V10.7 H10.7 V15.2 H5.3 V10.7 H.8 V5.3 H5.3Z" fill="url(#gp)" stroke="#1f7a0f" stroke-width="1.1" stroke-linejoin="round"/></svg></div>
<div class="sep" style="left:970px;top:524px;height:23px"></div>
<div style="left:979px;top:527px"><svg width="17" height="16" viewBox="0 0 17 16" style="display:block"><path d="M2.4 7.4 L4.4 6.8 L9.4 8.6 L16.4 8.6 L16.2 11 L10.2 15.8 L2.9 13.6Z" fill="#cc211c" stroke="#861010" stroke-width=".7" stroke-linejoin="round"/><path d="M2.5 7.6 L4.6 8 L5 14 L3 13.4Z" fill="#8e1410"/><path d="M5.2 8.4 L9.6 10 L9.8 15.2 L5.4 13.8Z" fill="#e04a42"/><path d="M10 10.4 L16 8.9 L16 10.8 L10.2 15.2Z" fill="#ee5248"/><path d="M10.4 9.4 L12.4 9.3 L12.4 10.8 L10.4 11.2Z" fill="#fff"/><path d="M5.6 7.4 L7.8 6.4 L7.6 8.2Z" fill="#fff" opacity=".95"/><path d="M.5 8.4 C.2 4.6 2 1.4 5.6 .5 C7.6 0 9.4 0 10.6 .4 L11.4 -.5 L15.6 3 L13.8 9 L7 6.4 L9.2 5.2 C7.4 3.8 4.8 4.2 4 6.2 L3.6 7.9Z" fill="#3fba2e" stroke="#227a18" stroke-width=".7" stroke-linejoin="round"/><path d="M1.7 6 C2.2 3.4 4 1.9 6.4 1.5 C8 1.2 9.6 1.4 10.8 1.8 L13.8 3.6" fill="none" stroke="#a4ec8c" stroke-width="1" opacity=".9"/><path d="M9 5.4 L13 7.6 L14.2 4" fill="#2a9a1e" opacity=".55"/></svg></div>
<div class="sep" style="left:1004px;top:524px;height:22px"></div>
<div class="btn" style="left:1008px;top:523px;width:30px;height:25px"></div>
<div style="left:1015px;top:528px"><svg width="17" height="16" viewBox="0 0 17 16" style="display:block"><rect x=".5" y=".5" width="15" height="13.4" fill="#c2ceda" stroke="#68747f" stroke-width="1"/><rect x="1" y="1" width="14" height="1.5" fill="#7e8a96"/><rect x="1.7" y="3.1" width="2.3" height="1.8" fill="#fff"/><rect x="5.05" y="3.1" width="2.3" height="1.8" fill="#fff"/><rect x="8.4" y="3.1" width="2.3" height="1.8" fill="#fff"/><rect x="11.75" y="3.1" width="2.3" height="1.8" fill="#fff"/><rect x="1.7" y="5.800000000000001" width="2.3" height="1.8" fill="#fff"/><rect x="5.05" y="5.800000000000001" width="2.3" height="1.8" fill="#fff"/><rect x="8.4" y="5.800000000000001" width="2.3" height="1.8" fill="#fff"/><rect x="11.75" y="5.800000000000001" width="2.3" height="1.8" fill="#fff"/><rect x="1.7" y="8.5" width="2.3" height="1.8" fill="#fff"/><rect x="5.05" y="8.5" width="2.3" height="1.8" fill="#fff"/><rect x="8.4" y="8.5" width="2.3" height="1.8" fill="#fff"/><rect x="11.75" y="8.5" width="2.3" height="1.8" fill="#fff"/><rect x="1.7" y="11.200000000000001" width="2.3" height="1.8" fill="#fff"/><rect x="5.05" y="11.200000000000001" width="2.3" height="1.8" fill="#fff"/><rect x="8.4" y="11.200000000000001" width="2.3" height="1.8" fill="#fff"/><rect x="11.75" y="11.200000000000001" width="2.3" height="1.8" fill="#fff"/><circle cx="9.6" cy="8.8" r="3.3" fill="#e8f0fa" stroke="#1a1a1a" stroke-width="1.2"/><path d="M12 11.2 L15.4 14.6" stroke="#7a4c12" stroke-width="2.1" stroke-linecap="round"/><path d="M12.3 11.5 L15.1 14.3" stroke="#dc9c3c" stroke-width=".8" stroke-linecap="round"/></svg></div>
<div style="left:1142px;top:523px;width:46px;height:25px;background:#fff"></div>
<div style="left:1047px;top:526px"><svg width="15" height="17" viewBox="0 0 15 17" style="display:block"><rect x=".7" y=".7" width="13.2" height="15" rx="1.2" fill="#dfe3e8" stroke="#3a3d42" stroke-width="1.1"/><rect x="2" y="1.6" width="10.6" height="1.3" fill="#b8bec6"/><path d="M2.4 4.4 H4 M2.4 6.6 H4 M2.4 8.8 H4 M2.4 11 H4 M2.4 13.2 H4" stroke="#5a6068" stroke-width="1"/><path d="M5 4.4 H11.6 M5 6.6 H7" stroke="#aab0b8" stroke-width=".8"/><circle cx="8.4" cy="10" r="3.4" fill="#f6f9fc" stroke="#1e1e1e" stroke-width="1.3"/><path d="M10.9 12.6 L14.2 15.8" stroke="#8a5a18" stroke-width="2.1" stroke-linecap="round"/><path d="M11.2 12.8 L14 15.6" stroke="#e0a040" stroke-width=".8" stroke-linecap="round"/></svg></div>
<div class="t" style="left:1066px;top:527px;height:16px;line-height:16px;width:86px;overflow:hidden;font-size:12.25px;color:#1e3a6e">Alle Ansprechpartner</div>
<div style="left:1152px;top:526px"><svg width="15" height="17" viewBox="0 0 15 17" style="display:block"><rect x=".7" y=".7" width="13.2" height="15" rx="1.2" fill="#dfe3e8" stroke="#3a3d42" stroke-width="1.1"/><rect x="2" y="1.6" width="10.6" height="1.3" fill="#b8bec6"/><path d="M2.4 4.4 H4 M2.4 6.6 H4 M2.4 8.8 H4 M2.4 11 H4 M2.4 13.2 H4" stroke="#5a6068" stroke-width="1"/><path d="M5 4.4 H11.6 M5 6.6 H7" stroke="#aab0b8" stroke-width=".8"/><circle cx="8.4" cy="10" r="3.4" fill="#f6f9fc" stroke="#1e1e1e" stroke-width="1.3"/><path d="M10.9 12.6 L14.2 15.8" stroke="#8a5a18" stroke-width="2.1" stroke-linecap="round"/><path d="M11.2 12.8 L14 15.6" stroke="#e0a040" stroke-width=".8" stroke-linecap="round"/></svg></div>
<div class="t" style="left:1169px;top:527.0px;height:16px;line-height:16px;font-size:12.25px;color:#1e3a6e;white-space:pre">Ab  16.06.2021</div>
<div class="t bl" style="left:1191px;top:528.0px;height:16px;line-height:16px;font-size:12.5px;opacity:.85">Vorgänge</div>
<div style="left:1280px;top:526px"><svg width="15" height="17" viewBox="0 0 15 17" style="display:block"><rect x=".7" y=".7" width="13.2" height="15" rx="1.2" fill="#dfe3e8" stroke="#3a3d42" stroke-width="1.1"/><rect x="2" y="1.6" width="10.6" height="1.3" fill="#b8bec6"/><path d="M2.4 4.4 H4 M2.4 6.6 H4 M2.4 8.8 H4 M2.4 11 H4 M2.4 13.2 H4" stroke="#5a6068" stroke-width="1"/><path d="M5 4.4 H11.6 M5 6.6 H7" stroke="#aab0b8" stroke-width=".8"/><circle cx="8.4" cy="10" r="3.4" fill="#f6f9fc" stroke="#1e1e1e" stroke-width="1.3"/><path d="M10.9 12.6 L14.2 15.8" stroke="#8a5a18" stroke-width="2.1" stroke-linecap="round"/><path d="M11.2 12.8 L14 15.6" stroke="#e0a040" stroke-width=".8" stroke-linecap="round"/></svg></div>
<div class="t" style="left:1299px;top:527.0px;height:16px;line-height:16px;font-size:12.25px;color:#1e3a6e">AD Notizen</div>
<div style="left:1389px;top:526px"><svg width="15" height="17" viewBox="0 0 15 17" style="display:block"><rect x=".7" y=".7" width="13.2" height="15" rx="1.2" fill="#dfe3e8" stroke="#3a3d42" stroke-width="1.1"/><rect x="2" y="1.6" width="10.6" height="1.3" fill="#b8bec6"/><path d="M2.4 4.4 H4 M2.4 6.6 H4 M2.4 8.8 H4 M2.4 11 H4 M2.4 13.2 H4" stroke="#5a6068" stroke-width="1"/><path d="M5 4.4 H11.6 M5 6.6 H7" stroke="#aab0b8" stroke-width=".8"/><circle cx="8.4" cy="10" r="3.4" fill="#f6f9fc" stroke="#1e1e1e" stroke-width="1.3"/><path d="M10.9 12.6 L14.2 15.8" stroke="#8a5a18" stroke-width="2.1" stroke-linecap="round"/><path d="M11.2 12.8 L14 15.6" stroke="#e0a040" stroke-width=".8" stroke-linecap="round"/></svg></div>
<div class="t" style="left:1407px;top:527.0px;height:16px;line-height:16px;font-size:12.25px;color:#1e3a6e">PN 1021</div>
<div style="left:940px;top:550px;width:529px;height:378px;background:#fff;box-sizing:border-box;border:1px solid #767676;overflow:hidden">
<div style="left:0;top:0;width:511px;height:376px;overflow:hidden">
<div class="gh" style="left:0px;top:0px;width:11px;height:19px;line-height:18px;border-right:1px solid #000;border-bottom:1px solid #000;box-shadow:inset 0 -1px 0 #666;"><span style="padding:0 0 0 2px;display:block;overflow:hidden;white-space:nowrap;position:relative;top:1px">d</span></div>
<div class="gh" style="left:12px;top:0px;width:22px;height:19px;line-height:18px;border-right:1px solid #000;border-bottom:1px solid #000;box-shadow:inset 0 -1px 0 #666;"><span style="padding:0 3px 0 2px;display:block;overflow:hidden;white-space:nowrap;position:relative;top:1px">Typ</span></div>
<div class="gh" style="left:35px;top:0px;width:103px;height:19px;line-height:18px;border-right:1px solid #000;border-bottom:1px solid #000;box-shadow:inset 0 -1px 0 #666;"><span style="padding:0 3px 0 2px;display:block;overflow:hidden;white-space:nowrap;position:relative;top:1px">Erstellt</span></div>
<div class="gh" style="left:139px;top:0px;width:118px;height:19px;line-height:18px;border-right:1px solid #000;border-bottom:1px solid #000;box-shadow:inset 0 -1px 0 #666;"><span style="padding:0 3px 0 2px;display:block;overflow:hidden;white-space:nowrap;position:relative;top:1px">Betreff</span></div>
<div class="gh" style="left:258px;top:0px;width:120px;height:19px;line-height:18px;border-right:1px solid #000;border-bottom:1px solid #000;box-shadow:inset 0 -1px 0 #666;"><span style="padding:0 3px 0 2px;display:block;overflow:hidden;white-space:nowrap;position:relative;top:1px">Zeitpunkt</span></div>
<div class="gh" style="left:379px;top:0px;width:140px;height:19px;line-height:18px;border-right:1px solid #000;border-bottom:1px solid #000;box-shadow:inset 0 -1px 0 #666;"><span style="padding:0 3px 0 2px;display:block;overflow:hidden;white-space:nowrap;position:relative;top:1px">Von</span></div>
<div style="left:0px;top:20px;width:10px;height:18px;background:#fff;border-right:2px solid #000;border-bottom:1px solid #000;"><svg width="8" height="12" style="position:absolute;left:3px;top:3px"><path d="M0 0 L6 5.5 L0 11Z" fill="#000"/></svg></div>
<div class="gc" style="left:12px;top:20px;width:22px;height:18px;line-height:18px;background:#fff;border-right:1px solid #c4c4c4;border-bottom:1px solid #c4c4c4;"><span style="padding:0 2px 0 2px;display:block;overflow:hidden;white-space:nowrap;position:relative;top:1px"></span></div>
<div class="gc" style="left:35px;top:20px;width:103px;height:18px;line-height:18px;background:#fff;border-right:1px solid #c4c4c4;border-bottom:1px solid #c4c4c4;"><span style="padding:0 2px 0 2px;display:block;overflow:hidden;white-space:nowrap;position:relative;top:1px">07.09.2021 17:00</span></div>
<div class="gc" style="left:139px;top:20px;width:118px;height:18px;line-height:18px;background:#fff;border-right:1px solid #c4c4c4;border-bottom:1px solid #c4c4c4;"><span style="padding:0 2px 0 2px;display:block;overflow:hidden;white-space:nowrap;position:relative;top:1px">Telefonnotiz</span></div>
<div class="gc" style="left:258px;top:20px;width:120px;height:18px;line-height:18px;background:#fff;border-right:1px solid #c4c4c4;border-bottom:1px solid #c4c4c4;"><span style="padding:0 2px 0 2px;display:block;overflow:hidden;white-space:nowrap;position:relative;top:1px">07.09.2021 17:00:48</span></div>
<div class="gc" style="left:379px;top:20px;width:140px;height:18px;line-height:18px;background:#fff;border-right:1px solid #c4c4c4;border-bottom:1px solid #c4c4c4;"><span style="padding:0 2px 0 2px;display:block;overflow:hidden;white-space:nowrap;position:relative;top:1px"></span></div>
<div style="left:0px;top:39px;width:10px;height:18px;background:#fff;border-right:2px solid #000;border-bottom:1px solid #000;"></div>
<div class="gc" style="left:12px;top:39px;width:22px;height:18px;line-height:18px;background:#fff;border-right:1px solid #c4c4c4;border-bottom:1px solid #c4c4c4;"><span style="padding:0 2px 0 2px;display:block;overflow:hidden;white-space:nowrap;position:relative;top:1px"></span></div>
<div class="gc" style="left:35px;top:39px;width:103px;height:18px;line-height:18px;background:#fff;border-right:1px solid #c4c4c4;border-bottom:1px solid #c4c4c4;"><span style="padding:0 2px 0 2px;display:block;overflow:hidden;white-space:nowrap;position:relative;top:1px">01.09.2021 08:33</span></div>
<div class="gc" style="left:139px;top:39px;width:118px;height:18px;line-height:18px;background:#fff;border-right:1px solid #c4c4c4;border-bottom:1px solid #c4c4c4;"><span style="padding:0 2px 0 2px;display:block;overflow:hidden;white-space:nowrap;position:relative;top:1px">Besuchsbericht</span></div>
<div class="gc" style="left:258px;top:39px;width:120px;height:18px;line-height:18px;background:#fff;border-right:1px solid #c4c4c4;border-bottom:1px solid #c4c4c4;"><span style="padding:0 2px 0 2px;display:block;overflow:hidden;white-space:nowrap;position:relative;top:1px">16.09.2021 11:00:00</span></div>
<div class="gc" style="left:379px;top:39px;width:140px;height:18px;line-height:18px;background:#fff;border-right:1px solid #c4c4c4;border-bottom:1px solid #c4c4c4;"><span style="padding:0 2px 0 2px;display:block;overflow:hidden;white-space:nowrap;position:relative;top:1px"></span></div>
<div style="left:0px;top:58px;width:10px;height:18px;background:#fff;border-right:2px solid #000;border-bottom:1px solid #000;"></div>
<div class="gc" style="left:12px;top:58px;width:22px;height:18px;line-height:18px;background:#fff;border-right:1px solid #c4c4c4;border-bottom:1px solid #c4c4c4;"><span style="padding:0 2px 0 2px;display:block;overflow:hidden;white-space:nowrap;position:relative;top:1px"></span></div>
<div class="gc" style="left:35px;top:58px;width:103px;height:18px;line-height:18px;background:#fff;border-right:1px solid #c4c4c4;border-bottom:1px solid #c4c4c4;"><span style="padding:0 2px 0 2px;display:block;overflow:hidden;white-space:nowrap;position:relative;top:1px">31.08.2021 13:41</span></div>
<div class="gc" style="left:139px;top:58px;width:118px;height:18px;line-height:18px;background:#fff;border-right:1px solid #c4c4c4;border-bottom:1px solid #c4c4c4;"><span style="padding:0 2px 0 2px;display:block;overflow:hidden;white-space:nowrap;position:relative;top:1px">Besuchsbericht</span></div>
<div class="gc" style="left:258px;top:58px;width:120px;height:18px;line-height:18px;background:#fff;border-right:1px solid #c4c4c4;border-bottom:1px solid #c4c4c4;"><span style="padding:0 2px 0 2px;display:block;overflow:hidden;white-space:nowrap;position:relative;top:1px">31.08.2021 13:41:05</span></div>
<div class="gc" style="left:379px;top:58px;width:140px;height:18px;line-height:18px;background:#fff;border-right:1px solid #c4c4c4;border-bottom:1px solid #c4c4c4;"><span style="padding:0 2px 0 2px;display:block;overflow:hidden;white-space:nowrap;position:relative;top:1px"></span></div>
<div style="left:0px;top:77px;width:10px;height:18px;background:#fff;border-right:2px solid #000;border-bottom:1px solid #000;"></div>
<div class="gc" style="left:12px;top:77px;width:22px;height:18px;line-height:18px;background:#fff;border-right:1px solid #c4c4c4;border-bottom:1px solid #c4c4c4;"><span style="padding:0 2px 0 2px;display:block;overflow:hidden;white-space:nowrap;position:relative;top:1px"></span></div>
<div class="gc" style="left:35px;top:77px;width:103px;height:18px;line-height:18px;background:#fff;border-right:1px solid #c4c4c4;border-bottom:1px solid #c4c4c4;"><span style="padding:0 2px 0 2px;display:block;overflow:hidden;white-space:nowrap;position:relative;top:1px">31.08.2021 13:39</span></div>
<div class="gc" style="left:139px;top:77px;width:118px;height:18px;line-height:18px;background:#fff;border-right:1px solid #c4c4c4;border-bottom:1px solid #c4c4c4;"><span style="padding:0 2px 0 2px;display:block;overflow:hidden;white-space:nowrap;position:relative;top:1px">Besuchsbericht</span></div>
<div class="gc" style="left:258px;top:77px;width:120px;height:18px;line-height:18px;background:#fff;border-right:1px solid #c4c4c4;border-bottom:1px solid #c4c4c4;"><span style="padding:0 2px 0 2px;display:block;overflow:hidden;white-space:nowrap;position:relative;top:1px">31.08.2021 13:39:57</span></div>
<div class="gc" style="left:379px;top:77px;width:140px;height:18px;line-height:18px;background:#fff;border-right:1px solid #c4c4c4;border-bottom:1px solid #c4c4c4;"><span style="padding:0 2px 0 2px;display:block;overflow:hidden;white-space:nowrap;position:relative;top:1px"></span></div>
<div style="left:0px;top:96px;width:10px;height:18px;background:#fff;border-right:2px solid #000;border-bottom:1px solid #000;"></div>
<div class="gc" style="left:12px;top:96px;width:22px;height:18px;line-height:18px;background:#fff;border-right:1px solid #c4c4c4;border-bottom:1px solid #c4c4c4;"><span style="padding:0 2px 0 2px;display:block;overflow:hidden;white-space:nowrap;position:relative;top:1px"></span></div>
<div class="gc" style="left:35px;top:96px;width:103px;height:18px;line-height:18px;background:#fff;border-right:1px solid #c4c4c4;border-bottom:1px solid #c4c4c4;"><span style="padding:0 2px 0 2px;display:block;overflow:hidden;white-space:nowrap;position:relative;top:1px">31.08.2021 13:34</span></div>
<div class="gc" style="left:139px;top:96px;width:118px;height:18px;line-height:18px;background:#fff;border-right:1px solid #c4c4c4;border-bottom:1px solid #c4c4c4;"><span style="padding:0 2px 0 2px;display:block;overflow:hidden;white-space:nowrap;position:relative;top:1px">Besuchsbericht</span></div>
<div class="gc" style="left:258px;top:96px;width:120px;height:18px;line-height:18px;background:#fff;border-right:1px solid #c4c4c4;border-bottom:1px solid #c4c4c4;"><span style="padding:0 2px 0 2px;display:block;overflow:hidden;white-space:nowrap;position:relative;top:1px">31.08.2021 13:34:17</span></div>
<div class="gc" style="left:379px;top:96px;width:140px;height:18px;line-height:18px;background:#fff;border-right:1px solid #c4c4c4;border-bottom:1px solid #c4c4c4;"><span style="padding:0 2px 0 2px;display:block;overflow:hidden;white-space:nowrap;position:relative;top:1px"></span></div>
<div style="left:0px;top:115px;width:10px;height:18px;background:#fff;border-right:2px solid #000;border-bottom:1px solid #000;"></div>
<div class="gc" style="left:12px;top:115px;width:22px;height:18px;line-height:18px;background:#fff;border-right:1px solid #c4c4c4;border-bottom:1px solid #c4c4c4;"><span style="padding:0 2px 0 2px;display:block;overflow:hidden;white-space:nowrap;position:relative;top:1px"></span></div>
<div class="gc" style="left:35px;top:115px;width:103px;height:18px;line-height:18px;background:#fff;border-right:1px solid #c4c4c4;border-bottom:1px solid #c4c4c4;"><span style="padding:0 2px 0 2px;display:block;overflow:hidden;white-space:nowrap;position:relative;top:1px">31.08.2021 13:33</span></div>
<div class="gc" style="left:139px;top:115px;width:118px;height:18px;line-height:18px;background:#fff;border-right:1px solid #c4c4c4;border-bottom:1px solid #c4c4c4;"><span style="padding:0 2px 0 2px;display:block;overflow:hidden;white-space:nowrap;position:relative;top:1px">Besuchsbericht</span></div>
<div class="gc" style="left:258px;top:115px;width:120px;height:18px;line-height:18px;background:#fff;border-right:1px solid #c4c4c4;border-bottom:1px solid #c4c4c4;"><span style="padding:0 2px 0 2px;display:block;overflow:hidden;white-space:nowrap;position:relative;top:1px">31.08.2021 13:33:51</span></div>
<div class="gc" style="left:379px;top:115px;width:140px;height:18px;line-height:18px;background:#fff;border-right:1px solid #c4c4c4;border-bottom:1px solid #c4c4c4;"><span style="padding:0 2px 0 2px;display:block;overflow:hidden;white-space:nowrap;position:relative;top:1px"></span></div>
<div style="left:0px;top:134px;width:10px;height:18px;background:#fff;border-right:2px solid #000;border-bottom:1px solid #000;"></div>
<div class="gc" style="left:12px;top:134px;width:22px;height:18px;line-height:18px;background:#fff;border-right:1px solid #c4c4c4;border-bottom:1px solid #c4c4c4;"><span style="padding:0 2px 0 2px;display:block;overflow:hidden;white-space:nowrap;position:relative;top:1px"></span></div>
<div class="gc" style="left:35px;top:134px;width:103px;height:18px;line-height:18px;background:#fff;border-right:1px solid #c4c4c4;border-bottom:1px solid #c4c4c4;"><span style="padding:0 2px 0 2px;display:block;overflow:hidden;white-space:nowrap;position:relative;top:1px">25.08.2021 16:43</span></div>
<div class="gc" style="left:139px;top:134px;width:118px;height:18px;line-height:18px;background:#fff;border-right:1px solid #c4c4c4;border-bottom:1px solid #c4c4c4;"><span style="padding:0 2px 0 2px;display:block;overflow:hidden;white-space:nowrap;position:relative;top:1px">Besuchsbericht</span></div>
<div class="gc" style="left:258px;top:134px;width:120px;height:18px;line-height:18px;background:#fff;border-right:1px solid #c4c4c4;border-bottom:1px solid #c4c4c4;"><span style="padding:0 2px 0 2px;display:block;overflow:hidden;white-space:nowrap;position:relative;top:1px">25.08.2021 16:43:03</span></div>
<div class="gc" style="left:379px;top:134px;width:140px;height:18px;line-height:18px;background:#fff;border-right:1px solid #c4c4c4;border-bottom:1px solid #c4c4c4;"><span style="padding:0 2px 0 2px;display:block;overflow:hidden;white-space:nowrap;position:relative;top:1px"></span></div>
</div>
</div>
<div style="left:1451px;top:551px;width:16px;height:360px;background:#f0f0f0"><svg width="16" height="360" style="display:block"><path d="M4.6 10.4 L7.6 7.2 L10.6 10.4" fill="none" stroke="#5c5c5c" stroke-width="1.9"/><path d="M4.6 349.6 L7.6 352.8 L10.6 349.6" fill="none" stroke="#5c5c5c" stroke-width="1.9"/><rect x="0" y="17" width="16" height="175" fill="#cacaca"/></svg></div>
<div style="left:941px;top:911px;width:510px;height:16px;background:#f0f0f0"><svg width="510" height="16" style="display:block"><path d="M10.2 4.5 L7 7.5 L10.2 10.5" fill="none" stroke="#5c5c5c" stroke-width="1.9"/><path d="M499.8 4.5 L503 7.5 L499.8 10.5" fill="none" stroke="#5c5c5c" stroke-width="1.9"/><rect x="17" y="0" width="17" height="16" fill="#cacaca"/></svg></div>
<div style="left:1451px;top:911px;width:16px;height:16px;background:#f0f0f0"></div>
<div style="left:957px;top:572px"><svg width="15" height="15" viewBox="0 0 16 16" style="display:block"><circle cx="5" cy="5" r="3.2" fill="#fff" stroke="#5a7088" stroke-width="1.2"/><path d="M11.5 1.5 Q15 3 13.5 8 Q11.5 13 6.5 14.5 Q4.5 14.8 4.2 13 L5.8 11.5 L7.4 12.2 Q10 10.6 11.2 7.4 L10.2 5.8 L10.6 2.2Z" fill="#8a9096" stroke="#50565c" stroke-width=".8"/></svg></div>
<div style="left:956px;top:590px"><svg width="17" height="17" viewBox="0 0 17 17" style="display:block"><circle cx="11.4" cy="5.6" r="4.8" fill="#4a84c6" stroke="#2c5c96" stroke-width=".7"/><path d="M11.4 .8 Q8.6 5.6 11.4 10.4 M11.4 .8 Q14.4 5.6 11.4 10.4 M6.8 4.4 Q11.4 6.4 16 4.4" fill="none" stroke="#e4f0fc" stroke-width=".9"/><rect x=".7" y="7.5" width="11.4" height="8.2" fill="#fff" stroke="#5a5a5a" stroke-width=".9"/><path d="M.9 7.7 L6.4 12 L11.9 7.7 M.9 15.5 L4.8 10.9 M11.9 15.5 L8 10.9" fill="none" stroke="#5a5a5a" stroke-width=".8"/></svg></div>
<div style="left:956px;top:609px"><svg width="17" height="17" viewBox="0 0 17 17" style="display:block"><circle cx="11.4" cy="5.6" r="4.8" fill="#4a84c6" stroke="#2c5c96" stroke-width=".7"/><path d="M11.4 .8 Q8.6 5.6 11.4 10.4 M11.4 .8 Q14.4 5.6 11.4 10.4 M6.8 4.4 Q11.4 6.4 16 4.4" fill="none" stroke="#e4f0fc" stroke-width=".9"/><rect x=".7" y="7.5" width="11.4" height="8.2" fill="#fff" stroke="#5a5a5a" stroke-width=".9"/><path d="M.9 7.7 L6.4 12 L11.9 7.7 M.9 15.5 L4.8 10.9 M11.9 15.5 L8 10.9" fill="none" stroke="#5a5a5a" stroke-width=".8"/></svg></div>
<div style="left:956px;top:628px"><svg width="17" height="17" viewBox="0 0 17 17" style="display:block"><circle cx="11.4" cy="5.6" r="4.8" fill="#4a84c6" stroke="#2c5c96" stroke-width=".7"/><path d="M11.4 .8 Q8.6 5.6 11.4 10.4 M11.4 .8 Q14.4 5.6 11.4 10.4 M6.8 4.4 Q11.4 6.4 16 4.4" fill="none" stroke="#e4f0fc" stroke-width=".9"/><rect x=".7" y="7.5" width="11.4" height="8.2" fill="#fff" stroke="#5a5a5a" stroke-width=".9"/><path d="M.9 7.7 L6.4 12 L11.9 7.7 M.9 15.5 L4.8 10.9 M11.9 15.5 L8 10.9" fill="none" stroke="#5a5a5a" stroke-width=".8"/></svg></div>
<div style="left:956px;top:647px"><svg width="17" height="17" viewBox="0 0 17 17" style="display:block"><circle cx="11.4" cy="5.6" r="4.8" fill="#4a84c6" stroke="#2c5c96" stroke-width=".7"/><path d="M11.4 .8 Q8.6 5.6 11.4 10.4 M11.4 .8 Q14.4 5.6 11.4 10.4 M6.8 4.4 Q11.4 6.4 16 4.4" fill="none" stroke="#e4f0fc" stroke-width=".9"/><rect x=".7" y="7.5" width="11.4" height="8.2" fill="#fff" stroke="#5a5a5a" stroke-width=".9"/><path d="M.9 7.7 L6.4 12 L11.9 7.7 M.9 15.5 L4.8 10.9 M11.9 15.5 L8 10.9" fill="none" stroke="#5a5a5a" stroke-width=".8"/></svg></div>
<div style="left:956px;top:666px"><svg width="17" height="17" viewBox="0 0 17 17" style="display:block"><circle cx="11.4" cy="5.6" r="4.8" fill="#4a84c6" stroke="#2c5c96" stroke-width=".7"/><path d="M11.4 .8 Q8.6 5.6 11.4 10.4 M11.4 .8 Q14.4 5.6 11.4 10.4 M6.8 4.4 Q11.4 6.4 16 4.4" fill="none" stroke="#e4f0fc" stroke-width=".9"/><rect x=".7" y="7.5" width="11.4" height="8.2" fill="#fff" stroke="#5a5a5a" stroke-width=".9"/><path d="M.9 7.7 L6.4 12 L11.9 7.7 M.9 15.5 L4.8 10.9 M11.9 15.5 L8 10.9" fill="none" stroke="#5a5a5a" stroke-width=".8"/></svg></div>
<div style="left:956px;top:685px"><svg width="17" height="17" viewBox="0 0 17 17" style="display:block"><circle cx="11.4" cy="5.6" r="4.8" fill="#4a84c6" stroke="#2c5c96" stroke-width=".7"/><path d="M11.4 .8 Q8.6 5.6 11.4 10.4 M11.4 .8 Q14.4 5.6 11.4 10.4 M6.8 4.4 Q11.4 6.4 16 4.4" fill="none" stroke="#e4f0fc" stroke-width=".9"/><rect x=".7" y="7.5" width="11.4" height="8.2" fill="#fff" stroke="#5a5a5a" stroke-width=".9"/><path d="M.9 7.7 L6.4 12 L11.9 7.7 M.9 15.5 L4.8 10.9 M11.9 15.5 L8 10.9" fill="none" stroke="#5a5a5a" stroke-width=".8"/></svg></div>
<div class="t" style="left:1441px;top:572.5px;height:16px;line-height:16px;">C</div>
<div class="blob" style="left:1318px;top:572px;width:125px;height:15px"></div>
<div class="t" style="left:1441px;top:591.5px;height:16px;line-height:16px;">C</div>
<div class="blob" style="left:1320px;top:591px;width:123px;height:15px"></div>
<div class="t" style="left:1441px;top:610.5px;height:16px;line-height:16px;">C</div>
<div class="blob" style="left:1320px;top:610px;width:120px;height:15px"></div>
<div class="t" style="left:1441px;top:629.5px;height:16px;line-height:16px;">G</div>
<div class="blob" style="left:1322px;top:629px;width:120px;height:15px"></div>
<div class="blob" style="left:1320px;top:648px;width:130px;height:15px"></div>
<div class="t" style="left:1441px;top:667.5px;height:16px;line-height:16px;">C</div>
<div class="blob" style="left:1320px;top:667px;width:125px;height:15px"></div>
<div class="blob" style="left:1318px;top:686px;width:84px;height:15px"></div>
<div style="left:940px;top:928px;width:532px;height:103px;background:#fff"></div>
<div class="t" style="left:940.5px;top:928.0px;height:16px;line-height:16px;color:#222;letter-spacing:-.1px">jlkjlkjkljlk</div>
</body></html>
